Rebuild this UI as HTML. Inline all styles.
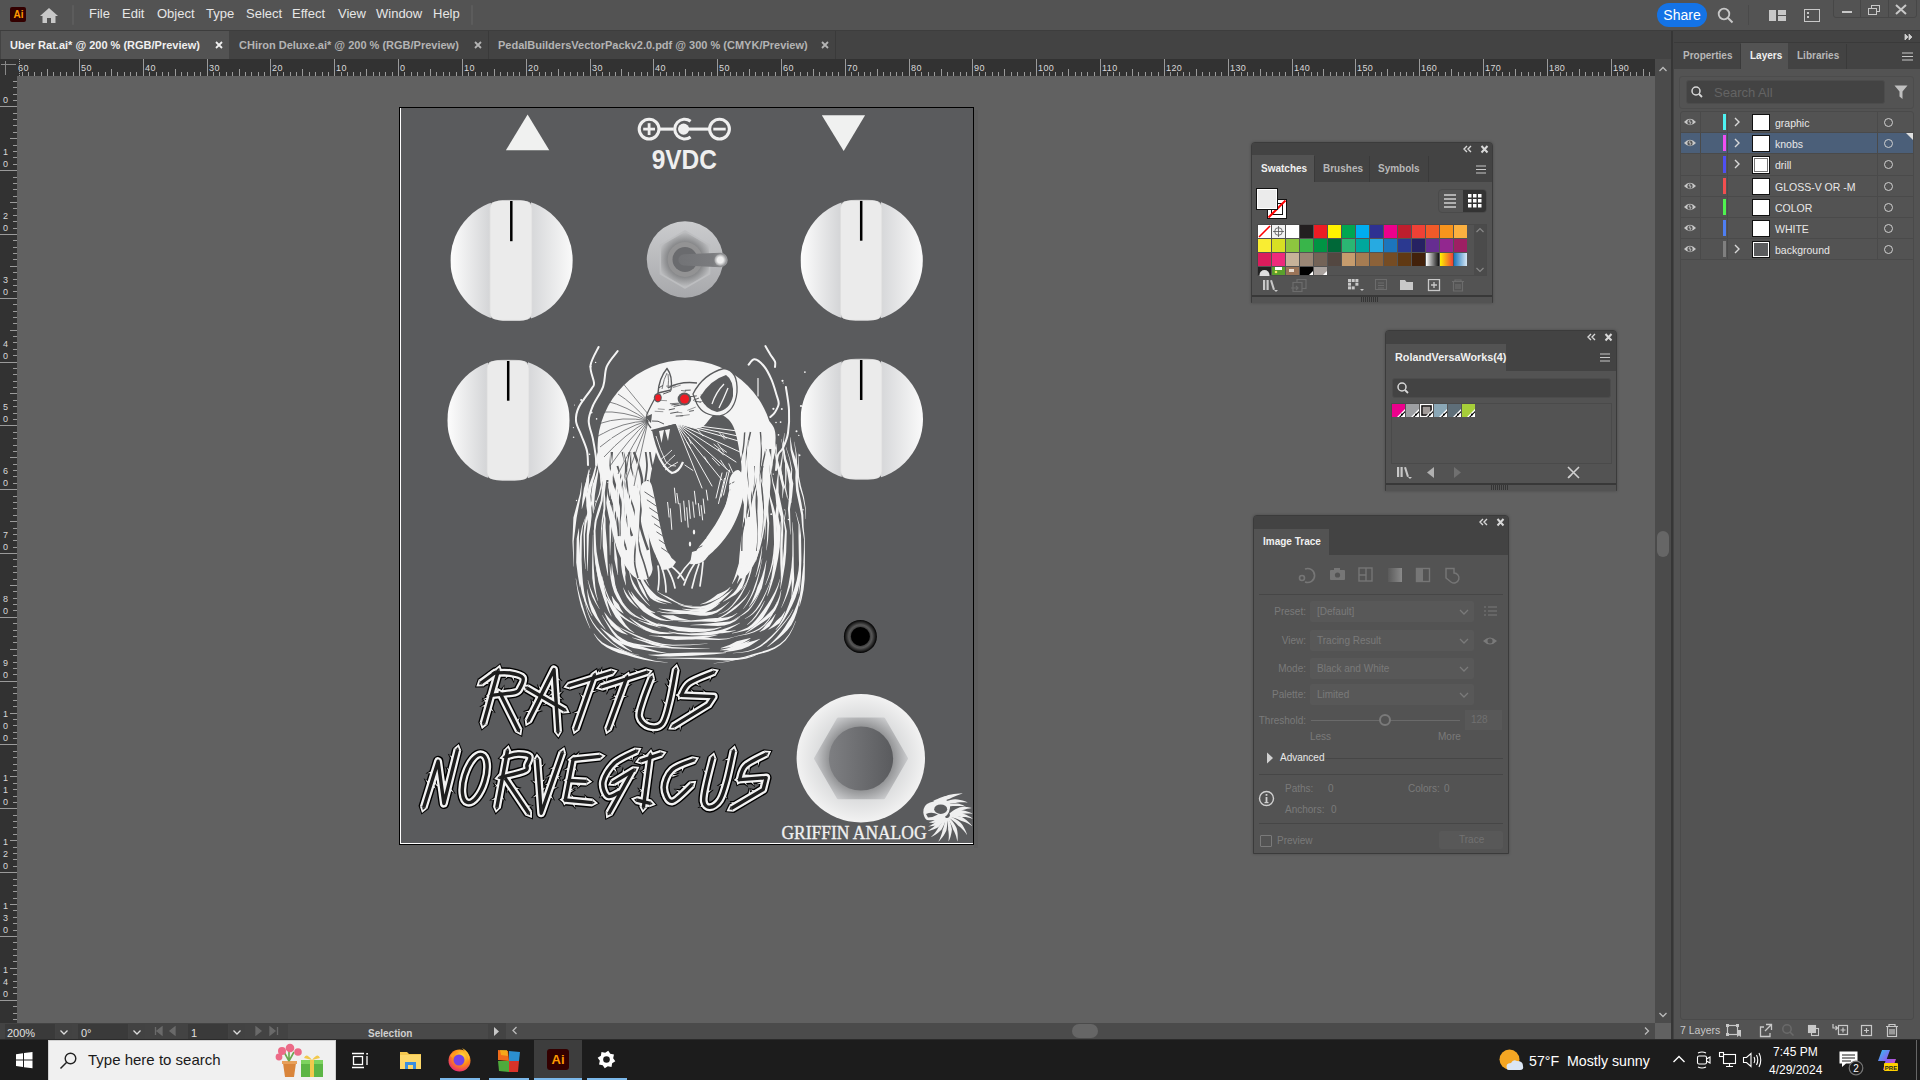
<!DOCTYPE html><html><head><meta charset="utf-8"><style>
*{margin:0;padding:0;box-sizing:border-box}
html,body{width:1920px;height:1080px;overflow:hidden;background:#616161;font-family:"Liberation Sans",sans-serif}
.a{position:absolute}
#menubar{left:0;top:0;width:1920px;height:31px;background:#535353;border-bottom:1px solid #3d3d3d}
.menu{top:6px;font-size:13px;color:#e6e6e6}
#tabbar{left:0;top:31px;width:1671px;height:28px;background:#434343}
.tab{top:0;height:28px;font-size:11px;font-weight:bold;color:#b4b4b4;line-height:28px;white-space:nowrap}
#ruler{left:0;top:59px;width:1655px;height:17px;background:#323232}
#vruler{left:0;top:59px;width:17px;height:964px;background:#323232}
.rl{font-size:10px;color:#c8c8c8;font-family:"Liberation Sans",sans-serif}
#canvas{left:17px;top:76px;width:1638px;height:947px;background:#616161}
#vscroll{left:1655px;top:59px;width:16px;height:964px;background:#4b4b4b}
#hscroll{left:506px;top:1023px;width:1149px;height:16px;background:#4b4b4b}
#status{left:0;top:1023px;width:506px;height:16px;background:#434343}
#rpanel{left:1674px;top:31px;width:246px;height:1008px;background:#535353}
#taskbar{left:0;top:1040px;width:1920px;height:40px;background:#1c1c1c}
</style></head><body>
<div id="menubar" class="a"></div>
<div class="a" style="left:10px;top:7px;width:16px;height:15px;background:#330000;border-radius:2px"></div>
<div class="a" style="left:11px;top:7px;width:15px;height:15px;font-size:10px;font-weight:bold;color:#ff9a00;line-height:15px;text-align:center">Ai</div>
<svg class="a" style="left:39px;top:7px" width="20" height="17" viewBox="0 0 20 17"><path d="M10 1 L19 9 L16.5 9 L16.5 16 L12 16 L12 11 L8 11 L8 16 L3.5 16 L3.5 9 L1 9 Z" fill="#c8c8c8"/></svg>
<div class="a" style="left:72px;top:5px;width:2px;height:20px;background:#5c5c5c;border-radius:1px"></div>
<div class="a menu" style="left:89px">File</div>
<div class="a menu" style="left:122px">Edit</div>
<div class="a menu" style="left:157px">Object</div>
<div class="a menu" style="left:206px">Type</div>
<div class="a menu" style="left:246px">Select</div>
<div class="a menu" style="left:292px">Effect</div>
<div class="a menu" style="left:338px">View</div>
<div class="a menu" style="left:376px">Window</div>
<div class="a menu" style="left:433px">Help</div>
<div class="a" style="left:471px;top:5px;width:2px;height:20px;background:#5c5c5c;border-radius:1px"></div>
<div class="a" style="left:1657px;top:3px;width:50px;height:24px;background:#1473e6;border-radius:12px;color:#fff;font-size:14px;line-height:24px;text-align:center">Share</div>
<svg class="a" style="left:1717px;top:7px" width="18" height="17" viewBox="0 0 18 17"><circle cx="7" cy="7" r="5.3" stroke="#c8c8c8" stroke-width="1.8" fill="none"/><line x1="11" y1="11" x2="15.5" y2="15.5" stroke="#c8c8c8" stroke-width="2"/></svg>
<div class="a" style="left:1748px;top:5px;width:1px;height:20px;background:#4a4a4a"></div>
<div class="a" style="left:1769px;top:10px;width:7px;height:11px;background:#c8c8c8"></div><div class="a" style="left:1778px;top:10px;width:8px;height:5px;background:#c8c8c8"></div><div class="a" style="left:1778px;top:16px;width:8px;height:5px;background:#c8c8c8"></div>
<div class="a" style="left:1804px;top:9px;width:16px;height:13px;border:1.5px solid #c8c8c8"></div><div class="a" style="left:1807px;top:12px;width:2px;height:6px;border-left:2px dotted #c8c8c8"></div>
<div class="a" style="left:1833px;top:-2px;width:84px;height:20px;border:1px solid #474747;border-radius:3px"></div>
<div class="a" style="left:1860px;top:0px;width:1px;height:18px;background:#474747"></div><div class="a" style="left:1888px;top:0px;width:1px;height:18px;background:#474747"></div>
<div class="a" style="left:1842px;top:11px;width:10px;height:2px;background:#c8c8c8"></div>
<div class="a" style="left:1871px;top:5px;width:9px;height:7px;border:1.5px solid #c8c8c8"></div><div class="a" style="left:1868px;top:8px;width:9px;height:7px;border:1.5px solid #c8c8c8;background:#535353"></div>
<svg class="a" style="left:1895px;top:4px" width="12" height="11"><path d="M1 1 L11 10 M11 1 L1 10" stroke="#c8c8c8" stroke-width="2"/></svg>
<div id="tabbar" class="a"></div>
<div class="a" style="left:1px;top:31px;width:228px;height:28px;background:#535353"></div>
<div class="a tab" style="left:10px;top:31px;color:#f0f0f0">Uber Rat.ai* @ 200 % (RGB/Preview)</div>
<svg class="a" style="left:215px;top:41px" width="8" height="8"><path d="M1 1 L7 7 M7 1 L1 7" stroke="#f0f0f0" stroke-width="1.8"/></svg>
<div class="a tab" style="left:239px;top:31px">CHiron Deluxe.ai* @ 200 % (RGB/Preview)</div>
<svg class="a" style="left:474px;top:41px" width="8" height="8"><path d="M1 1 L7 7 M7 1 L1 7" stroke="#b4b4b4" stroke-width="1.8"/></svg>
<div class="a" style="left:488px;top:31px;width:1px;height:28px;background:#3a3a3a"></div>
<div class="a tab" style="left:498px;top:31px">PedalBuildersVectorPackv2.0.pdf @ 300 % (CMYK/Preview)</div>
<svg class="a" style="left:821px;top:41px" width="8" height="8"><path d="M1 1 L7 7 M7 1 L1 7" stroke="#b4b4b4" stroke-width="1.8"/></svg>
<div class="a" style="left:835px;top:31px;width:1px;height:28px;background:#3a3a3a"></div>
<div id="ruler" class="a"></div>
<div id="vruler" class="a"></div>
<div id="canvas" class="a"></div>
<svg class="a" style="left:0;top:59px" width="1655" height="17"><text x="18" y="12" fill="#d8d8d8" font-size="9" letter-spacing="0.4" font-family="Liberation Sans">60</text><line x1="19.5" y1="0" x2="19.5" y2="17" stroke="#9a9a9a" stroke-dasharray="1 1"/><line x1="22.5" y1="13" x2="22.5" y2="17" stroke="#9a9a9a" stroke-width="1"/><line x1="28.5" y1="13" x2="28.5" y2="17" stroke="#9a9a9a" stroke-width="1"/><line x1="34.5" y1="13" x2="34.5" y2="17" stroke="#9a9a9a" stroke-width="1"/><line x1="41.5" y1="13" x2="41.5" y2="17" stroke="#9a9a9a" stroke-width="1"/><line x1="47.5" y1="10" x2="47.5" y2="17" stroke="#9a9a9a" stroke-width="1"/><line x1="53.5" y1="13" x2="53.5" y2="17" stroke="#9a9a9a" stroke-width="1"/><line x1="60.5" y1="13" x2="60.5" y2="17" stroke="#9a9a9a" stroke-width="1"/><line x1="66.5" y1="13" x2="66.5" y2="17" stroke="#9a9a9a" stroke-width="1"/><line x1="73.5" y1="13" x2="73.5" y2="17" stroke="#9a9a9a" stroke-width="1"/><line x1="79.5" y1="0" x2="79.5" y2="17" stroke="#9a9a9a" stroke-width="1"/><text x="81" y="12" fill="#d8d8d8" font-size="9" letter-spacing="0.4" font-family="Liberation Sans">50</text><line x1="85.5" y1="13" x2="85.5" y2="17" stroke="#9a9a9a" stroke-width="1"/><line x1="92.5" y1="13" x2="92.5" y2="17" stroke="#9a9a9a" stroke-width="1"/><line x1="98.5" y1="13" x2="98.5" y2="17" stroke="#9a9a9a" stroke-width="1"/><line x1="105.5" y1="13" x2="105.5" y2="17" stroke="#9a9a9a" stroke-width="1"/><line x1="111.5" y1="10" x2="111.5" y2="17" stroke="#9a9a9a" stroke-width="1"/><line x1="117.5" y1="13" x2="117.5" y2="17" stroke="#9a9a9a" stroke-width="1"/><line x1="124.5" y1="13" x2="124.5" y2="17" stroke="#9a9a9a" stroke-width="1"/><line x1="130.5" y1="13" x2="130.5" y2="17" stroke="#9a9a9a" stroke-width="1"/><line x1="136.5" y1="13" x2="136.5" y2="17" stroke="#9a9a9a" stroke-width="1"/><line x1="143.5" y1="0" x2="143.5" y2="17" stroke="#9a9a9a" stroke-width="1"/><text x="145" y="12" fill="#d8d8d8" font-size="9" letter-spacing="0.4" font-family="Liberation Sans">40</text><line x1="149.5" y1="13" x2="149.5" y2="17" stroke="#9a9a9a" stroke-width="1"/><line x1="156.5" y1="13" x2="156.5" y2="17" stroke="#9a9a9a" stroke-width="1"/><line x1="162.5" y1="13" x2="162.5" y2="17" stroke="#9a9a9a" stroke-width="1"/><line x1="168.5" y1="13" x2="168.5" y2="17" stroke="#9a9a9a" stroke-width="1"/><line x1="175.5" y1="10" x2="175.5" y2="17" stroke="#9a9a9a" stroke-width="1"/><line x1="181.5" y1="13" x2="181.5" y2="17" stroke="#9a9a9a" stroke-width="1"/><line x1="187.5" y1="13" x2="187.5" y2="17" stroke="#9a9a9a" stroke-width="1"/><line x1="194.5" y1="13" x2="194.5" y2="17" stroke="#9a9a9a" stroke-width="1"/><line x1="200.5" y1="13" x2="200.5" y2="17" stroke="#9a9a9a" stroke-width="1"/><line x1="207.5" y1="0" x2="207.5" y2="17" stroke="#9a9a9a" stroke-width="1"/><text x="209" y="12" fill="#d8d8d8" font-size="9" letter-spacing="0.4" font-family="Liberation Sans">30</text><line x1="213.5" y1="13" x2="213.5" y2="17" stroke="#9a9a9a" stroke-width="1"/><line x1="219.5" y1="13" x2="219.5" y2="17" stroke="#9a9a9a" stroke-width="1"/><line x1="226.5" y1="13" x2="226.5" y2="17" stroke="#9a9a9a" stroke-width="1"/><line x1="232.5" y1="13" x2="232.5" y2="17" stroke="#9a9a9a" stroke-width="1"/><line x1="239.5" y1="10" x2="239.5" y2="17" stroke="#9a9a9a" stroke-width="1"/><line x1="245.5" y1="13" x2="245.5" y2="17" stroke="#9a9a9a" stroke-width="1"/><line x1="251.5" y1="13" x2="251.5" y2="17" stroke="#9a9a9a" stroke-width="1"/><line x1="258.5" y1="13" x2="258.5" y2="17" stroke="#9a9a9a" stroke-width="1"/><line x1="264.5" y1="13" x2="264.5" y2="17" stroke="#9a9a9a" stroke-width="1"/><line x1="270.5" y1="0" x2="270.5" y2="17" stroke="#9a9a9a" stroke-width="1"/><text x="272" y="12" fill="#d8d8d8" font-size="9" letter-spacing="0.4" font-family="Liberation Sans">20</text><line x1="277.5" y1="13" x2="277.5" y2="17" stroke="#9a9a9a" stroke-width="1"/><line x1="283.5" y1="13" x2="283.5" y2="17" stroke="#9a9a9a" stroke-width="1"/><line x1="290.5" y1="13" x2="290.5" y2="17" stroke="#9a9a9a" stroke-width="1"/><line x1="296.5" y1="13" x2="296.5" y2="17" stroke="#9a9a9a" stroke-width="1"/><line x1="302.5" y1="10" x2="302.5" y2="17" stroke="#9a9a9a" stroke-width="1"/><line x1="309.5" y1="13" x2="309.5" y2="17" stroke="#9a9a9a" stroke-width="1"/><line x1="315.5" y1="13" x2="315.5" y2="17" stroke="#9a9a9a" stroke-width="1"/><line x1="322.5" y1="13" x2="322.5" y2="17" stroke="#9a9a9a" stroke-width="1"/><line x1="328.5" y1="13" x2="328.5" y2="17" stroke="#9a9a9a" stroke-width="1"/><line x1="334.5" y1="0" x2="334.5" y2="17" stroke="#9a9a9a" stroke-width="1"/><text x="336" y="12" fill="#d8d8d8" font-size="9" letter-spacing="0.4" font-family="Liberation Sans">10</text><line x1="341.5" y1="13" x2="341.5" y2="17" stroke="#9a9a9a" stroke-width="1"/><line x1="347.5" y1="13" x2="347.5" y2="17" stroke="#9a9a9a" stroke-width="1"/><line x1="353.5" y1="13" x2="353.5" y2="17" stroke="#9a9a9a" stroke-width="1"/><line x1="360.5" y1="13" x2="360.5" y2="17" stroke="#9a9a9a" stroke-width="1"/><line x1="366.5" y1="10" x2="366.5" y2="17" stroke="#9a9a9a" stroke-width="1"/><line x1="373.5" y1="13" x2="373.5" y2="17" stroke="#9a9a9a" stroke-width="1"/><line x1="379.5" y1="13" x2="379.5" y2="17" stroke="#9a9a9a" stroke-width="1"/><line x1="385.5" y1="13" x2="385.5" y2="17" stroke="#9a9a9a" stroke-width="1"/><line x1="392.5" y1="13" x2="392.5" y2="17" stroke="#9a9a9a" stroke-width="1"/><line x1="398.5" y1="0" x2="398.5" y2="17" stroke="#9a9a9a" stroke-width="1"/><text x="400" y="12" fill="#d8d8d8" font-size="9" letter-spacing="0.4" font-family="Liberation Sans">0</text><line x1="404.5" y1="13" x2="404.5" y2="17" stroke="#9a9a9a" stroke-width="1"/><line x1="411.5" y1="13" x2="411.5" y2="17" stroke="#9a9a9a" stroke-width="1"/><line x1="417.5" y1="13" x2="417.5" y2="17" stroke="#9a9a9a" stroke-width="1"/><line x1="424.5" y1="13" x2="424.5" y2="17" stroke="#9a9a9a" stroke-width="1"/><line x1="430.5" y1="10" x2="430.5" y2="17" stroke="#9a9a9a" stroke-width="1"/><line x1="436.5" y1="13" x2="436.5" y2="17" stroke="#9a9a9a" stroke-width="1"/><line x1="443.5" y1="13" x2="443.5" y2="17" stroke="#9a9a9a" stroke-width="1"/><line x1="449.5" y1="13" x2="449.5" y2="17" stroke="#9a9a9a" stroke-width="1"/><line x1="456.5" y1="13" x2="456.5" y2="17" stroke="#9a9a9a" stroke-width="1"/><line x1="462.5" y1="0" x2="462.5" y2="17" stroke="#9a9a9a" stroke-width="1"/><text x="464" y="12" fill="#d8d8d8" font-size="9" letter-spacing="0.4" font-family="Liberation Sans">10</text><line x1="468.5" y1="13" x2="468.5" y2="17" stroke="#9a9a9a" stroke-width="1"/><line x1="475.5" y1="13" x2="475.5" y2="17" stroke="#9a9a9a" stroke-width="1"/><line x1="481.5" y1="13" x2="481.5" y2="17" stroke="#9a9a9a" stroke-width="1"/><line x1="487.5" y1="13" x2="487.5" y2="17" stroke="#9a9a9a" stroke-width="1"/><line x1="494.5" y1="10" x2="494.5" y2="17" stroke="#9a9a9a" stroke-width="1"/><line x1="500.5" y1="13" x2="500.5" y2="17" stroke="#9a9a9a" stroke-width="1"/><line x1="507.5" y1="13" x2="507.5" y2="17" stroke="#9a9a9a" stroke-width="1"/><line x1="513.5" y1="13" x2="513.5" y2="17" stroke="#9a9a9a" stroke-width="1"/><line x1="519.5" y1="13" x2="519.5" y2="17" stroke="#9a9a9a" stroke-width="1"/><line x1="526.5" y1="0" x2="526.5" y2="17" stroke="#9a9a9a" stroke-width="1"/><text x="528" y="12" fill="#d8d8d8" font-size="9" letter-spacing="0.4" font-family="Liberation Sans">20</text><line x1="532.5" y1="13" x2="532.5" y2="17" stroke="#9a9a9a" stroke-width="1"/><line x1="539.5" y1="13" x2="539.5" y2="17" stroke="#9a9a9a" stroke-width="1"/><line x1="545.5" y1="13" x2="545.5" y2="17" stroke="#9a9a9a" stroke-width="1"/><line x1="551.5" y1="13" x2="551.5" y2="17" stroke="#9a9a9a" stroke-width="1"/><line x1="558.5" y1="10" x2="558.5" y2="17" stroke="#9a9a9a" stroke-width="1"/><line x1="564.5" y1="13" x2="564.5" y2="17" stroke="#9a9a9a" stroke-width="1"/><line x1="570.5" y1="13" x2="570.5" y2="17" stroke="#9a9a9a" stroke-width="1"/><line x1="577.5" y1="13" x2="577.5" y2="17" stroke="#9a9a9a" stroke-width="1"/><line x1="583.5" y1="13" x2="583.5" y2="17" stroke="#9a9a9a" stroke-width="1"/><line x1="590.5" y1="0" x2="590.5" y2="17" stroke="#9a9a9a" stroke-width="1"/><text x="592" y="12" fill="#d8d8d8" font-size="9" letter-spacing="0.4" font-family="Liberation Sans">30</text><line x1="596.5" y1="13" x2="596.5" y2="17" stroke="#9a9a9a" stroke-width="1"/><line x1="602.5" y1="13" x2="602.5" y2="17" stroke="#9a9a9a" stroke-width="1"/><line x1="609.5" y1="13" x2="609.5" y2="17" stroke="#9a9a9a" stroke-width="1"/><line x1="615.5" y1="13" x2="615.5" y2="17" stroke="#9a9a9a" stroke-width="1"/><line x1="621.5" y1="10" x2="621.5" y2="17" stroke="#9a9a9a" stroke-width="1"/><line x1="628.5" y1="13" x2="628.5" y2="17" stroke="#9a9a9a" stroke-width="1"/><line x1="634.5" y1="13" x2="634.5" y2="17" stroke="#9a9a9a" stroke-width="1"/><line x1="641.5" y1="13" x2="641.5" y2="17" stroke="#9a9a9a" stroke-width="1"/><line x1="647.5" y1="13" x2="647.5" y2="17" stroke="#9a9a9a" stroke-width="1"/><line x1="653.5" y1="0" x2="653.5" y2="17" stroke="#9a9a9a" stroke-width="1"/><text x="655" y="12" fill="#d8d8d8" font-size="9" letter-spacing="0.4" font-family="Liberation Sans">40</text><line x1="660.5" y1="13" x2="660.5" y2="17" stroke="#9a9a9a" stroke-width="1"/><line x1="666.5" y1="13" x2="666.5" y2="17" stroke="#9a9a9a" stroke-width="1"/><line x1="673.5" y1="13" x2="673.5" y2="17" stroke="#9a9a9a" stroke-width="1"/><line x1="679.5" y1="13" x2="679.5" y2="17" stroke="#9a9a9a" stroke-width="1"/><line x1="685.5" y1="10" x2="685.5" y2="17" stroke="#9a9a9a" stroke-width="1"/><line x1="692.5" y1="13" x2="692.5" y2="17" stroke="#9a9a9a" stroke-width="1"/><line x1="698.5" y1="13" x2="698.5" y2="17" stroke="#9a9a9a" stroke-width="1"/><line x1="704.5" y1="13" x2="704.5" y2="17" stroke="#9a9a9a" stroke-width="1"/><line x1="711.5" y1="13" x2="711.5" y2="17" stroke="#9a9a9a" stroke-width="1"/><line x1="717.5" y1="0" x2="717.5" y2="17" stroke="#9a9a9a" stroke-width="1"/><text x="719" y="12" fill="#d8d8d8" font-size="9" letter-spacing="0.4" font-family="Liberation Sans">50</text><line x1="724.5" y1="13" x2="724.5" y2="17" stroke="#9a9a9a" stroke-width="1"/><line x1="730.5" y1="13" x2="730.5" y2="17" stroke="#9a9a9a" stroke-width="1"/><line x1="736.5" y1="13" x2="736.5" y2="17" stroke="#9a9a9a" stroke-width="1"/><line x1="743.5" y1="13" x2="743.5" y2="17" stroke="#9a9a9a" stroke-width="1"/><line x1="749.5" y1="10" x2="749.5" y2="17" stroke="#9a9a9a" stroke-width="1"/><line x1="755.5" y1="13" x2="755.5" y2="17" stroke="#9a9a9a" stroke-width="1"/><line x1="762.5" y1="13" x2="762.5" y2="17" stroke="#9a9a9a" stroke-width="1"/><line x1="768.5" y1="13" x2="768.5" y2="17" stroke="#9a9a9a" stroke-width="1"/><line x1="775.5" y1="13" x2="775.5" y2="17" stroke="#9a9a9a" stroke-width="1"/><line x1="781.5" y1="0" x2="781.5" y2="17" stroke="#9a9a9a" stroke-width="1"/><text x="783" y="12" fill="#d8d8d8" font-size="9" letter-spacing="0.4" font-family="Liberation Sans">60</text><line x1="787.5" y1="13" x2="787.5" y2="17" stroke="#9a9a9a" stroke-width="1"/><line x1="794.5" y1="13" x2="794.5" y2="17" stroke="#9a9a9a" stroke-width="1"/><line x1="800.5" y1="13" x2="800.5" y2="17" stroke="#9a9a9a" stroke-width="1"/><line x1="807.5" y1="13" x2="807.5" y2="17" stroke="#9a9a9a" stroke-width="1"/><line x1="813.5" y1="10" x2="813.5" y2="17" stroke="#9a9a9a" stroke-width="1"/><line x1="819.5" y1="13" x2="819.5" y2="17" stroke="#9a9a9a" stroke-width="1"/><line x1="826.5" y1="13" x2="826.5" y2="17" stroke="#9a9a9a" stroke-width="1"/><line x1="832.5" y1="13" x2="832.5" y2="17" stroke="#9a9a9a" stroke-width="1"/><line x1="838.5" y1="13" x2="838.5" y2="17" stroke="#9a9a9a" stroke-width="1"/><line x1="845.5" y1="0" x2="845.5" y2="17" stroke="#9a9a9a" stroke-width="1"/><text x="847" y="12" fill="#d8d8d8" font-size="9" letter-spacing="0.4" font-family="Liberation Sans">70</text><line x1="851.5" y1="13" x2="851.5" y2="17" stroke="#9a9a9a" stroke-width="1"/><line x1="858.5" y1="13" x2="858.5" y2="17" stroke="#9a9a9a" stroke-width="1"/><line x1="864.5" y1="13" x2="864.5" y2="17" stroke="#9a9a9a" stroke-width="1"/><line x1="870.5" y1="13" x2="870.5" y2="17" stroke="#9a9a9a" stroke-width="1"/><line x1="877.5" y1="10" x2="877.5" y2="17" stroke="#9a9a9a" stroke-width="1"/><line x1="883.5" y1="13" x2="883.5" y2="17" stroke="#9a9a9a" stroke-width="1"/><line x1="890.5" y1="13" x2="890.5" y2="17" stroke="#9a9a9a" stroke-width="1"/><line x1="896.5" y1="13" x2="896.5" y2="17" stroke="#9a9a9a" stroke-width="1"/><line x1="902.5" y1="13" x2="902.5" y2="17" stroke="#9a9a9a" stroke-width="1"/><line x1="909.5" y1="0" x2="909.5" y2="17" stroke="#9a9a9a" stroke-width="1"/><text x="911" y="12" fill="#d8d8d8" font-size="9" letter-spacing="0.4" font-family="Liberation Sans">80</text><line x1="915.5" y1="13" x2="915.5" y2="17" stroke="#9a9a9a" stroke-width="1"/><line x1="921.5" y1="13" x2="921.5" y2="17" stroke="#9a9a9a" stroke-width="1"/><line x1="928.5" y1="13" x2="928.5" y2="17" stroke="#9a9a9a" stroke-width="1"/><line x1="934.5" y1="13" x2="934.5" y2="17" stroke="#9a9a9a" stroke-width="1"/><line x1="941.5" y1="10" x2="941.5" y2="17" stroke="#9a9a9a" stroke-width="1"/><line x1="947.5" y1="13" x2="947.5" y2="17" stroke="#9a9a9a" stroke-width="1"/><line x1="953.5" y1="13" x2="953.5" y2="17" stroke="#9a9a9a" stroke-width="1"/><line x1="960.5" y1="13" x2="960.5" y2="17" stroke="#9a9a9a" stroke-width="1"/><line x1="966.5" y1="13" x2="966.5" y2="17" stroke="#9a9a9a" stroke-width="1"/><line x1="972.5" y1="0" x2="972.5" y2="17" stroke="#9a9a9a" stroke-width="1"/><text x="974" y="12" fill="#d8d8d8" font-size="9" letter-spacing="0.4" font-family="Liberation Sans">90</text><line x1="979.5" y1="13" x2="979.5" y2="17" stroke="#9a9a9a" stroke-width="1"/><line x1="985.5" y1="13" x2="985.5" y2="17" stroke="#9a9a9a" stroke-width="1"/><line x1="992.5" y1="13" x2="992.5" y2="17" stroke="#9a9a9a" stroke-width="1"/><line x1="998.5" y1="13" x2="998.5" y2="17" stroke="#9a9a9a" stroke-width="1"/><line x1="1004.5" y1="10" x2="1004.5" y2="17" stroke="#9a9a9a" stroke-width="1"/><line x1="1011.5" y1="13" x2="1011.5" y2="17" stroke="#9a9a9a" stroke-width="1"/><line x1="1017.5" y1="13" x2="1017.5" y2="17" stroke="#9a9a9a" stroke-width="1"/><line x1="1024.5" y1="13" x2="1024.5" y2="17" stroke="#9a9a9a" stroke-width="1"/><line x1="1030.5" y1="13" x2="1030.5" y2="17" stroke="#9a9a9a" stroke-width="1"/><line x1="1036.5" y1="0" x2="1036.5" y2="17" stroke="#9a9a9a" stroke-width="1"/><text x="1038" y="12" fill="#d8d8d8" font-size="9" letter-spacing="0.4" font-family="Liberation Sans">100</text><line x1="1043.5" y1="13" x2="1043.5" y2="17" stroke="#9a9a9a" stroke-width="1"/><line x1="1049.5" y1="13" x2="1049.5" y2="17" stroke="#9a9a9a" stroke-width="1"/><line x1="1055.5" y1="13" x2="1055.5" y2="17" stroke="#9a9a9a" stroke-width="1"/><line x1="1062.5" y1="13" x2="1062.5" y2="17" stroke="#9a9a9a" stroke-width="1"/><line x1="1068.5" y1="10" x2="1068.5" y2="17" stroke="#9a9a9a" stroke-width="1"/><line x1="1075.5" y1="13" x2="1075.5" y2="17" stroke="#9a9a9a" stroke-width="1"/><line x1="1081.5" y1="13" x2="1081.5" y2="17" stroke="#9a9a9a" stroke-width="1"/><line x1="1087.5" y1="13" x2="1087.5" y2="17" stroke="#9a9a9a" stroke-width="1"/><line x1="1094.5" y1="13" x2="1094.5" y2="17" stroke="#9a9a9a" stroke-width="1"/><line x1="1100.5" y1="0" x2="1100.5" y2="17" stroke="#9a9a9a" stroke-width="1"/><text x="1102" y="12" fill="#d8d8d8" font-size="9" letter-spacing="0.4" font-family="Liberation Sans">110</text><line x1="1107.5" y1="13" x2="1107.5" y2="17" stroke="#9a9a9a" stroke-width="1"/><line x1="1113.5" y1="13" x2="1113.5" y2="17" stroke="#9a9a9a" stroke-width="1"/><line x1="1119.5" y1="13" x2="1119.5" y2="17" stroke="#9a9a9a" stroke-width="1"/><line x1="1126.5" y1="13" x2="1126.5" y2="17" stroke="#9a9a9a" stroke-width="1"/><line x1="1132.5" y1="10" x2="1132.5" y2="17" stroke="#9a9a9a" stroke-width="1"/><line x1="1138.5" y1="13" x2="1138.5" y2="17" stroke="#9a9a9a" stroke-width="1"/><line x1="1145.5" y1="13" x2="1145.5" y2="17" stroke="#9a9a9a" stroke-width="1"/><line x1="1151.5" y1="13" x2="1151.5" y2="17" stroke="#9a9a9a" stroke-width="1"/><line x1="1158.5" y1="13" x2="1158.5" y2="17" stroke="#9a9a9a" stroke-width="1"/><line x1="1164.5" y1="0" x2="1164.5" y2="17" stroke="#9a9a9a" stroke-width="1"/><text x="1166" y="12" fill="#d8d8d8" font-size="9" letter-spacing="0.4" font-family="Liberation Sans">120</text><line x1="1170.5" y1="13" x2="1170.5" y2="17" stroke="#9a9a9a" stroke-width="1"/><line x1="1177.5" y1="13" x2="1177.5" y2="17" stroke="#9a9a9a" stroke-width="1"/><line x1="1183.5" y1="13" x2="1183.5" y2="17" stroke="#9a9a9a" stroke-width="1"/><line x1="1189.5" y1="13" x2="1189.5" y2="17" stroke="#9a9a9a" stroke-width="1"/><line x1="1196.5" y1="10" x2="1196.5" y2="17" stroke="#9a9a9a" stroke-width="1"/><line x1="1202.5" y1="13" x2="1202.5" y2="17" stroke="#9a9a9a" stroke-width="1"/><line x1="1209.5" y1="13" x2="1209.5" y2="17" stroke="#9a9a9a" stroke-width="1"/><line x1="1215.5" y1="13" x2="1215.5" y2="17" stroke="#9a9a9a" stroke-width="1"/><line x1="1221.5" y1="13" x2="1221.5" y2="17" stroke="#9a9a9a" stroke-width="1"/><line x1="1228.5" y1="0" x2="1228.5" y2="17" stroke="#9a9a9a" stroke-width="1"/><text x="1230" y="12" fill="#d8d8d8" font-size="9" letter-spacing="0.4" font-family="Liberation Sans">130</text><line x1="1234.5" y1="13" x2="1234.5" y2="17" stroke="#9a9a9a" stroke-width="1"/><line x1="1241.5" y1="13" x2="1241.5" y2="17" stroke="#9a9a9a" stroke-width="1"/><line x1="1247.5" y1="13" x2="1247.5" y2="17" stroke="#9a9a9a" stroke-width="1"/><line x1="1253.5" y1="13" x2="1253.5" y2="17" stroke="#9a9a9a" stroke-width="1"/><line x1="1260.5" y1="10" x2="1260.5" y2="17" stroke="#9a9a9a" stroke-width="1"/><line x1="1266.5" y1="13" x2="1266.5" y2="17" stroke="#9a9a9a" stroke-width="1"/><line x1="1272.5" y1="13" x2="1272.5" y2="17" stroke="#9a9a9a" stroke-width="1"/><line x1="1279.5" y1="13" x2="1279.5" y2="17" stroke="#9a9a9a" stroke-width="1"/><line x1="1285.5" y1="13" x2="1285.5" y2="17" stroke="#9a9a9a" stroke-width="1"/><line x1="1292.5" y1="0" x2="1292.5" y2="17" stroke="#9a9a9a" stroke-width="1"/><text x="1294" y="12" fill="#d8d8d8" font-size="9" letter-spacing="0.4" font-family="Liberation Sans">140</text><line x1="1298.5" y1="13" x2="1298.5" y2="17" stroke="#9a9a9a" stroke-width="1"/><line x1="1304.5" y1="13" x2="1304.5" y2="17" stroke="#9a9a9a" stroke-width="1"/><line x1="1311.5" y1="13" x2="1311.5" y2="17" stroke="#9a9a9a" stroke-width="1"/><line x1="1317.5" y1="13" x2="1317.5" y2="17" stroke="#9a9a9a" stroke-width="1"/><line x1="1323.5" y1="10" x2="1323.5" y2="17" stroke="#9a9a9a" stroke-width="1"/><line x1="1330.5" y1="13" x2="1330.5" y2="17" stroke="#9a9a9a" stroke-width="1"/><line x1="1336.5" y1="13" x2="1336.5" y2="17" stroke="#9a9a9a" stroke-width="1"/><line x1="1343.5" y1="13" x2="1343.5" y2="17" stroke="#9a9a9a" stroke-width="1"/><line x1="1349.5" y1="13" x2="1349.5" y2="17" stroke="#9a9a9a" stroke-width="1"/><line x1="1355.5" y1="0" x2="1355.5" y2="17" stroke="#9a9a9a" stroke-width="1"/><text x="1357" y="12" fill="#d8d8d8" font-size="9" letter-spacing="0.4" font-family="Liberation Sans">150</text><line x1="1362.5" y1="13" x2="1362.5" y2="17" stroke="#9a9a9a" stroke-width="1"/><line x1="1368.5" y1="13" x2="1368.5" y2="17" stroke="#9a9a9a" stroke-width="1"/><line x1="1375.5" y1="13" x2="1375.5" y2="17" stroke="#9a9a9a" stroke-width="1"/><line x1="1381.5" y1="13" x2="1381.5" y2="17" stroke="#9a9a9a" stroke-width="1"/><line x1="1387.5" y1="10" x2="1387.5" y2="17" stroke="#9a9a9a" stroke-width="1"/><line x1="1394.5" y1="13" x2="1394.5" y2="17" stroke="#9a9a9a" stroke-width="1"/><line x1="1400.5" y1="13" x2="1400.5" y2="17" stroke="#9a9a9a" stroke-width="1"/><line x1="1406.5" y1="13" x2="1406.5" y2="17" stroke="#9a9a9a" stroke-width="1"/><line x1="1413.5" y1="13" x2="1413.5" y2="17" stroke="#9a9a9a" stroke-width="1"/><line x1="1419.5" y1="0" x2="1419.5" y2="17" stroke="#9a9a9a" stroke-width="1"/><text x="1421" y="12" fill="#d8d8d8" font-size="9" letter-spacing="0.4" font-family="Liberation Sans">160</text><line x1="1426.5" y1="13" x2="1426.5" y2="17" stroke="#9a9a9a" stroke-width="1"/><line x1="1432.5" y1="13" x2="1432.5" y2="17" stroke="#9a9a9a" stroke-width="1"/><line x1="1438.5" y1="13" x2="1438.5" y2="17" stroke="#9a9a9a" stroke-width="1"/><line x1="1445.5" y1="13" x2="1445.5" y2="17" stroke="#9a9a9a" stroke-width="1"/><line x1="1451.5" y1="10" x2="1451.5" y2="17" stroke="#9a9a9a" stroke-width="1"/><line x1="1458.5" y1="13" x2="1458.5" y2="17" stroke="#9a9a9a" stroke-width="1"/><line x1="1464.5" y1="13" x2="1464.5" y2="17" stroke="#9a9a9a" stroke-width="1"/><line x1="1470.5" y1="13" x2="1470.5" y2="17" stroke="#9a9a9a" stroke-width="1"/><line x1="1477.5" y1="13" x2="1477.5" y2="17" stroke="#9a9a9a" stroke-width="1"/><line x1="1483.5" y1="0" x2="1483.5" y2="17" stroke="#9a9a9a" stroke-width="1"/><text x="1485" y="12" fill="#d8d8d8" font-size="9" letter-spacing="0.4" font-family="Liberation Sans">170</text><line x1="1489.5" y1="13" x2="1489.5" y2="17" stroke="#9a9a9a" stroke-width="1"/><line x1="1496.5" y1="13" x2="1496.5" y2="17" stroke="#9a9a9a" stroke-width="1"/><line x1="1502.5" y1="13" x2="1502.5" y2="17" stroke="#9a9a9a" stroke-width="1"/><line x1="1509.5" y1="13" x2="1509.5" y2="17" stroke="#9a9a9a" stroke-width="1"/><line x1="1515.5" y1="10" x2="1515.5" y2="17" stroke="#9a9a9a" stroke-width="1"/><line x1="1521.5" y1="13" x2="1521.5" y2="17" stroke="#9a9a9a" stroke-width="1"/><line x1="1528.5" y1="13" x2="1528.5" y2="17" stroke="#9a9a9a" stroke-width="1"/><line x1="1534.5" y1="13" x2="1534.5" y2="17" stroke="#9a9a9a" stroke-width="1"/><line x1="1540.5" y1="13" x2="1540.5" y2="17" stroke="#9a9a9a" stroke-width="1"/><line x1="1547.5" y1="0" x2="1547.5" y2="17" stroke="#9a9a9a" stroke-width="1"/><text x="1549" y="12" fill="#d8d8d8" font-size="9" letter-spacing="0.4" font-family="Liberation Sans">180</text><line x1="1553.5" y1="13" x2="1553.5" y2="17" stroke="#9a9a9a" stroke-width="1"/><line x1="1560.5" y1="13" x2="1560.5" y2="17" stroke="#9a9a9a" stroke-width="1"/><line x1="1566.5" y1="13" x2="1566.5" y2="17" stroke="#9a9a9a" stroke-width="1"/><line x1="1572.5" y1="13" x2="1572.5" y2="17" stroke="#9a9a9a" stroke-width="1"/><line x1="1579.5" y1="10" x2="1579.5" y2="17" stroke="#9a9a9a" stroke-width="1"/><line x1="1585.5" y1="13" x2="1585.5" y2="17" stroke="#9a9a9a" stroke-width="1"/><line x1="1592.5" y1="13" x2="1592.5" y2="17" stroke="#9a9a9a" stroke-width="1"/><line x1="1598.5" y1="13" x2="1598.5" y2="17" stroke="#9a9a9a" stroke-width="1"/><line x1="1604.5" y1="13" x2="1604.5" y2="17" stroke="#9a9a9a" stroke-width="1"/><line x1="1611.5" y1="0" x2="1611.5" y2="17" stroke="#9a9a9a" stroke-width="1"/><text x="1613" y="12" fill="#d8d8d8" font-size="9" letter-spacing="0.4" font-family="Liberation Sans">190</text><line x1="1617.5" y1="13" x2="1617.5" y2="17" stroke="#9a9a9a" stroke-width="1"/><line x1="1623.5" y1="13" x2="1623.5" y2="17" stroke="#9a9a9a" stroke-width="1"/><line x1="1630.5" y1="13" x2="1630.5" y2="17" stroke="#9a9a9a" stroke-width="1"/><line x1="1636.5" y1="13" x2="1636.5" y2="17" stroke="#9a9a9a" stroke-width="1"/><line x1="1643.5" y1="10" x2="1643.5" y2="17" stroke="#9a9a9a" stroke-width="1"/><line x1="1649.5" y1="13" x2="1649.5" y2="17" stroke="#9a9a9a" stroke-width="1"/></svg>
<svg class="a" style="left:0;top:76px" width="17" height="947"><line x1="13" y1="5.5" x2="17" y2="5.5" stroke="#9a9a9a" stroke-width="1"/><line x1="13" y1="11.5" x2="17" y2="11.5" stroke="#9a9a9a" stroke-width="1"/><line x1="13" y1="18.5" x2="17" y2="18.5" stroke="#9a9a9a" stroke-width="1"/><line x1="13" y1="24.5" x2="17" y2="24.5" stroke="#9a9a9a" stroke-width="1"/><line x1="0" y1="30.5" x2="17" y2="30.5" stroke="#9a9a9a" stroke-width="1"/><text x="3" y="27" fill="#d8d8d8" font-size="9" font-family="Liberation Sans">0</text><line x1="13" y1="37.5" x2="17" y2="37.5" stroke="#9a9a9a" stroke-width="1"/><line x1="13" y1="43.5" x2="17" y2="43.5" stroke="#9a9a9a" stroke-width="1"/><line x1="13" y1="49.5" x2="17" y2="49.5" stroke="#9a9a9a" stroke-width="1"/><line x1="13" y1="56.5" x2="17" y2="56.5" stroke="#9a9a9a" stroke-width="1"/><line x1="10" y1="62.5" x2="17" y2="62.5" stroke="#9a9a9a" stroke-width="1"/><line x1="13" y1="69.5" x2="17" y2="69.5" stroke="#9a9a9a" stroke-width="1"/><line x1="13" y1="75.5" x2="17" y2="75.5" stroke="#9a9a9a" stroke-width="1"/><line x1="13" y1="81.5" x2="17" y2="81.5" stroke="#9a9a9a" stroke-width="1"/><line x1="13" y1="88.5" x2="17" y2="88.5" stroke="#9a9a9a" stroke-width="1"/><line x1="0" y1="94.5" x2="17" y2="94.5" stroke="#9a9a9a" stroke-width="1"/><text x="3" y="79" fill="#d8d8d8" font-size="9" font-family="Liberation Sans">1</text><text x="3" y="91" fill="#d8d8d8" font-size="9" font-family="Liberation Sans">0</text><line x1="13" y1="101.5" x2="17" y2="101.5" stroke="#9a9a9a" stroke-width="1"/><line x1="13" y1="107.5" x2="17" y2="107.5" stroke="#9a9a9a" stroke-width="1"/><line x1="13" y1="113.5" x2="17" y2="113.5" stroke="#9a9a9a" stroke-width="1"/><line x1="13" y1="120.5" x2="17" y2="120.5" stroke="#9a9a9a" stroke-width="1"/><line x1="10" y1="126.5" x2="17" y2="126.5" stroke="#9a9a9a" stroke-width="1"/><line x1="13" y1="132.5" x2="17" y2="132.5" stroke="#9a9a9a" stroke-width="1"/><line x1="13" y1="139.5" x2="17" y2="139.5" stroke="#9a9a9a" stroke-width="1"/><line x1="13" y1="145.5" x2="17" y2="145.5" stroke="#9a9a9a" stroke-width="1"/><line x1="13" y1="152.5" x2="17" y2="152.5" stroke="#9a9a9a" stroke-width="1"/><line x1="0" y1="158.5" x2="17" y2="158.5" stroke="#9a9a9a" stroke-width="1"/><text x="3" y="143" fill="#d8d8d8" font-size="9" font-family="Liberation Sans">2</text><text x="3" y="155" fill="#d8d8d8" font-size="9" font-family="Liberation Sans">0</text><line x1="13" y1="164.5" x2="17" y2="164.5" stroke="#9a9a9a" stroke-width="1"/><line x1="13" y1="171.5" x2="17" y2="171.5" stroke="#9a9a9a" stroke-width="1"/><line x1="13" y1="177.5" x2="17" y2="177.5" stroke="#9a9a9a" stroke-width="1"/><line x1="13" y1="183.5" x2="17" y2="183.5" stroke="#9a9a9a" stroke-width="1"/><line x1="10" y1="190.5" x2="17" y2="190.5" stroke="#9a9a9a" stroke-width="1"/><line x1="13" y1="196.5" x2="17" y2="196.5" stroke="#9a9a9a" stroke-width="1"/><line x1="13" y1="203.5" x2="17" y2="203.5" stroke="#9a9a9a" stroke-width="1"/><line x1="13" y1="209.5" x2="17" y2="209.5" stroke="#9a9a9a" stroke-width="1"/><line x1="13" y1="215.5" x2="17" y2="215.5" stroke="#9a9a9a" stroke-width="1"/><line x1="0" y1="222.5" x2="17" y2="222.5" stroke="#9a9a9a" stroke-width="1"/><text x="3" y="207" fill="#d8d8d8" font-size="9" font-family="Liberation Sans">3</text><text x="3" y="219" fill="#d8d8d8" font-size="9" font-family="Liberation Sans">0</text><line x1="13" y1="228.5" x2="17" y2="228.5" stroke="#9a9a9a" stroke-width="1"/><line x1="13" y1="235.5" x2="17" y2="235.5" stroke="#9a9a9a" stroke-width="1"/><line x1="13" y1="241.5" x2="17" y2="241.5" stroke="#9a9a9a" stroke-width="1"/><line x1="13" y1="247.5" x2="17" y2="247.5" stroke="#9a9a9a" stroke-width="1"/><line x1="10" y1="254.5" x2="17" y2="254.5" stroke="#9a9a9a" stroke-width="1"/><line x1="13" y1="260.5" x2="17" y2="260.5" stroke="#9a9a9a" stroke-width="1"/><line x1="13" y1="266.5" x2="17" y2="266.5" stroke="#9a9a9a" stroke-width="1"/><line x1="13" y1="273.5" x2="17" y2="273.5" stroke="#9a9a9a" stroke-width="1"/><line x1="13" y1="279.5" x2="17" y2="279.5" stroke="#9a9a9a" stroke-width="1"/><line x1="0" y1="286.5" x2="17" y2="286.5" stroke="#9a9a9a" stroke-width="1"/><text x="3" y="271" fill="#d8d8d8" font-size="9" font-family="Liberation Sans">4</text><text x="3" y="283" fill="#d8d8d8" font-size="9" font-family="Liberation Sans">0</text><line x1="13" y1="292.5" x2="17" y2="292.5" stroke="#9a9a9a" stroke-width="1"/><line x1="13" y1="298.5" x2="17" y2="298.5" stroke="#9a9a9a" stroke-width="1"/><line x1="13" y1="305.5" x2="17" y2="305.5" stroke="#9a9a9a" stroke-width="1"/><line x1="13" y1="311.5" x2="17" y2="311.5" stroke="#9a9a9a" stroke-width="1"/><line x1="10" y1="317.5" x2="17" y2="317.5" stroke="#9a9a9a" stroke-width="1"/><line x1="13" y1="324.5" x2="17" y2="324.5" stroke="#9a9a9a" stroke-width="1"/><line x1="13" y1="330.5" x2="17" y2="330.5" stroke="#9a9a9a" stroke-width="1"/><line x1="13" y1="337.5" x2="17" y2="337.5" stroke="#9a9a9a" stroke-width="1"/><line x1="13" y1="343.5" x2="17" y2="343.5" stroke="#9a9a9a" stroke-width="1"/><line x1="0" y1="349.5" x2="17" y2="349.5" stroke="#9a9a9a" stroke-width="1"/><text x="3" y="334" fill="#d8d8d8" font-size="9" font-family="Liberation Sans">5</text><text x="3" y="346" fill="#d8d8d8" font-size="9" font-family="Liberation Sans">0</text><line x1="13" y1="356.5" x2="17" y2="356.5" stroke="#9a9a9a" stroke-width="1"/><line x1="13" y1="362.5" x2="17" y2="362.5" stroke="#9a9a9a" stroke-width="1"/><line x1="13" y1="369.5" x2="17" y2="369.5" stroke="#9a9a9a" stroke-width="1"/><line x1="13" y1="375.5" x2="17" y2="375.5" stroke="#9a9a9a" stroke-width="1"/><line x1="10" y1="381.5" x2="17" y2="381.5" stroke="#9a9a9a" stroke-width="1"/><line x1="13" y1="388.5" x2="17" y2="388.5" stroke="#9a9a9a" stroke-width="1"/><line x1="13" y1="394.5" x2="17" y2="394.5" stroke="#9a9a9a" stroke-width="1"/><line x1="13" y1="400.5" x2="17" y2="400.5" stroke="#9a9a9a" stroke-width="1"/><line x1="13" y1="407.5" x2="17" y2="407.5" stroke="#9a9a9a" stroke-width="1"/><line x1="0" y1="413.5" x2="17" y2="413.5" stroke="#9a9a9a" stroke-width="1"/><text x="3" y="398" fill="#d8d8d8" font-size="9" font-family="Liberation Sans">6</text><text x="3" y="410" fill="#d8d8d8" font-size="9" font-family="Liberation Sans">0</text><line x1="13" y1="420.5" x2="17" y2="420.5" stroke="#9a9a9a" stroke-width="1"/><line x1="13" y1="426.5" x2="17" y2="426.5" stroke="#9a9a9a" stroke-width="1"/><line x1="13" y1="432.5" x2="17" y2="432.5" stroke="#9a9a9a" stroke-width="1"/><line x1="13" y1="439.5" x2="17" y2="439.5" stroke="#9a9a9a" stroke-width="1"/><line x1="10" y1="445.5" x2="17" y2="445.5" stroke="#9a9a9a" stroke-width="1"/><line x1="13" y1="452.5" x2="17" y2="452.5" stroke="#9a9a9a" stroke-width="1"/><line x1="13" y1="458.5" x2="17" y2="458.5" stroke="#9a9a9a" stroke-width="1"/><line x1="13" y1="464.5" x2="17" y2="464.5" stroke="#9a9a9a" stroke-width="1"/><line x1="13" y1="471.5" x2="17" y2="471.5" stroke="#9a9a9a" stroke-width="1"/><line x1="0" y1="477.5" x2="17" y2="477.5" stroke="#9a9a9a" stroke-width="1"/><text x="3" y="462" fill="#d8d8d8" font-size="9" font-family="Liberation Sans">7</text><text x="3" y="474" fill="#d8d8d8" font-size="9" font-family="Liberation Sans">0</text><line x1="13" y1="483.5" x2="17" y2="483.5" stroke="#9a9a9a" stroke-width="1"/><line x1="13" y1="490.5" x2="17" y2="490.5" stroke="#9a9a9a" stroke-width="1"/><line x1="13" y1="496.5" x2="17" y2="496.5" stroke="#9a9a9a" stroke-width="1"/><line x1="13" y1="503.5" x2="17" y2="503.5" stroke="#9a9a9a" stroke-width="1"/><line x1="10" y1="509.5" x2="17" y2="509.5" stroke="#9a9a9a" stroke-width="1"/><line x1="13" y1="515.5" x2="17" y2="515.5" stroke="#9a9a9a" stroke-width="1"/><line x1="13" y1="522.5" x2="17" y2="522.5" stroke="#9a9a9a" stroke-width="1"/><line x1="13" y1="528.5" x2="17" y2="528.5" stroke="#9a9a9a" stroke-width="1"/><line x1="13" y1="534.5" x2="17" y2="534.5" stroke="#9a9a9a" stroke-width="1"/><line x1="0" y1="541.5" x2="17" y2="541.5" stroke="#9a9a9a" stroke-width="1"/><text x="3" y="526" fill="#d8d8d8" font-size="9" font-family="Liberation Sans">8</text><text x="3" y="538" fill="#d8d8d8" font-size="9" font-family="Liberation Sans">0</text><line x1="13" y1="547.5" x2="17" y2="547.5" stroke="#9a9a9a" stroke-width="1"/><line x1="13" y1="554.5" x2="17" y2="554.5" stroke="#9a9a9a" stroke-width="1"/><line x1="13" y1="560.5" x2="17" y2="560.5" stroke="#9a9a9a" stroke-width="1"/><line x1="13" y1="566.5" x2="17" y2="566.5" stroke="#9a9a9a" stroke-width="1"/><line x1="10" y1="573.5" x2="17" y2="573.5" stroke="#9a9a9a" stroke-width="1"/><line x1="13" y1="579.5" x2="17" y2="579.5" stroke="#9a9a9a" stroke-width="1"/><line x1="13" y1="586.5" x2="17" y2="586.5" stroke="#9a9a9a" stroke-width="1"/><line x1="13" y1="592.5" x2="17" y2="592.5" stroke="#9a9a9a" stroke-width="1"/><line x1="13" y1="598.5" x2="17" y2="598.5" stroke="#9a9a9a" stroke-width="1"/><line x1="0" y1="605.5" x2="17" y2="605.5" stroke="#9a9a9a" stroke-width="1"/><text x="3" y="590" fill="#d8d8d8" font-size="9" font-family="Liberation Sans">9</text><text x="3" y="602" fill="#d8d8d8" font-size="9" font-family="Liberation Sans">0</text><line x1="13" y1="611.5" x2="17" y2="611.5" stroke="#9a9a9a" stroke-width="1"/><line x1="13" y1="617.5" x2="17" y2="617.5" stroke="#9a9a9a" stroke-width="1"/><line x1="13" y1="624.5" x2="17" y2="624.5" stroke="#9a9a9a" stroke-width="1"/><line x1="13" y1="630.5" x2="17" y2="630.5" stroke="#9a9a9a" stroke-width="1"/><line x1="10" y1="637.5" x2="17" y2="637.5" stroke="#9a9a9a" stroke-width="1"/><line x1="13" y1="643.5" x2="17" y2="643.5" stroke="#9a9a9a" stroke-width="1"/><line x1="13" y1="649.5" x2="17" y2="649.5" stroke="#9a9a9a" stroke-width="1"/><line x1="13" y1="656.5" x2="17" y2="656.5" stroke="#9a9a9a" stroke-width="1"/><line x1="13" y1="662.5" x2="17" y2="662.5" stroke="#9a9a9a" stroke-width="1"/><line x1="0" y1="668.5" x2="17" y2="668.5" stroke="#9a9a9a" stroke-width="1"/><text x="3" y="641" fill="#d8d8d8" font-size="9" font-family="Liberation Sans">1</text><text x="3" y="653" fill="#d8d8d8" font-size="9" font-family="Liberation Sans">0</text><text x="3" y="665" fill="#d8d8d8" font-size="9" font-family="Liberation Sans">0</text><line x1="13" y1="675.5" x2="17" y2="675.5" stroke="#9a9a9a" stroke-width="1"/><line x1="13" y1="681.5" x2="17" y2="681.5" stroke="#9a9a9a" stroke-width="1"/><line x1="13" y1="688.5" x2="17" y2="688.5" stroke="#9a9a9a" stroke-width="1"/><line x1="13" y1="694.5" x2="17" y2="694.5" stroke="#9a9a9a" stroke-width="1"/><line x1="10" y1="700.5" x2="17" y2="700.5" stroke="#9a9a9a" stroke-width="1"/><line x1="13" y1="707.5" x2="17" y2="707.5" stroke="#9a9a9a" stroke-width="1"/><line x1="13" y1="713.5" x2="17" y2="713.5" stroke="#9a9a9a" stroke-width="1"/><line x1="13" y1="720.5" x2="17" y2="720.5" stroke="#9a9a9a" stroke-width="1"/><line x1="13" y1="726.5" x2="17" y2="726.5" stroke="#9a9a9a" stroke-width="1"/><line x1="0" y1="732.5" x2="17" y2="732.5" stroke="#9a9a9a" stroke-width="1"/><text x="3" y="705" fill="#d8d8d8" font-size="9" font-family="Liberation Sans">1</text><text x="3" y="717" fill="#d8d8d8" font-size="9" font-family="Liberation Sans">1</text><text x="3" y="729" fill="#d8d8d8" font-size="9" font-family="Liberation Sans">0</text><line x1="13" y1="739.5" x2="17" y2="739.5" stroke="#9a9a9a" stroke-width="1"/><line x1="13" y1="745.5" x2="17" y2="745.5" stroke="#9a9a9a" stroke-width="1"/><line x1="13" y1="751.5" x2="17" y2="751.5" stroke="#9a9a9a" stroke-width="1"/><line x1="13" y1="758.5" x2="17" y2="758.5" stroke="#9a9a9a" stroke-width="1"/><line x1="10" y1="764.5" x2="17" y2="764.5" stroke="#9a9a9a" stroke-width="1"/><line x1="13" y1="771.5" x2="17" y2="771.5" stroke="#9a9a9a" stroke-width="1"/><line x1="13" y1="777.5" x2="17" y2="777.5" stroke="#9a9a9a" stroke-width="1"/><line x1="13" y1="783.5" x2="17" y2="783.5" stroke="#9a9a9a" stroke-width="1"/><line x1="13" y1="790.5" x2="17" y2="790.5" stroke="#9a9a9a" stroke-width="1"/><line x1="0" y1="796.5" x2="17" y2="796.5" stroke="#9a9a9a" stroke-width="1"/><text x="3" y="769" fill="#d8d8d8" font-size="9" font-family="Liberation Sans">1</text><text x="3" y="781" fill="#d8d8d8" font-size="9" font-family="Liberation Sans">2</text><text x="3" y="793" fill="#d8d8d8" font-size="9" font-family="Liberation Sans">0</text><line x1="13" y1="803.5" x2="17" y2="803.5" stroke="#9a9a9a" stroke-width="1"/><line x1="13" y1="809.5" x2="17" y2="809.5" stroke="#9a9a9a" stroke-width="1"/><line x1="13" y1="815.5" x2="17" y2="815.5" stroke="#9a9a9a" stroke-width="1"/><line x1="13" y1="822.5" x2="17" y2="822.5" stroke="#9a9a9a" stroke-width="1"/><line x1="10" y1="828.5" x2="17" y2="828.5" stroke="#9a9a9a" stroke-width="1"/><line x1="13" y1="834.5" x2="17" y2="834.5" stroke="#9a9a9a" stroke-width="1"/><line x1="13" y1="841.5" x2="17" y2="841.5" stroke="#9a9a9a" stroke-width="1"/><line x1="13" y1="847.5" x2="17" y2="847.5" stroke="#9a9a9a" stroke-width="1"/><line x1="13" y1="854.5" x2="17" y2="854.5" stroke="#9a9a9a" stroke-width="1"/><line x1="0" y1="860.5" x2="17" y2="860.5" stroke="#9a9a9a" stroke-width="1"/><text x="3" y="833" fill="#d8d8d8" font-size="9" font-family="Liberation Sans">1</text><text x="3" y="845" fill="#d8d8d8" font-size="9" font-family="Liberation Sans">3</text><text x="3" y="857" fill="#d8d8d8" font-size="9" font-family="Liberation Sans">0</text><line x1="13" y1="866.5" x2="17" y2="866.5" stroke="#9a9a9a" stroke-width="1"/><line x1="13" y1="873.5" x2="17" y2="873.5" stroke="#9a9a9a" stroke-width="1"/><line x1="13" y1="879.5" x2="17" y2="879.5" stroke="#9a9a9a" stroke-width="1"/><line x1="13" y1="885.5" x2="17" y2="885.5" stroke="#9a9a9a" stroke-width="1"/><line x1="10" y1="892.5" x2="17" y2="892.5" stroke="#9a9a9a" stroke-width="1"/><line x1="13" y1="898.5" x2="17" y2="898.5" stroke="#9a9a9a" stroke-width="1"/><line x1="13" y1="905.5" x2="17" y2="905.5" stroke="#9a9a9a" stroke-width="1"/><line x1="13" y1="911.5" x2="17" y2="911.5" stroke="#9a9a9a" stroke-width="1"/><line x1="13" y1="917.5" x2="17" y2="917.5" stroke="#9a9a9a" stroke-width="1"/><line x1="0" y1="924.5" x2="17" y2="924.5" stroke="#9a9a9a" stroke-width="1"/><text x="3" y="897" fill="#d8d8d8" font-size="9" font-family="Liberation Sans">1</text><text x="3" y="909" fill="#d8d8d8" font-size="9" font-family="Liberation Sans">4</text><text x="3" y="921" fill="#d8d8d8" font-size="9" font-family="Liberation Sans">0</text><line x1="13" y1="930.5" x2="17" y2="930.5" stroke="#9a9a9a" stroke-width="1"/><line x1="13" y1="937.5" x2="17" y2="937.5" stroke="#9a9a9a" stroke-width="1"/><line x1="13" y1="943.5" x2="17" y2="943.5" stroke="#9a9a9a" stroke-width="1"/></svg>
<div class="a" style="left:0;top:59px;width:17px;height:17px;background:#323232"></div>
<svg class="a" style="left:0;top:59px" width="17" height="17"><line x1="5.5" y1="2" x2="5.5" y2="16" stroke="#888"/><line x1="1" y1="5.5" x2="16" y2="5.5" stroke="#888"/></svg>
<div id="vscroll" class="a"></div>
<svg class="a" style="left:1655px;top:62px" width="16" height="14"><path d="M4.5 9 L8 5.5 L11.5 9" stroke="#bbb" stroke-width="1.3" fill="none"/></svg>
<svg class="a" style="left:1655px;top:1008px" width="16" height="14"><path d="M4.5 5 L8 8.5 L11.5 5" stroke="#bbb" stroke-width="1.3" fill="none"/></svg>
<div class="a" style="left:1657px;top:531px;width:12px;height:26px;background:#666;border-radius:6px"></div>
<div id="hscroll" class="a"></div>
<div class="a" style="left:1072px;top:1024px;width:26px;height:14px;background:#666;border-radius:7px"></div>
<svg class="a" style="left:1640px;top:1023px" width="14" height="16"><path d="M5 4.5 L8.5 8 L5 11.5" stroke="#bbb" stroke-width="1.3" fill="none"/></svg>
<svg class="a" style="left:508px;top:1023px" width="14" height="16"><path d="M8.5 4 L5 7.5 L8.5 11" stroke="#bbb" stroke-width="1.3" fill="none"/></svg>
<div id="status" class="a"></div>
<div class="a" style="left:5px;top:1024px;width:50px;height:15px;background:#3a3a3a"></div>
<div class="a" style="left:7px;top:1025px;font-size:11px;color:#e0e0e0;line-height:16px">200%</div>
<div class="a" style="left:56px;top:1024px;width:16px;height:15px;background:#424242"></div>
<svg class="a" style="left:56px;top:1024px" width="16" height="15"><path d="M4.5 6.5 L8 10 L11.5 6.5" stroke="#ddd" stroke-width="1.3" fill="none"/></svg>
<div class="a" style="left:78px;top:1024px;width:50px;height:15px;background:#3a3a3a"></div>
<div class="a" style="left:81px;top:1025px;font-size:11px;color:#e0e0e0;line-height:16px">0°</div>
<div class="a" style="left:129px;top:1024px;width:16px;height:15px;background:#424242"></div>
<svg class="a" style="left:129px;top:1024px" width="16" height="15"><path d="M4.5 6.5 L8 10 L11.5 6.5" stroke="#ddd" stroke-width="1.3" fill="none"/></svg>
<svg class="a" style="left:146px;top:1024px" width="42" height="15"><path d="M9.5 3 V11 M16 3 L11 7 L16 11 Z M29 3 L24 7 L29 11 Z" stroke="#6a6a6a" fill="#6a6a6a" stroke-width="1.3"/></svg>
<div class="a" style="left:188px;top:1024px;width:40px;height:15px;background:#3a3a3a"></div>
<div class="a" style="left:191px;top:1025px;font-size:11px;color:#e0e0e0;line-height:16px">1</div>
<div class="a" style="left:229px;top:1024px;width:16px;height:15px;background:#424242"></div>
<svg class="a" style="left:229px;top:1024px" width="16" height="15"><path d="M4.5 6.5 L8 10 L11.5 6.5" stroke="#ddd" stroke-width="1.3" fill="none"/></svg>
<svg class="a" style="left:246px;top:1024px" width="42" height="15"><path d="M10 3 L15 7 L10 11 Z M24 3 L29 7 L24 11 Z M31.5 3 V11" stroke="#6a6a6a" fill="#6a6a6a" stroke-width="1.3"/></svg>
<div class="a" style="left:288px;top:1024px;width:200px;height:15px;background:#494949"></div>
<div class="a" style="left:368px;top:1026px;font-size:10px;color:#cfcfcf;line-height:16px;font-weight:bold">Selection</div>
<svg class="a" style="left:488px;top:1024px" width="18" height="15"><path d="M6 3 L11 7.5 L6 12 Z" fill="#c8c8c8"/></svg>
<svg class="a" style="left:390px;top:100px" width="600" height="760" viewBox="390 100 600 760"><defs>
<linearGradient id="kl" x1="0" y1="0" x2="1" y2="0"><stop offset="0" stop-color="#fdfdfd"/><stop offset="1" stop-color="#d3d4d6"/></linearGradient>
<linearGradient id="kr" x1="0" y1="0" x2="1" y2="0"><stop offset="0" stop-color="#d6d7d9"/><stop offset="1" stop-color="#fafafa"/></linearGradient>
<linearGradient id="tg" x1="0" y1="0" x2="0" y2="1"><stop offset="0" stop-color="#cbccce"/><stop offset="1" stop-color="#a7a8ab"/></linearGradient>
<radialGradient id="hexg" gradientUnits="userSpaceOnUse" cx="685" cy="259.5" r="29"><stop offset="0.6" stop-color="#87888a"/><stop offset="1" stop-color="#c6c7c9"/></radialGradient>
<linearGradient id="lev" x1="0" y1="0" x2="1" y2="0"><stop offset="0" stop-color="#727376"/><stop offset="0.7" stop-color="#7a7b7e"/><stop offset="1" stop-color="#9a9b9d"/></linearGradient>
<radialGradient id="ball" cx="0.5" cy="0.5" r="0.5"><stop offset="0.5" stop-color="#eeeeee"/><stop offset="1" stop-color="#9a9b9d"/></radialGradient>
<radialGradient id="jackg" cx="0.5" cy="0.5" r="0.5"><stop offset="0.55" stop-color="#3a3a3a"/><stop offset="0.7" stop-color="#575757"/><stop offset="1" stop-color="#000"/></radialGradient>
<radialGradient id="fsw" cx="0.5" cy="0.5" r="0.5"><stop offset="0.6" stop-color="#d9dadb"/><stop offset="1" stop-color="#f2f2f2"/></radialGradient>
<radialGradient id="fhex" gradientUnits="userSpaceOnUse" cx="861" cy="758.5" r="47"><stop offset="0.68" stop-color="#939496"/><stop offset="1" stop-color="#cccdcf"/></radialGradient>
<linearGradient id="fcir" x1="0" y1="0" x2="1" y2="0"><stop offset="0" stop-color="#7e7f82"/><stop offset="1" stop-color="#5a5b5e"/></linearGradient>
</defs><rect x="974" y="110" width="4" height="738" fill="#5d5d5d"/><rect x="399" y="107" width="575" height="738" fill="#000"/><rect x="400" y="108" width="573" height="736" fill="#fff"/><rect x="401" y="108" width="572" height="735" fill="#5a5b5d"/><path d="M527.6 114.6 L549.3 150.2 L505.9 150.2 Z" fill="#f0f1f0"/><path d="M821.8 115.2 L865.1 115.2 L843.7 151 Z" fill="#f0f1f0"/><g stroke="#efefef" fill="none" stroke-width="3.1"><circle cx="649.1" cy="129.1" r="9.9"/><circle cx="719.5" cy="129.1" r="9.9"/><path d="M690.6 121.2 A9.9 9.9 0 1 0 690.6 137"/><line x1="659" y1="129.1" x2="673.7" y2="129.1"/><line x1="688" y1="129.1" x2="709.6" y2="129.1"/><line x1="643.2" y1="129.1" x2="655" y2="129.1" stroke-width="2.8"/><line x1="649.1" y1="123.2" x2="649.1" y2="135" stroke-width="2.8"/><line x1="713.3" y1="129.1" x2="725.7" y2="129.1" stroke-width="2.8"/></g><circle cx="683.6" cy="129.1" r="5.6" fill="#efefef"/><text x="684.3" y="168.6" font-family="Liberation Sans" font-weight="bold" font-size="28.5" fill="#efefef" text-anchor="middle" transform="translate(684.3 0) scale(0.86 1) translate(-684.3 0)">9VDC</text><clipPath id="kc1"><circle cx="511.6" cy="260.4" r="61.2"/></clipPath><g clip-path="url(#kc1)"><rect x="450.40000000000003" y="199.2" width="40.49999999999994" height="122.4" fill="url(#kl)"/><rect x="531" y="199.2" width="41.80000000000007" height="122.4" fill="url(#kr)"/><rect x="489.9" y="200.39999999999998" width="42.10000000000002" height="120.0" rx="8" fill="#ebebeb" stroke="#dcdcdc" stroke-width="0.8"/></g><rect x="510.05" y="201" width="2.5" height="40.19999999999999" fill="#000"/><clipPath id="kc2"><circle cx="861.7" cy="260.3" r="61.2"/></clipPath><g clip-path="url(#kc2)"><rect x="800.5" y="199.10000000000002" width="40.89999999999998" height="122.4" fill="url(#kl)"/><rect x="880.9" y="199.10000000000002" width="42.000000000000114" height="122.4" fill="url(#kr)"/><rect x="840.4" y="200.3" width="41.5" height="120.0" rx="8" fill="#ebebeb" stroke="#dcdcdc" stroke-width="0.8"/></g><rect x="859.95" y="200.9" width="2.5" height="39.79999999999998" fill="#000"/><clipPath id="kc3"><circle cx="508.5" cy="420.3" r="61.2"/></clipPath><g clip-path="url(#kc3)"><rect x="447.3" y="359.1" width="40.69999999999999" height="122.4" fill="url(#kl)"/><rect x="528" y="359.1" width="41.700000000000045" height="122.4" fill="url(#kr)"/><rect x="487" y="360.3" width="42" height="120.0" rx="8" fill="#ebebeb" stroke="#dcdcdc" stroke-width="0.8"/></g><rect x="506.95" y="361" width="2.5" height="39.69999999999999" fill="#000"/><clipPath id="kc4"><circle cx="861.8" cy="419.2" r="61.2"/></clipPath><g clip-path="url(#kc4)"><rect x="800.5999999999999" y="358.0" width="41.100000000000136" height="122.4" fill="url(#kl)"/><rect x="881" y="358.0" width="42.0" height="122.4" fill="url(#kr)"/><rect x="840.7" y="359.2" width="41.299999999999955" height="120.0" rx="8" fill="#ebebeb" stroke="#dcdcdc" stroke-width="0.8"/></g><rect x="859.95" y="360" width="2.5" height="40" fill="#000"/><circle cx="685" cy="259.5" r="38.2" fill="url(#tg)"/><polygon points="685.00,231.00 709.68,245.25 709.68,273.75 685.00,288.00 660.32,273.75 660.32,245.25" fill="url(#hexg)" stroke="#bdbec0" stroke-width="1.5" stroke-linejoin="round"/><circle cx="685" cy="259.5" r="17.4" fill="#939394"/><circle cx="685" cy="259.5" r="12.5" fill="#6a6b6e"/><path d="M684 254.3 L720.5 252.8 A7.2 7.2 0 0 1 720.5 267.2 L684 265.5 A5.6 5.6 0 0 1 684 254.3 Z" fill="url(#lev)"/><circle cx="720.3" cy="260" r="6" fill="url(#ball)"/><circle cx="860.4" cy="636.4" r="16.5" fill="url(#jackg)"/><circle cx="860.4" cy="636.4" r="9.5" fill="#000"/><circle cx="860.8" cy="758.2" r="64.2" fill="url(#fsw)"/><polygon points="906.50,758.40 883.75,797.80 838.25,797.80 815.50,758.40 838.25,719.00 883.75,719.00" fill="url(#fhex)" stroke="url(#fhex)" stroke-width="3" stroke-linejoin="round"/><circle cx="861" cy="758.5" r="32.1" fill="url(#fcir)"/><text x="781.5" y="838.5" font-family="Liberation Serif" font-size="19" fill="#f0f0f0" stroke="#f0f0f0" stroke-width="0.35" textLength="145" lengthAdjust="spacingAndGlyphs">GRIFFIN ANALOG</text><g id="griffin"><path d="M923.3 812.4 Q923 805 930 802.5 Q937 799.5 946 800 Q951 802 950 808 Q949 816 941 819 Q933 821 927 820 Q924 818 923.3 812.4 Z" fill="#efefef"/><path d="M938.9 803.6 L940.9 802.4 L943.0 801.4 L945.2 800.4 L947.4 799.5 L949.8 798.7 L952.1 797.5 L954.5 796.4 L957.0 795.4 L959.7 794.4 L962.4 793.4 L962.4 793.2 L959.5 793.4 L956.6 793.7 L953.8 794.0 L951.1 794.4 L948.4 795.0 L946.0 795.9 L943.6 797.0 L941.4 798.1 L939.2 799.2 L937.1 800.4Z" fill="#efefef"/><path d="M944.6 805.5 L946.8 804.6 L948.9 803.9 L951.1 803.4 L953.3 803.1 L955.5 802.9 L957.7 802.5 L960.0 802.2 L962.4 802.2 L964.8 802.3 L967.4 802.5 L967.4 802.3 L965.0 801.3 L962.6 800.6 L960.2 800.0 L957.7 799.6 L955.2 799.3 L952.8 799.6 L950.4 800.1 L948.0 800.7 L945.6 801.6 L943.4 802.5Z" fill="#efefef"/><path d="M934.6 803.2 L936.6 802.2 L938.6 801.4 L940.6 800.6 L942.6 799.9 L944.7 799.2 L946.7 798.4 L948.7 797.6 L950.8 796.9 L952.9 796.2 L955.0 795.6 L955.0 795.4 L952.7 795.4 L950.5 795.6 L948.3 795.8 L946.1 796.1 L943.8 796.5 L941.7 797.2 L939.6 798.0 L937.5 798.9 L935.5 799.8 L933.4 800.8Z" fill="#efefef"/><path d="M946.3 807.2 L948.6 806.7 L950.8 806.3 L952.9 806.1 L955.0 806.0 L956.9 806.1 L958.8 806.0 L960.7 806.1 L962.5 806.3 L964.2 806.6 L965.9 807.1 L966.1 806.9 L964.5 805.9 L962.8 805.1 L961.0 804.4 L959.1 803.8 L957.1 803.4 L954.9 803.4 L952.7 803.6 L950.5 803.8 L948.1 804.3 L945.7 804.8Z" fill="#efefef"/><ellipse cx="940.7" cy="809.2" rx="6.5" ry="4.8" fill="#5a5b5d"/><path d="M926 814 Q932 811.5 938 814.5 Q934 817 928 817.5 Z" fill="#5a5b5d"/><path d="M950.4 814.9 L952.5 813.8 L954.5 812.8 L956.6 812.0 L958.7 811.4 L960.9 810.9 L962.9 810.1 L965.0 809.4 L967.2 808.8 L969.5 808.4 L971.9 808.1 L971.9 807.9 L969.5 807.4 L967.1 807.1 L964.7 807.0 L962.2 807.1 L959.8 807.3 L957.6 808.2 L955.4 809.3 L953.3 810.5 L951.3 811.9 L949.4 813.4Z" fill="#efefef"/><path d="M950.3 815.7 L952.6 815.0 L954.7 814.6 L956.9 814.2 L959.1 814.1 L961.2 814.1 L963.3 813.7 L965.5 813.5 L967.7 813.4 L970.0 813.5 L972.4 813.7 L972.4 813.5 L970.2 812.5 L968.0 811.7 L965.7 811.1 L963.4 810.6 L961.0 810.3 L958.6 810.7 L956.3 811.3 L954.1 812.0 L951.8 812.9 L949.7 814.0Z" fill="#efefef"/><path d="M950.1 816.3 L952.5 816.1 L954.7 816.1 L956.9 816.2 L959.1 816.5 L961.2 816.9 L963.4 816.9 L965.6 817.1 L967.8 817.5 L970.1 818.0 L972.3 818.7 L972.5 818.5 L970.5 817.1 L968.4 815.9 L966.2 814.8 L964.0 813.9 L961.7 813.1 L959.3 813.1 L956.9 813.2 L954.5 813.5 L952.2 813.9 L949.8 814.5Z" fill="#efefef"/><path d="M949.7 817.1 L952.1 817.5 L954.5 818.1 L956.7 818.8 L958.9 819.7 L960.9 820.7 L963.2 821.4 L965.4 822.3 L967.5 823.3 L969.7 824.5 L971.8 825.9 L972.0 825.7 L970.3 823.7 L968.5 821.9 L966.6 820.2 L964.6 818.7 L962.4 817.3 L960.0 816.5 L957.5 816.0 L955.0 815.6 L952.4 815.3 L949.8 815.3Z" fill="#efefef"/><path d="M948.7 817.9 L951.0 819.3 L953.0 820.7 L954.9 822.2 L956.7 823.9 L958.3 825.7 L960.1 827.1 L961.9 828.8 L963.6 830.6 L965.3 832.6 L966.8 834.8 L967.0 834.6 L966.1 832.1 L965.1 829.7 L963.9 827.4 L962.5 825.1 L960.9 823.0 L958.9 821.3 L956.7 819.8 L954.4 818.5 L952.0 817.3 L949.5 816.3Z" fill="#efefef"/><path d="M947.4 818.4 L948.9 820.5 L950.2 822.7 L951.4 824.9 L952.3 827.1 L953.1 829.4 L954.2 831.6 L955.2 833.8 L956.1 836.2 L956.7 838.7 L957.3 841.3 L957.5 841.3 L957.7 838.6 L957.7 835.9 L957.6 833.3 L957.2 830.6 L956.6 828.0 L955.4 825.7 L954.0 823.4 L952.4 821.2 L950.7 819.2 L948.8 817.2Z" fill="#efefef"/><path d="M946.3 818.3 L947.0 820.6 L947.6 822.9 L947.9 825.2 L948.1 827.4 L948.1 829.6 L948.5 831.8 L948.7 834.1 L948.8 836.4 L948.7 838.8 L948.5 841.3 L948.7 841.3 L949.7 839.0 L950.5 836.7 L951.1 834.3 L951.6 831.9 L951.9 829.4 L951.4 827.0 L950.8 824.6 L950.1 822.2 L949.1 819.9 L948.0 817.7Z" fill="#efefef"/><path d="M945.2 817.9 L945.0 820.4 L944.6 822.9 L944.1 825.2 L943.5 827.5 L942.6 829.7 L942.2 832.0 L941.5 834.3 L940.7 836.6 L939.7 838.9 L938.5 841.2 L938.7 841.4 L940.5 839.5 L942.2 837.5 L943.7 835.4 L945.1 833.1 L946.3 830.8 L946.8 828.3 L947.1 825.7 L947.2 823.1 L947.2 820.5 L947.0 817.9Z" fill="#efefef"/><path d="M944.4 817.2 L943.5 819.5 L942.4 821.6 L941.2 823.6 L939.9 825.5 L938.5 827.3 L937.4 829.3 L936.1 831.3 L934.6 833.2 L933.0 835.0 L931.2 836.8 L931.4 837.0 L933.6 835.8 L935.8 834.4 L937.8 832.9 L939.8 831.3 L941.6 829.5 L942.8 827.3 L943.9 825.0 L944.8 822.7 L945.5 820.2 L946.1 817.7Z" fill="#efefef"/><path d="M943.9 816.4 L942.6 818.2 L941.1 819.9 L939.6 821.3 L938.0 822.7 L936.4 823.9 L935.0 825.4 L933.4 826.9 L931.7 828.2 L929.9 829.5 L927.9 830.7 L928.1 830.9 L930.3 830.4 L932.5 829.7 L934.7 828.9 L936.8 827.9 L938.8 826.8 L940.4 825.1 L941.8 823.3 L943.2 821.5 L944.4 819.5 L945.5 817.4Z" fill="#efefef"/><path d="M943.8 816.0 L942.4 817.3 L940.9 818.5 L939.5 819.5 L938.0 820.4 L936.4 821.2 L935.1 822.4 L933.6 823.5 L932.0 824.5 L930.4 825.4 L928.6 826.2 L928.6 826.4 L930.6 826.3 L932.6 826.1 L934.6 825.7 L936.5 825.2 L938.4 824.5 L939.9 823.2 L941.4 821.8 L942.7 820.4 L944.0 818.8 L945.1 817.2Z" fill="#efefef"/><path d="M943.6 815.5 L942.2 816.4 L940.8 817.2 L939.4 817.9 L938.0 818.4 L936.5 818.9 L935.2 819.7 L933.8 820.5 L932.3 821.2 L930.8 821.8 L929.1 822.3 L929.1 822.5 L930.9 822.8 L932.6 822.9 L934.4 822.8 L936.2 822.7 L938.0 822.4 L939.5 821.5 L940.9 820.5 L942.3 819.3 L943.6 818.1 L944.8 816.8Z" fill="#efefef"/></g><g id="rat"><circle cx="685.5" cy="448" r="88" fill="#f4f4f4"/><path d="M598.0 452.0 C593.5 460.8 601.0 473.3 603.0 485.0 C605.0 496.7 607.2 510.2 610.0 522.0 C612.8 533.8 615.7 546.7 620.0 556.0 C624.3 565.3 630.7 575.3 636.0 578.0 C641.3 580.7 649.0 581.7 652.0 572.0 C655.0 562.3 654.0 535.3 654.0 520.0 C654.0 504.7 651.3 492.3 652.0 480.0 C652.7 467.7 661.7 454.0 658.0 446.0 C654.3 438.0 640.0 431.0 630.0 432.0 C620.0 433.0 602.5 443.2 598.0 452.0Z" fill="#f4f4f4"/><path d="M774.0 428.0 C778.0 437.7 773.3 454.7 772.0 470.0 C770.7 485.3 768.7 505.0 766.0 520.0 C763.3 535.0 760.3 550.3 756.0 560.0 C751.7 569.7 743.7 581.3 740.0 578.0 C736.3 574.7 734.0 556.3 734.0 540.0 C734.0 523.7 739.3 496.7 740.0 480.0 C740.7 463.3 736.7 451.3 738.0 440.0 C739.3 428.7 742.0 414.0 748.0 412.0 C754.0 410.0 770.0 418.3 774.0 428.0Z" fill="#f4f4f4"/><path d="M607.6 480.0 C607.4 482.3 606.4 489.3 605.9 494.0 C605.5 498.7 604.6 503.3 604.8 508.0 C605.0 512.7 605.8 517.3 607.0 522.0 C608.1 526.7 610.3 531.3 611.6 536.0 C613.0 540.7 614.6 545.3 615.2 550.0 C615.8 554.7 615.3 561.7 615.3 564.0" stroke="#5a5b5d" stroke-width="2.5" fill="none"/><path d="M608.5 480.0 C608.6 482.3 608.3 489.3 609.0 494.0 C609.8 498.7 611.5 503.3 612.9 508.0 C614.3 512.7 616.4 517.3 617.4 522.0 C618.5 526.7 618.9 533.7 619.2 536.0" stroke="#5a5b5d" stroke-width="2.6" fill="none"/><path d="M611.7 452.0 C611.6 454.3 610.6 461.3 610.8 466.0 C611.1 470.7 612.1 475.3 613.3 480.0 C614.5 484.7 616.7 489.3 618.0 494.0 C619.4 498.7 620.8 503.3 621.3 508.0 C621.9 512.7 621.5 517.3 621.2 522.0 C620.8 526.7 619.5 533.7 619.2 536.0" stroke="#5a5b5d" stroke-width="2.7" fill="none"/><path d="M617.4 466.0 C618.1 468.3 620.8 475.3 621.7 480.0 C622.7 484.7 623.2 489.3 623.2 494.0 C623.1 498.7 622.1 503.3 621.6 508.0 C621.1 512.7 620.2 517.3 620.3 522.0 C620.4 526.7 621.1 531.3 622.2 536.0 C623.3 540.7 626.0 547.7 626.8 550.0" stroke="#5a5b5d" stroke-width="1.9" fill="none"/><path d="M622.8 452.0 C623.3 454.3 625.4 461.3 625.8 466.0 C626.2 470.7 625.7 475.3 625.3 480.0 C624.9 484.7 623.7 489.3 623.4 494.0 C623.1 498.7 623.0 503.3 623.7 508.0 C624.3 512.7 626.0 517.3 627.4 522.0 C628.7 526.7 631.2 533.7 632.0 536.0" stroke="#5a5b5d" stroke-width="2.4" fill="none"/><path d="M629.4 452.0 C629.1 454.3 628.1 461.3 627.7 466.0 C627.2 470.7 626.4 475.3 626.6 480.0 C626.7 484.7 627.6 489.3 628.8 494.0 C629.9 498.7 632.1 503.3 633.5 508.0 C634.8 512.7 636.4 517.3 637.0 522.0 C637.6 526.7 637.4 531.3 637.0 536.0 C636.7 540.7 635.5 545.3 635.1 550.0 C634.7 554.7 634.3 559.3 634.8 564.0 C635.3 568.7 637.5 575.7 638.0 578.0" stroke="#5a5b5d" stroke-width="1.6" fill="none"/><path d="M630.4 452.0 C630.5 454.3 630.2 461.3 630.9 466.0 C631.7 470.7 633.5 475.3 634.9 480.0 C636.3 484.7 638.3 489.3 639.4 494.0 C640.4 498.7 641.0 503.3 641.1 508.0 C641.1 512.7 640.1 517.3 639.6 522.0 C639.1 526.7 638.1 531.3 638.2 536.0 C638.2 540.7 638.8 545.3 639.8 550.0 C640.8 554.7 642.9 559.3 644.3 564.0 C645.7 568.7 647.6 575.7 648.2 578.0" stroke="#5a5b5d" stroke-width="1.6" fill="none"/><path d="M634.0 452.0 C634.8 454.3 637.4 461.3 638.7 466.0 C640.1 470.7 641.5 475.3 642.0 480.0 C642.5 484.7 642.1 489.3 641.8 494.0 C641.4 498.7 640.1 503.3 639.8 508.0 C639.5 512.7 639.2 517.3 639.8 522.0 C640.4 526.7 641.9 531.3 643.3 536.0 C644.7 540.7 647.2 547.7 648.0 550.0" stroke="#5a5b5d" stroke-width="2.5" fill="none"/><path d="M645.7 452.0 C645.9 454.3 647.1 461.3 647.0 466.0 C647.0 470.7 645.9 475.3 645.4 480.0 C644.9 484.7 644.0 489.3 644.1 494.0 C644.3 498.7 645.0 503.3 646.1 508.0 C647.2 512.7 649.3 517.3 650.7 522.0 C652.1 526.7 653.8 531.3 654.4 536.0 C655.1 540.7 654.7 547.7 654.8 550.0" stroke="#5a5b5d" stroke-width="1.8" fill="none"/><path d="M647.6 480.0 C648.2 482.3 649.9 489.3 651.3 494.0 C652.7 498.7 654.8 503.3 655.9 508.0 C657.0 512.7 657.8 517.3 657.9 522.0 C658.0 526.7 657.1 531.3 656.6 536.0 C656.1 540.7 655.3 547.7 655.0 550.0" stroke="#5a5b5d" stroke-width="1.7" fill="none"/><path d="M649.9 452.0 C650.2 454.3 651.0 461.3 652.2 466.0 C653.3 470.7 655.5 475.3 656.8 480.0 C658.2 484.7 659.7 489.3 660.3 494.0 C660.9 498.7 660.6 503.3 660.3 508.0 C660.0 512.7 658.7 517.3 658.4 522.0 C658.0 526.7 657.6 531.3 658.1 536.0 C658.6 540.7 660.1 545.3 661.4 550.0 C662.7 554.7 664.9 559.3 666.1 564.0 C667.3 568.7 668.2 575.7 668.7 578.0" stroke="#5a5b5d" stroke-width="1.8" fill="none"/><path d="M744.7 432.0 C744.5 434.8 744.2 443.3 743.2 449.0 C742.3 454.7 740.5 460.3 739.1 466.0 C737.6 471.7 735.7 477.3 734.5 483.0 C733.3 488.7 732.5 494.3 732.2 500.0 C731.8 505.7 732.3 511.3 732.6 517.0 C732.9 522.7 733.7 531.2 733.9 534.0" stroke="#5a5b5d" stroke-width="1.4" fill="none"/><path d="M740.2 466.0 C740.0 468.8 738.9 477.3 738.8 483.0 C738.7 488.7 739.5 494.3 739.8 500.0 C740.1 505.7 740.6 514.2 740.8 517.0" stroke="#5a5b5d" stroke-width="1.8" fill="none"/><path d="M750.5 432.0 C749.9 434.8 747.7 443.3 747.0 449.0 C746.4 454.7 746.4 460.3 746.5 466.0 C746.6 471.7 747.5 477.3 747.8 483.0 C748.1 488.7 748.6 494.3 748.2 500.0 C747.9 505.7 746.9 511.3 745.8 517.0 C744.6 522.7 742.6 528.3 741.2 534.0 C739.7 539.7 737.7 548.2 737.1 551.0" stroke="#5a5b5d" stroke-width="1.5" fill="none"/><path d="M754.2 466.0 C754.1 468.8 754.4 477.3 753.8 483.0 C753.2 488.7 751.9 494.3 750.5 500.0 C749.2 505.7 747.1 511.3 745.7 517.0 C744.4 522.7 743.0 528.3 742.3 534.0 C741.7 539.7 741.9 548.2 741.8 551.0" stroke="#5a5b5d" stroke-width="1.3" fill="none"/><path d="M760.4 432.0 C760.6 434.8 761.5 443.3 761.5 449.0 C761.5 454.7 761.1 460.3 760.3 466.0 C759.4 471.7 757.7 477.3 756.3 483.0 C754.8 488.7 752.8 494.3 751.6 500.0 C750.4 505.7 749.4 514.2 749.0 517.0" stroke="#5a5b5d" stroke-width="1.4" fill="none"/><path d="M762.5 466.0 C761.8 468.8 759.3 477.3 758.3 483.0 C757.3 488.7 756.7 494.3 756.6 500.0 C756.4 505.7 757.1 511.3 757.5 517.0 C757.8 522.7 758.6 528.3 758.6 534.0 C758.5 539.7 757.5 548.2 757.3 551.0" stroke="#5a5b5d" stroke-width="2.2" fill="none"/><path d="M766.1 449.0 C765.5 451.8 763.1 460.3 762.4 466.0 C761.7 471.7 761.5 477.3 761.6 483.0 C761.7 488.7 762.6 494.3 762.9 500.0 C763.2 505.7 763.7 511.3 763.5 517.0 C763.2 522.7 762.4 528.3 761.3 534.0 C760.1 539.7 757.5 548.2 756.7 551.0" stroke="#5a5b5d" stroke-width="1.5" fill="none"/><path d="M770.3 449.0 C770.3 451.8 770.1 460.3 770.3 466.0 C770.6 471.7 771.5 477.3 771.7 483.0 C771.9 488.7 772.1 494.3 771.6 500.0 C771.0 505.7 769.0 514.2 768.5 517.0" stroke="#5a5b5d" stroke-width="2.0" fill="none"/><path d="M660.0 432.0 C663.3 427.3 669.3 424.7 676.0 424.0 C682.7 423.3 693.3 429.7 700.0 428.0 C706.7 426.3 710.7 414.7 716.0 414.0 C721.3 413.3 728.0 417.2 732.0 424.0 C736.0 430.8 738.0 442.3 740.0 455.0 C742.0 467.7 744.0 484.2 744.0 500.0 C744.0 515.8 741.7 535.0 740.0 550.0 C738.3 565.0 738.7 581.0 734.0 590.0 C729.3 599.0 719.7 601.3 712.0 604.0 C704.3 606.7 696.0 607.0 688.0 606.0 C680.0 605.0 670.0 604.8 664.0 598.0 C658.0 591.2 654.7 578.8 652.0 565.0 C649.3 551.2 648.3 529.2 648.0 515.0 C647.7 500.8 648.7 490.5 650.0 480.0 C651.3 469.5 654.3 460.0 656.0 452.0 C657.7 444.0 656.7 436.7 660.0 432.0Z" fill="#5a5b5d"/><path d="M638.3 474.0 L637.3 482.4 L637.7 490.9 L638.1 499.3 L637.2 507.6 L636.6 516.1 L636.6 528.9 L636.8 537.7 L637.2 545.1 L638.0 551.7 L638.3 551.7 L638.2 545.1 L638.4 537.7 L638.9 529.0 L639.5 516.2 L640.1 507.8 L640.4 499.3 L639.3 490.8 L638.2 482.4 L638.6 474.0Z" fill="#f4f4f4"/><path d="M640.0 564.1 L641.5 570.2 L643.4 576.1 L646.2 581.5 L649.3 586.1 L649.5 585.9 L647.0 581.1 L644.7 575.6 L642.3 569.9 L640.3 564.0Z" fill="#f4f4f4"/><path d="M656.9 591.5 L660.1 593.8 L663.4 595.7 L666.8 597.7 L670.4 600.0 L674.5 602.1 L679.2 604.2 L684.5 605.6 L692.3 606.1 L692.3 605.8 L684.6 605.0 L679.5 603.3 L675.1 601.0 L671.2 598.6 L667.4 596.6 L663.8 594.9 L660.4 593.2 L657.1 591.2Z" fill="#f4f4f4"/><path d="M700.3 604.4 L706.0 603.4 L711.1 601.7 L715.6 599.7 L719.6 597.8 L722.8 595.4 L725.6 593.0 L728.2 590.4 L730.4 587.3 L730.2 587.1 L727.3 589.5 L724.3 591.2 L721.1 592.7 L717.5 594.2 L714.0 596.9 L710.0 599.7 L705.6 602.2 L700.3 604.2Z" fill="#f4f4f4"/><path d="M732.2 584.1 L735.0 579.8 L737.8 574.6 L740.5 568.8 L742.6 562.8 L744.1 556.5 L745.2 550.1 L746.0 543.4 L745.7 543.3 L744.0 549.8 L741.9 555.9 L739.6 561.8 L737.5 567.7 L735.7 573.7 L733.8 579.2 L731.9 584.0Z" fill="#f4f4f4"/><path d="M745.5 535.6 L746.1 526.9 L746.3 514.1 L746.4 505.1 L744.9 496.1 L743.4 487.3 L743.0 478.7 L743.7 469.9 L743.7 460.9 L741.8 452.0 L739.5 443.2 L739.2 443.2 L740.9 452.2 L742.1 461.0 L741.5 469.7 L740.2 478.6 L740.0 487.7 L742.1 496.7 L744.2 505.4 L744.8 514.1 L745.2 526.9 L745.2 535.6Z" fill="#f4f4f4"/><path d="M640.3 448.8 L638.6 458.4 L635.9 468.0 L634.1 477.9 L634.1 487.8 L634.9 497.4 L634.9 506.9 L634.7 516.6 L634.9 530.0 L635.2 539.2 L635.7 547.0 L636.4 553.8 L636.7 553.8 L636.8 547.0 L637.2 539.2 L637.8 530.1 L638.4 516.7 L639.4 507.1 L639.4 497.2 L637.8 487.5 L636.9 478.0 L637.8 468.4 L639.7 458.6 L640.6 448.9Z" fill="#f4f4f4"/><path d="M636.3 565.1 L637.6 570.8 L639.4 576.6 L641.6 582.4 L644.3 587.8 L647.4 592.7 L651.1 596.5 L655.2 598.9 L659.2 600.4 L663.2 601.4 L667.3 602.4 L671.7 603.6 L671.8 603.3 L667.7 601.3 L663.8 599.6 L660.3 597.9 L657.0 595.9 L653.9 593.2 L650.7 590.0 L647.3 585.9 L644.0 581.1 L641.1 575.8 L638.6 570.4 L636.6 565.0Z" fill="#f4f4f4"/><path d="M678.2 604.5 L683.7 606.6 L692.0 608.2 L700.6 608.9 L706.8 608.4 L712.4 606.9 L717.2 604.2 L721.2 601.0 L724.7 597.8 L727.7 595.0 L730.3 592.2 L732.6 589.3 L732.4 589.1 L729.6 591.5 L726.5 593.6 L723.1 595.9 L719.3 598.4 L715.2 600.8 L710.8 603.2 L706.1 605.3 L700.5 606.4 L692.2 606.4 L683.9 605.6 L678.3 604.2Z" fill="#f4f4f4"/><path d="M737.1 583.8 L740.0 579.1 L742.9 573.6 L745.1 567.3 L746.5 560.5 L747.7 553.6 L747.4 553.5 L745.0 560.1 L742.3 566.4 L740.1 572.6 L738.5 578.5 L736.9 583.7Z" fill="#f4f4f4"/><path d="M751.0 528.8 L751.4 515.6 L751.4 505.1 L750.2 494.5 L748.2 484.0 L747.0 473.9 L747.7 463.6 L748.2 453.0 L746.7 442.6 L746.4 442.6 L747.1 453.0 L745.7 463.4 L744.2 473.9 L744.6 484.6 L747.4 495.0 L749.4 505.3 L750.3 515.6 L750.7 528.8Z" fill="#f4f4f4"/><path d="M632.3 465.0 L632.9 473.8 L632.9 482.5 L631.4 491.1 L629.1 499.9 L627.6 508.7 L627.1 517.6 L627.8 531.6 L628.9 541.1 L630.3 549.1 L632.1 556.0 L634.0 562.1 L634.3 562.1 L632.9 555.9 L631.6 548.9 L630.6 540.9 L630.0 531.5 L629.9 517.6 L630.4 509.0 L631.3 500.3 L633.1 491.5 L634.2 482.6 L633.7 473.7 L632.6 465.0Z" fill="#f4f4f4"/><path d="M639.7 572.4 L641.3 578.1 L643.1 583.8 L645.1 589.2 L647.4 594.1 L650.3 598.0 L653.9 600.6 L657.8 602.2 L662.0 603.3 L666.6 604.2 L666.7 603.9 L662.3 602.4 L658.4 600.8 L655.2 598.7 L652.4 596.0 L649.8 592.5 L647.1 588.2 L644.6 583.2 L642.2 577.8 L639.9 572.3Z" fill="#f4f4f4"/><path d="M682.1 609.0 L691.0 610.9 L699.9 612.0 L706.2 612.0 L711.5 609.6 L716.0 606.4 L720.1 603.0 L719.9 602.7 L715.2 605.1 L710.3 606.9 L705.4 607.9 L699.9 609.1 L691.2 609.3 L682.1 608.7Z" fill="#f4f4f4"/><path d="M723.2 601.8 L727.4 599.4 L731.4 597.1 L735.3 594.7 L738.9 591.6 L742.2 587.6 L744.3 582.3 L745.9 576.3 L747.0 569.8 L747.7 563.0 L748.1 556.1 L747.8 556.0 L746.7 562.9 L745.2 569.4 L743.4 575.6 L741.2 581.1 L738.6 585.5 L736.3 589.4 L733.6 592.7 L730.4 595.6 L726.8 598.5 L723.0 601.6Z" fill="#f4f4f4"/><path d="M750.8 529.9 L751.1 516.2 L750.6 504.8 L751.0 493.4 L752.1 481.9 L751.7 470.4 L749.7 458.9 L747.7 447.5 L747.3 436.1 L747.0 436.1 L747.1 447.6 L748.9 459.1 L750.6 470.5 L750.7 481.9 L749.9 493.3 L749.8 504.8 L750.6 516.2 L750.5 529.9Z" fill="#f4f4f4"/><path d="M631.1 450.3 L628.6 458.9 L627.3 467.8 L627.4 476.7 L628.5 485.3 L628.4 494.0 L626.9 502.8 L627.2 502.9 L629.7 494.2 L630.9 485.3 L630.8 476.4 L629.7 467.8 L629.9 459.1 L631.4 450.3Z" fill="#f4f4f4"/><path d="M626.0 518.2 L625.7 532.5 L626.0 542.4 L627.1 550.9 L629.0 558.3 L631.2 564.7 L631.5 564.6 L630.1 558.1 L629.0 550.6 L627.9 542.2 L626.9 532.5 L626.3 518.2Z" fill="#f4f4f4"/><path d="M635.8 576.5 L637.5 581.7 L639.4 587.0 L641.9 592.1 L645.1 596.8 L648.6 600.9 L648.9 600.7 L646.5 596.0 L644.3 590.8 L641.8 585.8 L638.9 581.1 L636.0 576.4Z" fill="#f4f4f4"/><path d="M658.7 608.8 L663.2 610.0 L668.3 610.9 L674.0 611.9 L680.6 613.1 L690.3 614.5 L700.0 615.7 L706.5 615.7 L712.1 614.6 L717.1 612.4 L721.6 609.3 L725.7 605.6 L729.6 601.8 L729.4 601.5 L725.1 604.9 L720.7 608.0 L716.2 610.4 L711.5 611.8 L706.4 612.2 L700.3 611.6 L690.7 611.0 L680.9 610.3 L674.3 609.7 L668.5 609.3 L663.3 609.0 L658.7 608.5Z" fill="#f4f4f4"/><path d="M740.9 590.4 L744.1 586.8 L747.0 582.6 L749.3 577.4 L751.2 571.4 L752.5 564.5 L753.2 557.2 L753.5 549.5 L753.6 541.2 L753.6 531.9 L753.3 531.9 L753.0 541.2 L752.6 549.4 L752.0 557.1 L751.0 564.3 L749.7 571.0 L748.2 577.0 L746.2 582.2 L743.6 586.5 L740.7 590.2Z" fill="#f4f4f4"/><path d="M752.2 497.2 L753.8 485.7 L755.0 474.1 L753.6 462.5 L750.7 451.1 L748.9 439.7 L748.6 439.8 L748.8 451.4 L750.1 463.0 L751.5 474.3 L751.9 485.6 L751.9 497.2Z" fill="#f4f4f4"/><path d="M627.9 469.7 L625.3 479.7 L623.7 489.9 L623.8 500.1 L624.8 510.1 L624.5 520.2 L625.2 534.9 L626.0 544.8 L626.3 544.7 L626.0 534.8 L625.8 520.2 L626.6 510.1 L625.6 500.0 L625.0 489.9 L626.1 479.9 L628.2 469.8Z" fill="#f4f4f4"/><path d="M628.7 568.0 L629.6 574.2 L630.7 579.6 L632.4 584.4 L634.6 589.0 L637.7 593.3 L641.3 597.6 L645.3 601.9 L649.7 605.9 L649.9 605.7 L645.9 601.3 L642.4 596.7 L639.3 592.2 L636.7 587.8 L634.1 583.6 L632.0 579.2 L630.4 574.0 L629.0 567.9Z" fill="#f4f4f4"/><path d="M657.1 611.2 L662.1 612.8 L667.4 613.6 L673.2 613.8 L679.8 613.9 L689.9 613.8 L700.2 613.9 L707.2 614.1 L713.3 613.8 L713.3 613.5 L707.2 613.3 L700.2 612.8 L689.9 612.2 L679.8 611.9 L673.1 612.3 L667.4 612.5 L662.2 612.1 L657.2 610.9Z" fill="#f4f4f4"/><path d="M718.4 614.6 L723.6 612.8 L728.2 610.0 L732.4 606.3 L736.1 602.1 L739.4 597.9 L742.0 593.7 L744.2 589.6 L746.2 585.4 L748.1 580.6 L749.8 575.1 L749.5 575.0 L747.6 580.4 L745.5 585.0 L743.3 589.1 L740.9 593.1 L738.1 597.1 L735.1 601.3 L731.7 605.5 L727.8 609.3 L723.3 612.3 L718.3 614.3Z" fill="#f4f4f4"/><path d="M755.8 562.0 L758.0 554.1 L759.9 545.5 L761.6 535.6 L762.8 520.9 L761.1 510.7 L760.7 500.6 L758.2 490.4 L755.3 480.4 L755.0 480.5 L756.8 490.7 L758.0 500.8 L757.3 510.9 L757.8 521.0 L757.8 535.4 L757.3 545.1 L756.5 553.9 L755.5 562.0Z" fill="#f4f4f4"/><path d="M626.2 471.7 L624.0 480.0 L622.2 488.4 L621.6 496.9 L621.8 505.3 L621.5 513.5 L620.5 521.9 L620.8 537.6 L621.3 547.9 L622.0 556.5 L622.9 564.0 L624.2 570.5 L626.0 576.3 L626.2 576.2 L625.1 570.3 L624.5 563.8 L624.1 556.4 L624.1 547.8 L624.2 537.5 L624.5 522.0 L624.9 513.6 L624.6 505.2 L623.7 496.8 L623.7 488.6 L624.9 480.2 L626.5 471.8Z" fill="#f4f4f4"/><path d="M631.0 591.8 L633.6 597.6 L636.7 603.1 L640.3 607.9 L645.2 610.7 L650.2 612.2 L655.1 612.9 L655.2 612.6 L650.8 610.5 L646.9 607.8 L643.5 604.3 L639.2 601.0 L635.1 596.6 L631.2 591.6Z" fill="#f4f4f4"/><path d="M661.3 615.6 L666.4 617.7 L672.2 620.2 L679.5 620.5 L690.8 620.7 L690.8 620.4 L679.9 617.9 L673.2 615.3 L666.9 615.2 L661.3 615.3Z" fill="#f4f4f4"/><path d="M709.5 620.9 L715.9 619.7 L721.7 617.5 L726.9 614.6 L731.5 611.4 L735.7 608.4 L739.2 605.2 L742.4 602.1 L745.3 598.7 L747.9 594.7 L750.3 589.9 L750.1 589.7 L747.4 594.4 L744.5 598.1 L741.4 601.1 L738.1 603.9 L734.4 606.7 L730.5 610.1 L726.1 613.4 L721.2 616.6 L715.7 619.1 L709.5 620.6Z" fill="#f4f4f4"/><path d="M755.7 576.9 L758.1 570.0 L760.3 562.7 L761.5 554.8 L762.3 546.4 L762.0 546.4 L760.6 554.7 L758.8 562.3 L757.2 569.7 L755.4 576.8Z" fill="#f4f4f4"/><path d="M763.0 538.1 L763.7 522.7 L763.4 513.1 L762.6 503.4 L761.0 493.7 L759.8 484.4 L759.6 474.9 L759.7 465.3 L758.5 455.7 L756.1 446.1 L755.8 446.2 L757.4 455.8 L757.7 465.3 L756.8 474.8 L756.1 484.6 L757.3 494.3 L759.8 503.8 L761.4 513.3 L762.5 522.8 L762.7 538.1Z" fill="#f4f4f4"/><path d="M621.8 440.3 L622.8 450.9 L623.9 461.3 L622.8 471.7 L619.7 482.1 L617.1 492.7 L617.1 503.4 L618.8 513.9 L618.7 524.3 L619.8 540.1 L620.1 540.1 L619.4 524.3 L620.1 513.8 L618.8 503.3 L619.2 493.0 L621.8 482.6 L624.5 472.0 L625.1 461.3 L623.5 450.8 L622.1 440.3Z" fill="#f4f4f4"/><path d="M620.7 547.7 L620.9 556.7 L621.1 565.0 L622.1 572.6 L623.8 579.4 L625.8 585.2 L626.1 585.2 L625.4 579.1 L625.1 572.2 L624.2 564.6 L622.6 556.5 L621.0 547.7Z" fill="#f4f4f4"/><path d="M627.7 590.1 L629.6 594.5 L632.1 598.7 L635.2 602.8 L639.0 607.0 L643.3 611.4 L648.6 615.0 L654.3 618.1 L660.3 620.2 L666.5 621.1 L673.0 621.0 L673.0 620.7 L666.6 620.0 L660.9 618.3 L655.7 615.6 L650.7 612.0 L646.2 607.9 L641.5 604.3 L637.3 600.8 L633.6 597.4 L630.6 593.9 L628.0 589.9Z" fill="#f4f4f4"/><path d="M678.2 622.0 L689.7 621.8 L701.3 621.6 L709.0 621.7 L715.7 621.9 L722.0 621.0 L727.8 619.4 L732.9 616.8 L737.4 613.3 L737.2 613.0 L732.4 615.8 L727.2 617.3 L721.6 617.9 L715.5 617.9 L708.9 618.6 L701.2 619.5 L689.6 620.6 L678.2 621.7Z" fill="#f4f4f4"/><path d="M743.3 608.9 L746.9 604.4 L749.9 599.5 L752.5 594.8 L754.6 590.0 L756.4 585.1 L757.9 579.7 L759.4 573.6 L760.8 566.5 L762.3 558.5 L762.0 558.4 L760.3 566.4 L758.5 573.4 L756.8 579.4 L755.0 584.6 L753.3 589.5 L751.4 594.3 L749.2 599.1 L746.4 604.0 L743.1 608.8Z" fill="#f4f4f4"/><path d="M764.9 539.4 L766.1 523.4 L764.8 512.1 L766.2 500.7 L764.5 489.3 L761.1 478.0 L759.0 466.7 L758.7 466.7 L760.4 478.1 L763.4 489.5 L764.7 500.7 L763.6 512.1 L765.4 523.4 L764.6 539.4Z" fill="#f4f4f4"/><path d="M620.6 449.7 L620.7 460.3 L619.5 470.8 L616.9 481.4 L615.0 492.1 L615.0 502.8 L616.1 513.4 L615.8 524.1 L616.1 524.1 L617.0 513.4 L616.6 502.8 L617.3 492.3 L619.2 481.8 L621.1 471.1 L621.7 460.3 L620.9 449.7Z" fill="#f4f4f4"/><path d="M614.1 539.4 L614.2 549.9 L614.4 559.2 L616.1 567.5 L617.8 575.1 L618.1 575.0 L617.6 567.3 L617.3 558.9 L615.8 549.8 L614.4 539.4Z" fill="#f4f4f4"/><path d="M623.0 587.6 L624.6 592.7 L626.8 597.3 L629.9 601.4 L633.8 605.0 L638.2 608.8 L638.4 608.6 L634.7 604.2 L631.5 600.1 L628.5 596.2 L625.7 592.2 L623.2 587.4Z" fill="#f4f4f4"/><path d="M640.6 615.6 L645.3 619.8 L650.4 623.6 L656.3 625.9 L662.7 626.6 L669.5 626.3 L669.5 626.0 L662.8 625.3 L657.0 623.7 L651.5 621.5 L646.0 618.8 L640.8 615.3Z" fill="#f4f4f4"/><path d="M690.4 625.3 L702.9 625.3 L710.9 625.7 L717.9 626.0 L724.3 625.6 L730.2 623.8 L735.4 621.0 L739.9 617.2 L739.7 616.9 L734.7 619.8 L729.5 621.4 L723.9 622.1 L717.7 622.5 L710.9 623.2 L702.8 624.0 L690.4 625.0Z" fill="#f4f4f4"/><path d="M749.3 606.8 L752.9 602.3 L756.1 597.7 L758.9 593.2 L761.6 588.4 L763.0 582.7 L764.3 576.3 L765.5 568.9 L766.5 560.6 L766.2 560.5 L764.2 568.7 L762.1 575.7 L759.8 581.7 L757.5 586.8 L755.9 591.8 L754.0 596.6 L751.8 601.6 L749.0 606.6Z" fill="#f4f4f4"/><path d="M766.6 550.3 L768.1 539.6 L769.2 523.0 L768.3 511.5 L768.4 500.1 L766.6 488.6 L763.7 477.2 L763.5 477.3 L765.5 488.8 L766.4 500.2 L765.6 511.6 L767.3 523.0 L767.0 539.5 L766.3 550.2Z" fill="#f4f4f4"/><path d="M762.9 455.0 L765.5 443.5 L762.7 432.0 L762.4 432.1 L761.4 443.5 L762.6 454.9Z" fill="#f4f4f4"/><path d="M613.6 472.3 L611.5 482.7 L611.9 493.2 L613.2 503.6 L613.4 513.9 L612.7 524.3 L612.7 541.9 L613.0 541.9 L613.7 524.4 L614.9 514.0 L615.4 503.5 L613.5 493.0 L612.4 482.7 L613.9 472.3Z" fill="#f4f4f4"/><path d="M611.7 563.6 L611.5 571.3 L611.8 578.3 L613.9 584.6 L616.6 590.7 L616.9 590.6 L615.2 584.2 L614.3 577.8 L612.9 571.2 L612.0 563.6Z" fill="#f4f4f4"/><path d="M622.3 602.5 L626.1 608.1 L630.4 612.9 L635.0 616.7 L639.9 619.1 L645.0 620.8 L650.2 622.2 L650.3 621.9 L645.2 620.2 L640.4 618.1 L635.8 615.4 L631.1 612.0 L626.7 607.6 L622.5 602.3Z" fill="#f4f4f4"/><path d="M657.4 623.5 L663.1 625.9 L669.7 628.5 L677.9 631.0 L691.5 632.2 L705.4 631.7 L714.2 630.0 L721.4 627.4 L721.4 627.1 L713.9 628.5 L705.3 628.8 L691.7 627.9 L678.5 626.8 L670.4 625.7 L663.6 624.4 L657.5 623.2Z" fill="#f4f4f4"/><path d="M731.8 621.3 L736.7 618.6 L741.0 616.1 L744.8 613.7 L748.4 610.9 L751.5 607.2 L754.5 602.7 L757.5 597.2 L760.4 590.9 L760.1 590.7 L757.0 596.9 L753.9 602.3 L750.7 606.6 L747.5 610.0 L744.2 612.8 L740.6 615.4 L736.4 618.1 L731.6 621.0Z" fill="#f4f4f4"/><path d="M765.6 584.9 L768.6 577.8 L771.2 570.5 L773.4 562.7 L774.7 553.9 L775.2 543.3 L774.9 526.0 L774.1 515.4 L773.8 515.5 L774.2 526.0 L774.1 543.3 L773.2 553.7 L771.9 562.4 L770.1 570.2 L767.9 577.6 L765.3 584.8Z" fill="#f4f4f4"/><path d="M765.9 492.6 L765.3 482.1 L767.3 471.7 L768.5 461.0 L766.2 450.4 L762.3 440.0 L762.1 440.1 L765.2 450.7 L766.6 461.1 L765.5 471.5 L764.3 482.1 L765.6 492.6Z" fill="#f4f4f4"/><path d="M615.2 454.8 L612.3 465.0 L608.7 475.2 L608.2 486.0 L609.7 496.5 L610.0 496.4 L610.5 486.1 L612.8 476.0 L614.5 465.4 L615.5 454.8Z" fill="#f4f4f4"/><path d="M611.9 505.1 L610.9 515.5 L609.4 525.9 L609.6 544.1 L609.9 555.2 L610.2 555.2 L610.7 544.1 L611.5 526.0 L612.0 515.6 L612.2 505.1Z" fill="#f4f4f4"/><path d="M609.6 563.8 L609.9 571.6 L610.7 578.7 L612.1 585.5 L614.2 592.2 L617.2 598.6 L621.1 604.5 L625.4 609.7 L630.0 614.0 L634.8 617.1 L635.0 616.8 L630.7 613.2 L626.7 608.6 L623.2 603.2 L620.1 597.1 L617.2 590.9 L614.5 584.7 L612.5 578.3 L610.9 571.5 L609.9 563.8Z" fill="#f4f4f4"/><path d="M638.5 620.4 L643.4 622.6 L648.6 624.7 L654.4 626.2 L660.7 628.0 L660.8 627.7 L654.7 625.3 L649.1 623.1 L643.8 621.7 L638.6 620.1Z" fill="#f4f4f4"/><path d="M668.6 631.7 L677.2 633.9 L691.5 635.2 L706.2 635.5 L715.4 634.6 L723.0 632.1 L729.5 629.0 L735.1 626.0 L740.1 623.1 L739.9 622.8 L734.7 625.0 L728.8 627.3 L722.2 629.6 L714.7 631.3 L706.0 632.9 L691.6 633.4 L677.3 632.8 L668.7 631.4Z" fill="#f4f4f4"/><path d="M745.0 619.0 L749.1 616.7 L753.0 613.9 L756.6 610.2 L760.1 605.5 L763.1 599.7 L766.1 593.3 L768.8 586.4 L771.3 579.2 L771.0 579.1 L768.3 586.2 L765.3 592.9 L762.2 599.2 L758.9 604.8 L755.7 609.5 L752.4 613.3 L748.8 616.2 L744.8 618.8Z" fill="#f4f4f4"/><path d="M773.7 564.6 L775.3 555.7 L776.3 544.9 L776.8 526.8 L776.1 516.3 L773.4 506.1 L770.2 496.0 L769.0 485.8 L768.7 485.8 L769.0 496.2 L771.2 506.6 L773.0 516.8 L773.6 526.9 L774.1 544.9 L774.1 555.6 L773.4 564.5Z" fill="#f4f4f4"/><path d="M770.5 475.0 L772.4 464.7 L770.5 454.2 L766.2 444.3 L765.9 444.3 L767.3 454.9 L769.1 464.9 L770.2 475.0Z" fill="#f4f4f4"/><path d="M610.1 450.0 L610.5 459.7 L611.0 469.4 L610.6 478.9 L608.2 488.7 L608.5 488.8 L611.8 479.2 L613.2 469.4 L611.7 459.6 L610.4 450.0Z" fill="#f4f4f4"/><path d="M603.4 508.8 L603.9 518.5 L602.6 528.2 L602.8 546.5 L604.4 557.7 L606.1 567.2 L607.9 575.9 L608.2 575.8 L607.8 567.0 L607.4 557.4 L607.1 546.3 L605.6 528.1 L605.5 518.4 L603.7 508.8Z" fill="#f4f4f4"/><path d="M611.7 596.0 L612.8 601.8 L614.6 607.0 L618.8 610.5 L623.5 613.6 L623.7 613.4 L620.7 608.8 L618.5 604.3 L615.1 600.6 L612.0 595.9Z" fill="#f4f4f4"/><path d="M629.5 617.8 L634.3 622.2 L639.6 626.6 L645.6 630.5 L652.3 633.1 L659.6 634.0 L667.4 633.9 L676.3 633.0 L676.3 632.7 L667.3 632.6 L659.8 631.8 L653.2 630.0 L647.0 627.6 L640.9 624.7 L635.1 621.2 L629.7 617.5Z" fill="#f4f4f4"/><path d="M690.3 633.7 L705.2 633.5 L714.4 633.5 L722.3 633.2 L729.5 632.2 L735.9 630.6 L735.9 630.3 L729.3 631.0 L722.2 631.0 L714.3 631.3 L705.1 632.2 L690.3 633.4Z" fill="#f4f4f4"/><path d="M747.4 624.9 L752.2 620.9 L756.5 616.2 L759.9 611.1 L762.6 606.0 L764.8 600.9 L764.6 600.7 L761.9 605.6 L758.9 610.5 L755.5 615.5 L751.7 620.3 L747.2 624.6Z" fill="#f4f4f4"/><path d="M767.4 595.9 L769.7 590.4 L771.9 584.1 L774.1 576.7 L776.1 568.2 L778.1 558.4 L779.8 546.8 L780.4 528.1 L778.4 516.8 L779.0 505.6 L777.1 494.2 L773.5 483.0 L771.2 471.8 L770.9 471.8 L772.5 483.2 L775.3 494.5 L776.4 505.6 L775.1 516.9 L776.4 528.2 L775.0 546.4 L774.1 557.9 L772.9 567.6 L771.6 576.2 L770.2 583.6 L768.7 590.1 L767.1 595.8Z" fill="#f4f4f4"/><path d="M773.4 459.2 L776.1 447.9 L773.8 436.6 L773.5 436.7 L772.9 447.9 L773.1 459.2Z" fill="#f4f4f4"/><path d="M605.6 466.2 L603.1 476.9 L602.7 487.7 L603.4 498.4 L603.5 508.9 L601.8 519.6 L600.9 530.4 L600.6 549.6 L600.9 549.6 L601.7 530.4 L603.2 519.8 L605.4 509.1 L605.3 498.3 L604.0 487.6 L603.9 477.0 L605.9 466.3Z" fill="#f4f4f4"/><path d="M601.9 576.4 L603.4 584.3 L605.6 591.8 L608.3 599.0 L611.6 605.4 L615.4 611.0 L619.7 615.4 L624.2 618.8 L628.9 621.7 L633.8 624.3 L638.9 627.1 L644.4 630.0 L644.6 629.7 L639.2 626.5 L634.3 623.5 L629.6 620.5 L625.2 617.5 L621.0 613.9 L617.0 609.7 L613.1 604.5 L609.5 598.4 L606.5 591.5 L604.0 584.1 L602.2 576.3Z" fill="#f4f4f4"/><path d="M658.2 636.1 L665.9 638.6 L675.5 640.0 L691.8 639.5 L708.2 637.5 L717.8 635.1 L717.7 634.8 L708.0 635.8 L691.7 636.4 L675.5 636.8 L666.1 636.9 L658.2 635.8Z" fill="#f4f4f4"/><path d="M732.2 633.4 L738.2 632.3 L743.7 631.1 L748.8 629.4 L753.7 626.6 L758.3 622.8 L762.8 617.9 L766.5 612.0 L770.0 605.8 L773.2 599.4 L776.0 593.0 L778.4 586.3 L780.1 579.2 L779.9 579.1 L777.5 586.0 L774.6 592.3 L771.2 598.3 L767.5 604.3 L763.5 610.0 L759.4 615.4 L755.7 620.3 L751.9 624.3 L747.8 627.4 L743.2 629.6 L738.0 631.4 L732.1 633.1Z" fill="#f4f4f4"/><path d="M783.0 547.6 L783.2 528.0 L783.6 516.0 L781.1 504.0 L778.6 492.6 L778.5 480.9 L778.9 469.1 L778.6 469.1 L776.9 480.8 L775.7 492.8 L776.9 504.9 L780.6 516.5 L781.6 528.1 L782.7 547.6Z" fill="#f4f4f4"/><path d="M605.1 450.7 L601.7 460.6 L600.0 470.7 L600.6 480.7 L601.7 490.6 L600.7 500.4 L597.6 510.2 L594.8 520.4 L593.8 530.5 L594.1 550.4 L595.1 562.5 L596.8 572.6 L599.0 581.3 L599.3 581.2 L597.4 572.5 L596.0 562.4 L595.4 550.4 L595.5 530.6 L596.7 520.8 L599.9 510.9 L602.7 500.8 L603.3 490.6 L602.0 480.6 L601.0 470.7 L602.3 460.8 L605.4 450.8Z" fill="#f4f4f4"/><path d="M604.3 594.3 L607.0 600.3 L609.7 605.9 L612.6 611.4 L615.6 617.0 L619.7 622.0 L624.1 626.6 L629.0 630.3 L634.2 632.9 L634.4 632.7 L629.8 629.2 L625.9 624.9 L622.5 619.9 L619.4 614.5 L615.6 609.5 L611.8 604.6 L608.2 599.6 L604.6 594.1Z" fill="#f4f4f4"/><path d="M649.1 635.7 L656.5 636.5 L665.0 637.2 L675.2 638.1 L692.3 639.3 L709.2 639.8 L718.9 640.0 L726.9 639.2 L733.8 637.3 L733.7 637.0 L726.8 638.4 L718.9 638.7 L709.3 638.0 L692.5 637.0 L675.3 636.3 L665.1 635.9 L656.5 635.7 L649.1 635.4Z" fill="#f4f4f4"/><path d="M745.3 633.6 L751.2 630.0 L756.8 626.3 L762.2 622.8 L767.3 619.3 L771.7 615.2 L775.3 610.2 L778.1 604.3 L780.2 597.6 L781.4 590.0 L781.1 590.0 L779.1 597.3 L776.4 603.6 L773.1 608.7 L769.3 612.8 L765.1 616.7 L760.6 620.7 L755.7 624.8 L750.5 629.1 L745.1 633.3Z" fill="#f4f4f4"/><path d="M781.1 582.2 L782.2 573.2 L782.9 563.3 L782.7 551.8 L781.9 532.2 L780.8 521.3 L780.5 521.4 L780.5 532.2 L780.2 551.8 L780.3 563.3 L780.8 573.2 L780.8 582.1Z" fill="#f4f4f4"/><path d="M782.5 498.3 L784.0 487.4 L782.8 476.2 L779.2 465.3 L776.7 454.8 L777.0 444.0 L776.7 443.9 L775.1 454.9 L776.4 466.0 L779.9 476.9 L782.4 487.4 L782.2 498.3Z" fill="#f4f4f4"/><path d="M598.7 466.1 L600.0 475.5 L600.7 484.8 L598.8 494.0 L595.4 503.4 L593.0 512.8 L593.3 512.9 L596.1 503.6 L600.0 494.3 L601.9 484.8 L600.8 475.4 L599.0 466.1Z" fill="#f4f4f4"/><path d="M594.9 521.9 L593.8 531.3 L594.5 552.0 L595.7 563.8 L597.1 573.5 L598.5 582.1 L600.9 590.0 L603.3 597.5 L605.7 604.6 L608.3 611.0 L611.3 616.4 L611.5 616.3 L609.4 610.6 L607.7 604.0 L606.1 596.8 L604.6 589.1 L603.2 581.1 L600.8 572.7 L598.6 563.3 L596.6 551.8 L595.0 531.3 L595.2 521.9Z" fill="#f4f4f4"/><path d="M616.4 625.4 L620.6 628.5 L625.7 631.4 L631.5 634.3 L638.0 637.4 L645.2 640.6 L653.3 643.2 L662.3 644.9 L672.7 645.7 L690.2 645.2 L707.5 643.8 L707.5 643.5 L690.2 644.6 L672.8 644.7 L662.5 643.7 L653.7 641.6 L645.9 638.8 L638.6 636.0 L632.0 633.2 L626.1 630.6 L620.9 628.0 L616.5 625.2Z" fill="#f4f4f4"/><path d="M733.8 637.0 L741.1 635.6 L747.8 634.2 L754.1 632.3 L759.8 629.5 L764.8 625.6 L768.9 620.6 L772.3 614.8 L774.9 608.6 L776.9 602.2 L776.6 602.1 L774.4 608.4 L771.6 614.5 L768.1 620.0 L764.0 624.8 L759.1 628.5 L753.7 631.3 L747.6 633.4 L740.9 635.1 L733.8 636.8Z" fill="#f4f4f4"/><path d="M780.4 589.2 L782.0 582.0 L783.5 573.8 L785.1 564.1 L786.2 551.9 L786.8 530.9 L784.6 520.4 L786.1 510.0 L785.8 509.9 L783.6 520.4 L785.0 530.9 L783.6 551.7 L782.5 563.8 L781.7 573.6 L780.9 581.8 L780.1 589.2Z" fill="#f4f4f4"/><path d="M788.5 500.1 L786.0 489.5 L782.6 478.9 L781.4 468.7 L782.6 458.3 L783.4 447.7 L783.1 447.7 L781.6 458.1 L779.6 468.7 L780.8 479.4 L785.0 489.8 L788.2 500.2Z" fill="#f4f4f4"/><path d="M598.6 466.1 L595.8 475.4 L592.6 484.7 L591.2 494.4 L592.0 504.0 L593.1 513.5 L593.4 513.4 L594.1 504.0 L594.9 494.7 L596.3 485.4 L597.8 475.8 L598.9 466.2Z" fill="#f4f4f4"/><path d="M592.9 534.7 L592.3 556.3 L592.1 568.5 L592.3 578.3 L593.6 586.7 L595.5 594.2 L597.9 601.1 L598.2 601.1 L596.4 593.9 L595.3 586.4 L594.6 578.1 L593.8 568.4 L593.3 556.3 L593.2 534.7Z" fill="#f4f4f4"/><path d="M604.2 612.5 L607.2 619.2 L611.0 625.4 L615.9 630.1 L621.7 632.9 L627.6 634.7 L627.7 634.4 L622.7 631.1 L618.4 627.0 L613.9 622.8 L609.0 618.0 L604.4 612.3Z" fill="#f4f4f4"/><path d="M632.1 637.7 L638.2 639.9 L644.9 642.3 L652.4 644.9 L661.1 647.1 L671.9 648.5 L690.7 649.1 L709.6 648.5 L709.6 648.2 L690.7 648.1 L672.0 646.9 L661.6 644.8 L653.0 642.7 L645.4 640.8 L638.5 639.0 L632.2 637.5Z" fill="#f4f4f4"/><path d="M720.8 648.4 L730.1 647.2 L738.3 645.6 L744.8 641.9 L750.5 638.4 L750.4 638.1 L743.9 639.6 L736.7 641.2 L729.4 644.9 L720.8 648.1Z" fill="#f4f4f4"/><path d="M759.7 632.1 L764.7 629.7 L769.6 626.2 L772.9 620.5 L775.8 614.1 L775.5 613.9 L771.2 619.4 L766.8 623.7 L763.4 628.1 L759.5 631.8Z" fill="#f4f4f4"/><path d="M781.5 607.8 L784.8 600.8 L787.8 593.4 L790.4 585.7 L792.4 577.2 L793.4 567.4 L793.7 555.3 L793.4 533.8 L792.3 522.2 L792.0 522.2 L792.5 533.9 L792.3 555.3 L791.4 567.2 L789.9 576.8 L788.4 585.2 L786.5 593.0 L784.0 600.5 L781.2 607.7Z" fill="#f4f4f4"/><path d="M786.6 497.2 L786.0 485.6 L786.6 474.0 L786.4 462.3 L784.3 450.6 L781.5 439.0 L781.2 439.1 L783.4 450.8 L785.0 462.4 L785.2 473.9 L785.1 485.6 L786.3 497.2Z" fill="#f4f4f4"/><path d="M592.2 479.3 L593.1 490.3 L591.4 501.1 L587.6 512.0 L584.4 523.1 L583.5 534.3 L584.1 556.4 L585.5 569.2 L585.8 569.1 L585.0 556.4 L585.0 534.3 L586.5 523.5 L589.6 512.6 L592.9 501.5 L594.0 490.3 L592.5 479.3Z" fill="#f4f4f4"/><path d="M587.7 580.0 L589.8 589.0 L592.3 596.8 L595.7 603.3 L599.3 609.1 L599.6 609.0 L596.6 602.9 L593.8 596.1 L590.7 588.7 L588.0 579.9Z" fill="#f4f4f4"/><path d="M601.9 615.0 L605.1 620.8 L608.4 626.6 L612.0 632.2 L616.0 637.3 L620.8 641.5 L626.5 644.3 L633.0 645.8 L640.3 646.6 L648.6 647.0 L658.1 647.6 L669.6 648.3 L669.6 648.0 L658.2 646.7 L648.7 645.6 L640.5 644.6 L633.5 643.3 L627.6 641.4 L622.5 638.8 L617.8 635.4 L613.6 630.9 L609.6 625.8 L605.9 620.4 L602.2 614.9Z" fill="#f4f4f4"/><path d="M720.0 650.2 L728.9 650.3 L737.1 649.2 L743.9 645.2 L750.1 640.7 L749.9 640.5 L742.9 643.1 L735.7 645.1 L728.5 648.0 L720.0 649.9Z" fill="#f4f4f4"/><path d="M768.5 629.7 L774.2 626.7 L779.5 623.2 L782.9 617.5 L785.3 611.2 L785.1 611.0 L781.2 616.4 L776.7 620.5 L772.9 625.1 L768.3 629.5Z" fill="#f4f4f4"/><path d="M791.7 597.4 L793.2 588.9 L794.3 579.6 L793.8 569.4 L793.2 557.2 L792.9 557.2 L792.3 569.4 L791.6 579.5 L791.8 588.7 L791.4 597.3Z" fill="#f4f4f4"/><path d="M790.7 534.5 L790.4 521.8 L790.0 509.2 L792.1 496.6 L793.3 483.6 L790.2 470.7 L785.8 458.1 L783.7 445.7 L784.6 433.0 L784.3 433.0 L782.5 445.7 L783.7 458.6 L787.2 471.4 L789.3 483.9 L789.1 496.3 L787.9 509.1 L789.2 521.9 L790.4 534.5Z" fill="#f4f4f4"/><path d="M595.8 456.2 L595.4 466.0 L592.6 475.6 L588.9 485.4 L586.4 495.5 L586.3 505.7 L587.7 515.4 L587.5 525.1 L586.7 535.1 L586.9 558.2 L587.3 570.9 L587.6 570.9 L588.1 558.2 L588.9 535.2 L590.6 525.4 L591.7 515.4 L591.2 505.4 L590.4 495.8 L591.8 486.2 L594.7 476.2 L596.6 466.1 L596.1 456.2Z" fill="#f4f4f4"/><path d="M587.0 589.3 L587.8 597.0 L589.3 604.3 L591.6 611.5 L595.6 618.0 L600.2 624.1 L605.3 629.5 L605.6 629.3 L601.3 623.3 L597.7 616.7 L594.8 610.0 L591.6 603.5 L589.1 596.7 L587.3 589.3Z" fill="#f4f4f4"/><path d="M609.5 636.0 L614.9 640.2 L620.6 643.4 L626.8 645.8 L633.3 648.0 L640.6 649.3 L648.6 650.8 L657.8 652.5 L669.2 653.8 L669.3 653.5 L658.0 651.3 L649.1 648.8 L641.3 646.4 L634.3 644.2 L627.7 642.9 L621.4 641.4 L615.5 639.1 L609.7 635.8Z" fill="#f4f4f4"/><path d="M723.1 652.3 L733.1 651.1 L741.7 649.2 L749.1 646.3 L755.0 642.6 L760.2 639.1 L760.1 638.8 L754.1 640.7 L747.5 642.6 L740.4 645.5 L732.5 649.1 L723.1 652.0Z" fill="#f4f4f4"/><path d="M775.9 630.0 L780.1 625.4 L784.2 619.7 L788.1 613.1 L791.9 605.8 L795.4 598.1 L798.1 589.8 L799.9 580.8 L801.0 570.6 L801.4 558.1 L801.0 535.3 L799.7 524.1 L799.4 524.1 L800.0 535.3 L799.6 558.0 L798.5 570.4 L796.7 580.2 L794.3 588.7 L791.6 596.7 L788.9 604.5 L785.9 611.9 L782.7 618.8 L779.3 624.8 L775.6 629.8Z" fill="#f4f4f4"/><path d="M791.5 503.1 L790.5 492.0 L791.7 480.9 L792.2 469.6 L789.9 458.5 L786.2 447.3 L785.9 447.4 L789.3 458.6 L791.2 469.7 L790.6 480.8 L789.8 492.0 L791.2 503.1Z" fill="#f4f4f4"/><path d="M590.4 467.7 L586.6 477.7 L584.9 487.9 L586.3 498.1 L587.5 508.2 L587.8 508.2 L587.5 498.0 L587.0 488.0 L587.8 478.0 L590.7 467.8Z" fill="#f4f4f4"/><path d="M585.7 516.4 L582.0 526.5 L580.1 536.6 L579.2 559.7 L579.0 572.6 L579.9 583.4 L581.9 593.1 L584.7 601.8 L588.2 609.6 L592.1 616.2 L592.4 616.1 L589.1 609.2 L586.3 601.3 L584.3 592.6 L583.0 583.0 L582.1 572.4 L581.6 559.8 L581.8 536.7 L582.9 526.7 L586.0 516.5Z" fill="#f4f4f4"/><path d="M600.5 627.9 L604.7 632.6 L609.0 637.0 L613.6 641.5 L619.2 645.2 L625.3 648.8 L631.9 651.9 L632.1 651.6 L626.1 647.5 L620.8 643.1 L616.0 638.5 L610.7 635.0 L605.7 631.4 L600.7 627.7Z" fill="#f4f4f4"/><path d="M648.4 655.0 L658.1 656.2 L670.3 656.5 L692.3 655.7 L714.2 654.2 L726.1 652.9 L726.1 652.6 L714.2 652.4 L692.2 652.5 L670.2 653.3 L658.1 654.4 L648.4 654.7Z" fill="#f4f4f4"/><path d="M732.9 653.2 L740.9 652.8 L748.1 651.8 L754.6 649.8 L760.8 646.7 L766.6 642.6 L772.0 637.6 L777.0 632.1 L781.8 626.6 L786.2 621.1 L790.1 615.5 L793.3 609.4 L793.0 609.2 L789.6 615.1 L785.5 620.6 L780.9 625.9 L776.0 631.2 L770.8 636.4 L765.4 641.3 L760.0 645.5 L754.2 648.8 L747.9 650.9 L740.9 652.2 L732.8 652.9Z" fill="#f4f4f4"/><path d="M798.9 593.8 L800.3 584.5 L801.0 573.5 L801.1 560.2 L800.1 536.9 L799.4 524.3 L795.8 511.7 L795.5 511.8 L798.5 524.4 L798.5 536.9 L798.9 560.3 L799.4 573.5 L799.3 584.4 L798.6 593.8Z" fill="#f4f4f4"/><path d="M797.9 487.5 L798.8 474.8 L796.8 461.9 L792.4 449.6 L790.3 437.2 L790.0 437.3 L790.5 450.0 L793.4 462.8 L796.9 475.0 L797.6 487.5Z" fill="#f4f4f4"/><path d="M588.4 469.5 L586.8 479.2 L583.9 488.6 L582.4 498.7 L581.7 508.8 L582.0 508.8 L584.8 499.2 L588.3 489.6 L589.2 479.5 L588.7 469.5Z" fill="#f4f4f4"/><path d="M578.8 528.6 L576.7 538.4 L576.2 562.4 L577.9 575.8 L579.8 586.8 L580.1 586.8 L580.1 575.6 L580.4 562.3 L579.0 538.4 L579.1 528.6Z" fill="#f4f4f4"/><path d="M583.7 595.7 L585.2 604.1 L587.1 611.3 L589.5 617.6 L592.4 623.1 L596.0 628.2 L600.3 633.2 L605.3 638.2 L610.9 643.0 L617.1 647.5 L623.8 651.2 L631.2 653.8 L639.1 655.3 L639.1 655.0 L631.3 653.3 L624.1 650.6 L617.5 646.8 L611.5 642.3 L606.0 637.3 L601.2 632.3 L596.9 627.5 L593.2 622.5 L590.2 617.2 L587.7 611.2 L585.6 604.0 L584.0 595.6Z" fill="#f4f4f4"/><path d="M656.9 658.3 L669.1 658.6 L691.4 659.1 L714.0 659.8 L726.4 660.4 L736.8 660.0 L745.8 658.7 L753.7 656.3 L760.8 652.8 L760.6 652.6 L753.5 655.5 L745.5 657.3 L736.7 658.0 L726.5 657.9 L714.0 657.8 L691.5 657.7 L669.1 657.8 L656.9 658.0Z" fill="#f4f4f4"/><path d="M767.4 646.9 L773.3 642.7 L778.6 638.4 L783.3 634.2 L787.5 629.9 L791.4 625.1 L794.3 619.3 L796.8 612.6 L798.9 604.8 L800.8 595.9 L802.4 586.0 L802.1 586.0 L799.7 595.7 L797.0 604.2 L794.0 611.5 L790.9 617.6 L787.5 622.7 L784.6 627.5 L781.1 632.2 L777.1 637.0 L772.5 641.8 L767.2 646.7Z" fill="#f4f4f4"/><path d="M804.0 562.9 L804.8 539.1 L803.6 526.9 L803.3 514.7 L801.3 502.4 L798.8 490.3 L797.3 478.3 L797.2 466.1 L796.6 453.9 L794.4 441.8 L794.1 441.8 L795.7 454.0 L795.7 466.2 L795.3 478.4 L796.1 490.7 L798.7 502.9 L801.2 514.9 L802.1 527.1 L804.0 539.2 L803.7 562.9Z" fill="#f4f4f4"/><path d="M581.7 482.5 L579.9 494.1 L576.6 505.7 L573.4 517.5 L572.9 529.4 L572.4 541.2 L573.7 566.4 L574.0 566.4 L573.7 541.2 L575.2 529.6 L576.6 518.0 L578.8 506.3 L581.2 494.4 L582.0 482.5Z" fill="#f4f4f4"/><path d="M575.7 578.6 L577.2 589.1 L579.0 598.1 L581.1 606.4 L583.8 614.1 L586.8 621.5 L590.0 628.4 L590.3 628.3 L587.5 621.2 L585.1 613.7 L582.8 605.9 L580.3 597.8 L578.0 588.9 L576.0 578.5Z" fill="#f4f4f4"/><path d="M593.7 633.7 L597.3 639.2 L601.5 643.7 L606.5 647.3 L612.2 650.2 L618.7 652.9 L626.3 655.0 L634.6 657.4 L644.0 659.7 L654.7 661.6 L667.7 662.8 L667.7 662.5 L654.9 660.7 L644.4 658.1 L635.3 655.2 L627.1 652.3 L619.9 649.6 L613.3 647.6 L607.5 645.3 L602.5 642.5 L598.0 638.6 L594.0 633.6Z" fill="#f4f4f4"/><path d="M713.6 663.5 L726.2 662.0 L736.5 659.8 L745.6 657.6 L753.8 655.5 L761.4 653.6 L768.5 651.5 L774.8 648.8 L780.5 645.1 L785.5 640.4 L789.7 634.7 L793.1 628.2 L795.9 621.2 L795.6 621.1 L792.6 628.0 L789.0 634.3 L784.6 639.7 L779.7 644.0 L774.1 647.3 L767.8 649.7 L761.0 651.9 L753.5 654.1 L745.3 656.5 L736.3 659.0 L726.1 661.4 L713.6 663.2Z" fill="#f4f4f4"/><path d="M799.6 606.4 L801.8 598.5 L803.6 589.6 L804.7 579.0 L804.9 565.6 L804.9 540.4 L804.6 540.4 L803.3 565.6 L801.8 578.8 L800.7 589.3 L800.2 598.2 L799.3 606.3Z" fill="#f4f4f4"/><path d="M805.3 518.9 L805.7 508.0 L803.9 497.0 L800.9 486.0 L798.8 475.3 L798.8 464.4 L799.0 453.6 L798.7 453.5 L798.1 464.4 L797.7 475.4 L799.5 486.4 L802.8 497.2 L805.0 508.0 L805.0 518.9Z" fill="#f4f4f4"/><line x1="648" y1="414" x2="612" y2="370" stroke="#5a5b5d" stroke-width="0.7" stroke-linecap="round"/><path d="M648 421 Q633.0 403.5 618 394" stroke="#5a5b5d" stroke-width="0.75" fill="none"/><path d="M648 421 Q627.0 406.0 606 401" stroke="#5a5b5d" stroke-width="0.75" fill="none"/><path d="M648 421 Q624.0 410.5 600 412" stroke="#5a5b5d" stroke-width="0.75" fill="none"/><path d="M648 421 Q623.0 415.5 598 424" stroke="#5a5b5d" stroke-width="0.75" fill="none"/><path d="M648 421 Q623.0 421.5 598 436" stroke="#5a5b5d" stroke-width="0.75" fill="none"/><path d="M648 421 Q624.0 427.0 600 447" stroke="#5a5b5d" stroke-width="0.75" fill="none"/><path d="M648 421 Q626.0 433.0 604 457" stroke="#5a5b5d" stroke-width="0.75" fill="none"/><path d="M648 421 Q629.0 438.5 610 466" stroke="#5a5b5d" stroke-width="0.75" fill="none"/><path d="M648 421 Q633.0 443.5 618 474" stroke="#5a5b5d" stroke-width="0.75" fill="none"/><path d="M648 421 Q637.0 447.5 626 480" stroke="#5a5b5d" stroke-width="0.75" fill="none"/><path d="M648 421 Q641.0 451.5 634 486" stroke="#5a5b5d" stroke-width="0.75" fill="none"/><path d="M658 393 Q659 378 667 368.5 Q673 376 671 390 Z" fill="#f4f4f4" stroke="#5a5b5d" stroke-width="1.4"/><path d="M662 389 Q664 378 667 373 M668 388 Q669 380 668 374" stroke="#5a5b5d" stroke-width="0.8" fill="none"/><path d="M693 394 Q703 374 724 368.5 Q738 370 737 392 Q735 412 720 416 Q703 416 697 404 Z" fill="#f4f4f4" stroke="#5a5b5d" stroke-width="1.3"/><path d="M700 397 Q710 380 726 375 Q734 380 733 396 Q730 410 717 412 Q706 410 700 397 Z" fill="#5a5b5d"/><path d="M712 404 Q716 392 724 384 M719 408 Q724 398 728 388" stroke="#f4f4f4" stroke-width="1.3" fill="none"/><path d="M668 388 Q680 381 697 383" stroke="#5a5b5d" stroke-width="1.4" fill="none"/><path d="M658 393 Q651 405 647 414 Q645 421 651 428" stroke="#5a5b5d" stroke-width="1.3" fill="none"/><line x1="658.2" y1="408.9" x2="664.3" y2="409.4" stroke="#5a5b5d" stroke-width="0.6" stroke-linecap="round"/><line x1="658.3" y1="388.2" x2="662.5" y2="385.6" stroke="#5a5b5d" stroke-width="1.0" stroke-linecap="round"/><line x1="699.8" y1="402.2" x2="704.3" y2="400.9" stroke="#5a5b5d" stroke-width="0.6" stroke-linecap="round"/><line x1="676.1" y1="416.1" x2="682.8" y2="415.7" stroke="#5a5b5d" stroke-width="1.0" stroke-linecap="round"/><line x1="680.6" y1="415.9" x2="689.3" y2="414.7" stroke="#5a5b5d" stroke-width="0.6" stroke-linecap="round"/><line x1="663.5" y1="393.9" x2="670.6" y2="391.3" stroke="#5a5b5d" stroke-width="1.0" stroke-linecap="round"/><line x1="704.4" y1="403.4" x2="710.5" y2="401.5" stroke="#5a5b5d" stroke-width="1.0" stroke-linecap="round"/><line x1="677.7" y1="412.3" x2="681.9" y2="412.8" stroke="#5a5b5d" stroke-width="0.6" stroke-linecap="round"/><line x1="674.1" y1="406.3" x2="682.7" y2="404.6" stroke="#5a5b5d" stroke-width="1.0" stroke-linecap="round"/><line x1="681.5" y1="390.5" x2="685.7" y2="391.2" stroke="#5a5b5d" stroke-width="0.8" stroke-linecap="round"/><line x1="670.3" y1="403.7" x2="678.3" y2="403.2" stroke="#5a5b5d" stroke-width="0.8" stroke-linecap="round"/><line x1="669.2" y1="409.8" x2="674.5" y2="408.7" stroke="#5a5b5d" stroke-width="1.0" stroke-linecap="round"/><line x1="685.2" y1="390.3" x2="690.3" y2="390.1" stroke="#5a5b5d" stroke-width="1.0" stroke-linecap="round"/><line x1="693.5" y1="400.2" x2="698.6" y2="398.2" stroke="#5a5b5d" stroke-width="1.0" stroke-linecap="round"/><line x1="659.5" y1="400.3" x2="666.6" y2="400.7" stroke="#5a5b5d" stroke-width="0.6" stroke-linecap="round"/><line x1="695.1" y1="401.4" x2="700.6" y2="402.0" stroke="#5a5b5d" stroke-width="1.0" stroke-linecap="round"/><line x1="672.8" y1="387.7" x2="680.4" y2="385.2" stroke="#5a5b5d" stroke-width="0.6" stroke-linecap="round"/><line x1="671.8" y1="404.9" x2="679.0" y2="403.9" stroke="#5a5b5d" stroke-width="1.0" stroke-linecap="round"/><line x1="701.0" y1="395.0" x2="706.6" y2="395.5" stroke="#5a5b5d" stroke-width="0.6" stroke-linecap="round"/><line x1="681.2" y1="395.4" x2="687.0" y2="395.5" stroke="#5a5b5d" stroke-width="0.8" stroke-linecap="round"/><line x1="687.8" y1="410.2" x2="695.4" y2="407.2" stroke="#5a5b5d" stroke-width="0.6" stroke-linecap="round"/><line x1="670.6" y1="413.3" x2="677.9" y2="412.0" stroke="#5a5b5d" stroke-width="1.0" stroke-linecap="round"/><line x1="688.8" y1="396.9" x2="696.4" y2="395.9" stroke="#5a5b5d" stroke-width="1.0" stroke-linecap="round"/><line x1="689.5" y1="411.3" x2="693.5" y2="410.6" stroke="#5a5b5d" stroke-width="1.0" stroke-linecap="round"/><line x1="655.1" y1="411.3" x2="662.9" y2="411.7" stroke="#5a5b5d" stroke-width="0.6" stroke-linecap="round"/><line x1="666.4" y1="386.1" x2="675.2" y2="386.0" stroke="#5a5b5d" stroke-width="0.6" stroke-linecap="round"/><ellipse cx="684.4" cy="399" rx="6.8" ry="6.4" fill="#5a5b5d"/><circle cx="684.6" cy="399" r="4.5" fill="#ee1c25"/><ellipse cx="657.8" cy="397.8" rx="4" ry="4.6" fill="#5a5b5d"/><ellipse cx="658" cy="397.8" rx="2.8" ry="3.4" fill="#ee1c25"/><path d="M645 417 L652 414 L651 423 Z" fill="#5a5b5d"/><path d="M652 421 Q658 420 664 424" stroke="#5a5b5d" stroke-width="1" fill="none"/><path d="M651 430 Q662 427 675 424 Q683 440 682 458 Q679 471 668 472 Q660 463 656 449 Q653 438 651 430 Z" fill="#5a5b5d"/><path d="M659 431 L661.5 443 L664 430 Z M665 430 L668 441 L670 429 Z" fill="#f4f4f4"/><path d="M663 467 Q669 460 675 455 M665 470 Q671 466 678 462 M660 460 Q666 456 672 450" stroke="#f4f4f4" stroke-width="0.9" fill="none"/><path d="M651 431 Q654 446 660 459 Q666 470 672 473 Q679 472 683 462" stroke="#f4f4f4" stroke-width="2.2" fill="none"/><path d="M656 436 Q660 450 666 462 Q671 467 676 466" stroke="#f4f4f4" stroke-width="0.9" fill="none"/><line x1="676" y1="423" x2="742" y2="442" stroke="#f4f4f4" stroke-width="1.0" stroke-linecap="round"/><line x1="676" y1="423" x2="740" y2="452" stroke="#f4f4f4" stroke-width="1.0" stroke-linecap="round"/><line x1="676" y1="423" x2="736" y2="462" stroke="#f4f4f4" stroke-width="1.0" stroke-linecap="round"/><line x1="676" y1="423" x2="730" y2="472" stroke="#f4f4f4" stroke-width="1.0" stroke-linecap="round"/><line x1="676" y1="423" x2="722" y2="480" stroke="#f4f4f4" stroke-width="1.0" stroke-linecap="round"/><line x1="676" y1="423" x2="712" y2="486" stroke="#f4f4f4" stroke-width="1.0" stroke-linecap="round"/><line x1="676" y1="423" x2="702" y2="488" stroke="#f4f4f4" stroke-width="1.0" stroke-linecap="round"/><line x1="676" y1="423" x2="745" y2="432" stroke="#f4f4f4" stroke-width="1.0" stroke-linecap="round"/><line x1="676" y1="423" x2="738" y2="436" stroke="#f4f4f4" stroke-width="1.0" stroke-linecap="round"/><line x1="728.8" y1="463.8" x2="733.0" y2="472.8" stroke="#f4f4f4" stroke-width="0.9" stroke-linecap="round"/><line x1="713.9" y1="444.2" x2="720.2" y2="449.5" stroke="#f4f4f4" stroke-width="0.9" stroke-linecap="round"/><line x1="696.6" y1="428.4" x2="702.9" y2="435.9" stroke="#f4f4f4" stroke-width="0.9" stroke-linecap="round"/><line x1="718.2" y1="449.2" x2="723.4" y2="455.0" stroke="#f4f4f4" stroke-width="0.9" stroke-linecap="round"/><line x1="717.8" y1="443.7" x2="723.8" y2="452.2" stroke="#f4f4f4" stroke-width="0.9" stroke-linecap="round"/><line x1="704.4" y1="456.8" x2="707.8" y2="462.4" stroke="#f4f4f4" stroke-width="0.9" stroke-linecap="round"/><line x1="722.7" y1="434.2" x2="726.0" y2="438.3" stroke="#f4f4f4" stroke-width="0.9" stroke-linecap="round"/><line x1="719.2" y1="432.5" x2="724.5" y2="439.1" stroke="#f4f4f4" stroke-width="0.9" stroke-linecap="round"/><line x1="720.9" y1="448.0" x2="726.5" y2="452.2" stroke="#f4f4f4" stroke-width="0.9" stroke-linecap="round"/><line x1="720.6" y1="460.2" x2="726.7" y2="469.2" stroke="#f4f4f4" stroke-width="0.9" stroke-linecap="round"/><line x1="712.2" y1="458.1" x2="719.5" y2="465.8" stroke="#f4f4f4" stroke-width="0.9" stroke-linecap="round"/><line x1="684.9" y1="465.1" x2="692.9" y2="470.4" stroke="#f4f4f4" stroke-width="0.9" stroke-linecap="round"/><line x1="687.0" y1="442.3" x2="690.5" y2="448.5" stroke="#f4f4f4" stroke-width="0.9" stroke-linecap="round"/><line x1="688.1" y1="437.2" x2="691.1" y2="443.8" stroke="#f4f4f4" stroke-width="0.9" stroke-linecap="round"/><path d="M641.0 486.0 C642.3 481.3 647.7 479.7 650.0 482.0 C652.3 484.3 653.3 492.8 655.0 500.0 C656.7 507.2 658.2 517.0 660.0 525.0 C661.8 533.0 664.0 542.2 666.0 548.0 C668.0 553.8 672.3 557.0 672.0 560.0 C671.7 563.0 666.7 566.7 664.0 566.0 C661.3 565.3 658.7 561.3 656.0 556.0 C653.3 550.7 650.3 541.7 648.0 534.0 C645.7 526.3 643.2 518.0 642.0 510.0 C640.8 502.0 639.7 490.7 641.0 486.0Z" fill="#f4f4f4"/><line x1="644.8" y1="492" x2="653.8" y2="498" stroke="#5a5b5d" stroke-width="0.9" stroke-linecap="round"/><line x1="647.2" y1="500" x2="656.2" y2="506" stroke="#5a5b5d" stroke-width="0.9" stroke-linecap="round"/><line x1="649.6" y1="508" x2="658.6" y2="514" stroke="#5a5b5d" stroke-width="0.9" stroke-linecap="round"/><line x1="652.0" y1="516" x2="661.0" y2="522" stroke="#5a5b5d" stroke-width="0.9" stroke-linecap="round"/><line x1="654.4" y1="524" x2="663.4" y2="530" stroke="#5a5b5d" stroke-width="0.9" stroke-linecap="round"/><line x1="656.8" y1="532" x2="665.8" y2="538" stroke="#5a5b5d" stroke-width="0.9" stroke-linecap="round"/><line x1="659.2" y1="540" x2="668.2" y2="546" stroke="#5a5b5d" stroke-width="0.9" stroke-linecap="round"/><line x1="661.6" y1="548" x2="670.6" y2="554" stroke="#5a5b5d" stroke-width="0.9" stroke-linecap="round"/><path d="M656 556 Q666 552 676 562 Q672 570 662 570 Z" fill="#f4f4f4"/><path d="M658 566 Q660 578 658 590 M662 568 Q666 580 666 592 M667 568 Q673 578 675 588 M671 566 Q679 572 684 580" stroke="#f4f4f4" stroke-width="1.7" stroke-linecap="round" fill="none"/><path d="M738.0 470.0 C740.3 470.3 743.3 474.7 744.0 480.0 C744.7 485.3 743.7 494.7 742.0 502.0 C740.3 509.3 737.3 517.3 734.0 524.0 C730.7 530.7 726.3 536.7 722.0 542.0 C717.7 547.3 711.7 553.0 708.0 556.0 C704.3 559.0 702.0 560.7 700.0 560.0 C698.0 559.3 695.0 555.7 696.0 552.0 C697.0 548.3 702.3 543.3 706.0 538.0 C709.7 532.7 714.3 526.7 718.0 520.0 C721.7 513.3 726.0 505.0 728.0 498.0 C730.0 491.0 728.3 482.7 730.0 478.0 C731.7 473.3 735.7 469.7 738.0 470.0Z" fill="#f4f4f4"/><line x1="734.0" y1="482" x2="724.0" y2="487" stroke="#5a5b5d" stroke-width="0.9" stroke-linecap="round"/><line x1="730.0" y1="490" x2="720.0" y2="495" stroke="#5a5b5d" stroke-width="0.9" stroke-linecap="round"/><line x1="726.0" y1="498" x2="716.0" y2="503" stroke="#5a5b5d" stroke-width="0.9" stroke-linecap="round"/><line x1="722.0" y1="506" x2="712.0" y2="511" stroke="#5a5b5d" stroke-width="0.9" stroke-linecap="round"/><line x1="718.0" y1="514" x2="708.0" y2="519" stroke="#5a5b5d" stroke-width="0.9" stroke-linecap="round"/><line x1="714.0" y1="522" x2="704.0" y2="527" stroke="#5a5b5d" stroke-width="0.9" stroke-linecap="round"/><line x1="710.0" y1="530" x2="700.0" y2="535" stroke="#5a5b5d" stroke-width="0.9" stroke-linecap="round"/><line x1="706.0" y1="538" x2="696.0" y2="543" stroke="#5a5b5d" stroke-width="0.9" stroke-linecap="round"/><line x1="702.0" y1="546" x2="692.0" y2="551" stroke="#5a5b5d" stroke-width="0.9" stroke-linecap="round"/><path d="M692 552 Q702 548 708 556 Q702 566 690 564 Z" fill="#f4f4f4"/><path d="M692 560 Q684 568 678 578 M695 563 Q688 573 684 585 M699 564 Q695 575 692 588 M703 562 Q702 574 700 586" stroke="#f4f4f4" stroke-width="1.7" stroke-linecap="round" fill="none"/><line x1="667.6" y1="502.4" x2="669.1" y2="517.1" stroke="#f4f4f4" stroke-width="1.0" stroke-linecap="round"/><line x1="670.3" y1="508.7" x2="671.8" y2="529.4" stroke="#f4f4f4" stroke-width="1.0" stroke-linecap="round"/><line x1="674.4" y1="488.1" x2="675.9" y2="502.9" stroke="#f4f4f4" stroke-width="1.0" stroke-linecap="round"/><line x1="676.9" y1="493.4" x2="678.4" y2="503.8" stroke="#f4f4f4" stroke-width="1.0" stroke-linecap="round"/><line x1="679.9" y1="503.5" x2="681.4" y2="521.8" stroke="#f4f4f4" stroke-width="1.0" stroke-linecap="round"/><line x1="683.7" y1="501.1" x2="685.2" y2="520.3" stroke="#f4f4f4" stroke-width="1.0" stroke-linecap="round"/><line x1="686.7" y1="507.7" x2="688.2" y2="527.2" stroke="#f4f4f4" stroke-width="1.0" stroke-linecap="round"/><line x1="688.8" y1="500.5" x2="690.3" y2="518.4" stroke="#f4f4f4" stroke-width="1.0" stroke-linecap="round"/><line x1="692.8" y1="502.0" x2="694.3" y2="517.3" stroke="#f4f4f4" stroke-width="1.0" stroke-linecap="round"/><line x1="694.4" y1="491.2" x2="695.9" y2="504.2" stroke="#f4f4f4" stroke-width="1.0" stroke-linecap="round"/><line x1="698.4" y1="503.5" x2="699.9" y2="515.8" stroke="#f4f4f4" stroke-width="1.0" stroke-linecap="round"/><line x1="701.1" y1="505.5" x2="702.6" y2="519.9" stroke="#f4f4f4" stroke-width="1.0" stroke-linecap="round"/><line x1="703.2" y1="499.0" x2="704.7" y2="513.3" stroke="#f4f4f4" stroke-width="1.0" stroke-linecap="round"/><line x1="706.3" y1="490.1" x2="707.8" y2="500.1" stroke="#f4f4f4" stroke-width="1.0" stroke-linecap="round"/><line x1="722.0" y1="473.0" x2="716.0" y2="498.0" stroke="#f4f4f4" stroke-width="1.0" stroke-linecap="round"/><line x1="724.5" y1="478.5" x2="718.5" y2="503.5" stroke="#f4f4f4" stroke-width="1.0" stroke-linecap="round"/><line x1="727.0" y1="472.1" x2="721.0" y2="497.1" stroke="#f4f4f4" stroke-width="1.0" stroke-linecap="round"/><line x1="729.5" y1="470.1" x2="723.5" y2="495.1" stroke="#f4f4f4" stroke-width="1.0" stroke-linecap="round"/><line x1="732.0" y1="481.0" x2="726.0" y2="506.0" stroke="#f4f4f4" stroke-width="1.0" stroke-linecap="round"/><line x1="734.5" y1="489.2" x2="728.5" y2="514.2" stroke="#f4f4f4" stroke-width="1.0" stroke-linecap="round"/><line x1="737.0" y1="486.7" x2="731.0" y2="511.7" stroke="#f4f4f4" stroke-width="1.0" stroke-linecap="round"/><line x1="739.5" y1="476.5" x2="733.5" y2="501.5" stroke="#f4f4f4" stroke-width="1.0" stroke-linecap="round"/><ellipse cx="690" cy="544" rx="1.2" ry="2.5" fill="#f4f4f4"/><ellipse cx="694" cy="532" rx="1.2" ry="2.5" fill="#f4f4f4"/><ellipse cx="640" cy="540" rx="1.2" ry="2.5" fill="#f4f4f4"/><ellipse cx="632" cy="566" rx="1.2" ry="2.5" fill="#f4f4f4"/><path d="M598.6 347.0 C597.2 350.1 591.3 359.5 590.5 365.5 C589.7 371.5 593.8 378.9 594.0 382.8 C594.2 386.7 594.1 384.6 591.6 388.6 C589.1 392.6 581.5 401.6 578.9 407.0 C576.3 412.4 575.6 416.3 576.0 421.0 C576.4 425.7 579.4 430.0 581.2 435.0 C583.0 440.0 585.9 446.0 587.0 451.0 C588.1 456.0 587.8 462.7 588.0 465.0" stroke="#f4f4f4" stroke-width="2.0" fill="none" stroke-linecap="round"/><path d="M617.7 351.0 C615.9 353.6 609.1 360.7 606.7 366.6 C604.3 372.5 605.5 379.7 603.2 386.3 C600.9 392.9 595.2 400.2 592.8 406.0 C590.4 411.8 588.7 415.6 588.7 421.0 C588.7 426.4 591.6 432.6 592.8 438.4 C594.0 444.2 595.1 451.3 595.7 455.7 C596.3 460.1 596.2 463.4 596.3 465.0" stroke="#f4f4f4" stroke-width="2.0" fill="none" stroke-linecap="round"/><path d="M765.4 346.0 C766.2 347.4 768.7 351.8 770.3 354.4 C771.9 357.0 774.2 359.6 775.0 361.7 C775.8 363.8 775.0 366.1 775.0 367.0" stroke="#f4f4f4" stroke-width="2.0" fill="none" stroke-linecap="round"/><path d="M748.6 364.7 C749.6 363.8 752.0 359.0 754.6 359.3 C757.2 359.6 761.4 363.1 764.2 366.5 C767.0 369.9 769.5 375.1 771.5 379.7 C773.5 384.3 775.1 390.2 776.3 394.2 C777.5 398.2 778.9 400.8 778.7 403.8 C778.5 406.8 776.4 410.0 775.0 412.2 C773.6 414.4 771.1 416.2 770.3 417.0" stroke="#f4f4f4" stroke-width="2.0" fill="none" stroke-linecap="round"/><path d="M785.9 387.0 C786.4 390.8 788.6 402.3 789.0 410.0 C789.4 417.7 789.0 426.7 788.0 433.0 C787.0 439.3 784.7 444.3 783.0 448.0 C781.3 451.7 779.2 451.3 778.0 455.0 C776.8 458.7 776.3 467.5 776.0 470.0" stroke="#f4f4f4" stroke-width="2.0" fill="none" stroke-linecap="round"/><line x1="758" y1="378.5" x2="758" y2="396" stroke="#f4f4f4" stroke-width="1.2" stroke-linecap="round"/><circle cx="591.5" cy="412.5" r="1.1" fill="#f4f4f4"/><circle cx="796.5" cy="431.2" r="1.0" fill="#f4f4f4"/><circle cx="801.0" cy="406.0" r="1.1" fill="#f4f4f4"/><circle cx="776.0" cy="422.5" r="0.8" fill="#f4f4f4"/><circle cx="581.2" cy="400.1" r="1.0" fill="#f4f4f4"/><circle cx="603.1" cy="432.3" r="0.5" fill="#f4f4f4"/><circle cx="773.3" cy="474.1" r="0.7" fill="#f4f4f4"/><circle cx="782.3" cy="480.8" r="0.5" fill="#f4f4f4"/><circle cx="609.1" cy="501.4" r="1.0" fill="#f4f4f4"/><circle cx="573.6" cy="437.2" r="0.8" fill="#f4f4f4"/><circle cx="780.6" cy="422.1" r="0.9" fill="#f4f4f4"/><circle cx="610.8" cy="437.8" r="1.0" fill="#f4f4f4"/><circle cx="595.6" cy="362.4" r="0.7" fill="#f4f4f4"/><circle cx="773.4" cy="408.8" r="1.1" fill="#f4f4f4"/><circle cx="611.5" cy="498.0" r="0.7" fill="#f4f4f4"/><circle cx="590.5" cy="366.7" r="1.0" fill="#f4f4f4"/><circle cx="771.2" cy="514.2" r="0.9" fill="#f4f4f4"/><circle cx="595.8" cy="501.2" r="0.7" fill="#f4f4f4"/><circle cx="798.8" cy="435.4" r="0.7" fill="#f4f4f4"/><circle cx="605.8" cy="446.9" r="0.8" fill="#f4f4f4"/><circle cx="596.6" cy="418.9" r="0.8" fill="#f4f4f4"/><circle cx="574.5" cy="404.9" r="0.5" fill="#f4f4f4"/><circle cx="784.7" cy="509.8" r="0.6" fill="#f4f4f4"/><circle cx="589.8" cy="474.8" r="0.5" fill="#f4f4f4"/><circle cx="595.6" cy="469.0" r="0.5" fill="#f4f4f4"/><circle cx="583.8" cy="399.7" r="0.8" fill="#f4f4f4"/><circle cx="573.4" cy="427.6" r="0.6" fill="#f4f4f4"/><circle cx="788.5" cy="519.5" r="0.8" fill="#f4f4f4"/><circle cx="799.5" cy="455.3" r="1.0" fill="#f4f4f4"/><circle cx="586.6" cy="519.4" r="1.0" fill="#f4f4f4"/><circle cx="576.5" cy="500.5" r="0.7" fill="#f4f4f4"/><circle cx="803.0" cy="509.8" r="0.7" fill="#f4f4f4"/><circle cx="804.9" cy="372.1" r="0.9" fill="#f4f4f4"/><circle cx="782.5" cy="380.8" r="1.1" fill="#f4f4f4"/><circle cx="609.3" cy="418.3" r="0.7" fill="#f4f4f4"/><circle cx="589.5" cy="454.3" r="0.8" fill="#f4f4f4"/><circle cx="783.2" cy="383.0" r="0.6" fill="#f4f4f4"/><circle cx="778.5" cy="434.9" r="0.8" fill="#f4f4f4"/><circle cx="608.0" cy="482.4" r="0.7" fill="#f4f4f4"/><circle cx="781.8" cy="409.1" r="1.0" fill="#f4f4f4"/></g><g id="title" fill="none" stroke-linecap="butt" stroke-linejoin="round"><g stroke="#000" stroke-width="10.8"><path d="M498.4 670.2 L483.5 723.6"/><path d="M494.0 673.0 C496.7 673.0 505.2 672.2 510.0 673.0 C514.8 673.8 521.1 675.1 522.8 677.6 C524.5 680.1 521.4 685.5 520.0 688.0 C518.6 690.5 519.4 691.3 514.7 692.5 C510.0 693.7 495.5 694.8 491.7 695.2"/><path d="M500.0 693.0 L518.7 730.4"/><path d="M481.0 683.0 L496.0 672.0"/><path d="M528.2 721.0 L554.0 669.5 L558.0 731.8"/><path d="M526.9 688.0 L564.8 710.0"/><path d="M568.8 685.7 L612.2 672.2"/><path d="M594.6 674.9 L575.6 729.0"/><path d="M601.3 687.0 L647.4 672.2"/><path d="M627.0 677.0 L608.0 729.0"/><path d="M651.4 677.6 C650.0 681.3 645.0 693.5 643.0 700.0 C641.0 706.5 638.3 712.5 639.3 716.9 C640.2 721.3 644.9 725.3 648.7 726.4 C652.5 727.5 658.8 728.0 662.3 723.6 C665.8 719.2 667.8 709.0 670.0 700.0 C672.2 691.0 674.8 674.6 675.8 669.5"/><path d="M713.7 672.2 C709.7 674.0 694.8 679.2 689.4 683.0 C684.0 686.8 682.6 693.2 681.2 695.2"/><path d="M681.2 695.2 L713.7 696.6 L708.3 704.7 L673.1 726.4"/><path d="M423.7 807.4 L438.1 761.2 L443.9 803.6 L457.4 749.6"/><ellipse cx="474.7" cy="778.5" rx="10.5" ry="25" transform="rotate(17 474.7 778.5)"/><path d="M507.5 750.6 L496.9 807.4"/><path d="M505.0 757.0 C507.2 756.5 513.9 754.1 518.0 754.0 C522.1 753.9 528.1 754.6 529.6 756.4 C531.1 758.2 527.8 762.6 527.0 765.0 C526.2 767.4 529.3 768.7 524.8 770.8 C520.3 772.9 504.0 776.5 499.8 777.6"/><path d="M505.0 778.0 L528.7 813.2"/><path d="M537.3 759.3 L541.2 813.2 L562.4 752.5"/><path d="M573.0 759.3 L600.0 756.4"/><path d="M573.0 760.0 L565.3 799.7"/><path d="M569.1 780.5 L586.5 781.4"/><path d="M565.3 800.0 L592.3 802.6"/><path d="M636.5 750.9 C632.9 752.9 620.3 757.7 614.7 762.8 C609.1 767.9 604.1 776.0 603.0 781.6 C601.9 787.2 605.0 794.7 607.8 796.4 C610.6 798.1 618.0 792.7 620.0 792.0"/><path d="M613.0 782.6 L634.5 769.7"/><path d="M632.0 772.0 L609.0 813.3"/><path d="M650.3 754.9 L643.4 807.3"/><path d="M640.4 760.8 L661.2 753.9"/><path d="M636.5 800.0 L650.3 803.4"/><path d="M693.9 759.8 C690.3 761.4 677.0 765.1 672.1 769.7 C667.2 774.3 664.2 782.2 664.2 787.5 C664.2 792.8 667.5 801.9 672.1 801.4 C676.7 800.9 688.6 787.4 691.9 784.6"/><path d="M712.7 757.8 C711.6 762.3 707.5 777.7 706.0 785.0 C704.5 792.3 703.2 797.7 703.8 801.4 C704.4 805.1 707.1 807.5 709.8 807.3 C712.5 807.1 717.1 804.5 720.0 800.0 C722.9 795.5 724.8 788.2 727.0 780.0 C729.2 771.8 732.4 755.8 733.5 750.9"/><path d="M766.2 753.9 C762.7 755.9 749.9 761.4 745.4 765.7 C740.9 770.0 740.5 777.3 739.5 779.6"/><path d="M739.5 779.6 L766.2 777.6 L763.2 789.5 L731.5 808.3"/></g><g fill="#000" stroke="none"><path d="M503.6 671.7 L493.2 668.7 L500.4 663.0Z"/><path d="M478.3 722.1 L488.7 725.1 L481.5 730.8Z"/><path d="M494.0 667.6 L494.0 678.4 L486.5 673.0Z"/><path d="M491.1 689.8 L492.3 700.6 L484.3 696.1Z"/><path d="M504.8 690.6 L495.2 695.4 L496.6 686.3Z"/><path d="M513.9 732.8 L523.5 728.0 L522.1 737.1Z"/><path d="M477.8 678.6 L484.2 687.4 L475.0 687.4Z"/><path d="M499.2 676.4 L492.8 667.6 L502.0 667.6Z"/><path d="M523.4 718.6 L533.0 723.4 L524.8 727.7Z"/><path d="M552.6 732.1 L563.4 731.5 L558.5 739.3Z"/><path d="M529.6 683.3 L524.2 692.7 L520.4 684.2Z"/><path d="M562.1 714.7 L567.5 705.3 L571.3 713.8Z"/><path d="M567.2 680.5 L570.4 690.9 L561.6 687.9Z"/><path d="M613.8 677.4 L610.6 667.0 L619.4 670.0Z"/><path d="M599.7 676.7 L589.5 673.1 L597.1 667.8Z"/><path d="M570.5 727.2 L580.7 730.8 L573.1 736.1Z"/><path d="M599.6 681.9 L603.0 692.1 L594.2 689.3Z"/><path d="M649.1 677.3 L645.7 667.1 L654.5 669.9Z"/><path d="M632.1 678.9 L621.9 675.1 L629.6 670.0Z"/><path d="M602.9 727.1 L613.1 730.9 L605.4 736.0Z"/><path d="M656.5 679.5 L646.3 675.7 L654.0 670.6Z"/><path d="M681.1 670.5 L670.5 668.5 L677.2 662.1Z"/><path d="M715.9 677.1 L711.5 667.3 L720.6 669.2Z"/><path d="M676.7 692.2 L685.7 698.2 L677.0 701.4Z"/><path d="M681.4 689.8 L681.0 700.6 L673.7 694.9Z"/><path d="M670.3 721.8 L675.9 731.0 L666.7 730.3Z"/><path d="M418.5 805.8 L428.9 809.0 L421.5 814.6Z"/><path d="M462.6 750.9 L452.2 748.3 L459.2 742.3Z"/><path d="M512.8 751.6 L502.2 749.6 L508.9 743.2Z"/><path d="M491.6 806.4 L502.2 808.4 L495.5 814.8Z"/><path d="M503.8 751.7 L506.2 762.3 L497.7 758.7Z"/><path d="M498.4 772.4 L501.2 782.8 L492.6 779.6Z"/><path d="M509.5 775.0 L500.5 781.0 L500.8 771.8Z"/><path d="M524.2 816.2 L533.2 810.2 L532.9 819.4Z"/><path d="M542.7 758.9 L531.9 759.7 L536.8 751.8Z"/><path d="M567.5 754.3 L557.3 750.7 L564.9 745.4Z"/><path d="M572.4 753.9 L573.6 764.7 L565.5 760.1Z"/><path d="M600.6 761.8 L599.4 751.0 L607.5 755.6Z"/><path d="M578.3 761.0 L567.7 759.0 L574.4 752.6Z"/><path d="M560.0 798.7 L570.6 800.7 L563.9 807.1Z"/><path d="M569.4 775.1 L568.8 785.9 L561.6 780.1Z"/><path d="M586.2 786.8 L586.8 776.0 L594.0 781.8Z"/><path d="M565.8 794.6 L564.8 805.4 L557.8 799.3Z"/><path d="M591.8 808.0 L592.8 797.2 L599.8 803.3Z"/><path d="M639.1 755.6 L633.9 746.2 L643.1 747.3Z"/><path d="M621.8 797.1 L618.2 786.9 L627.1 789.5Z"/><path d="M610.2 778.0 L615.8 787.2 L606.6 786.5Z"/><path d="M637.3 774.3 L631.7 765.1 L640.9 765.8Z"/><path d="M636.7 774.6 L627.3 769.4 L635.6 765.4Z"/><path d="M604.3 810.7 L613.7 815.9 L605.4 819.9Z"/><path d="M655.7 755.6 L644.9 754.2 L651.3 747.5Z"/><path d="M638.0 806.6 L648.8 808.0 L642.4 814.7Z"/><path d="M638.7 755.7 L642.1 765.9 L633.3 763.2Z"/><path d="M662.9 759.0 L659.5 748.8 L668.3 751.5Z"/><path d="M637.8 794.8 L635.2 805.2 L629.2 798.2Z"/><path d="M649.0 808.6 L651.6 798.2 L657.6 805.2Z"/><path d="M696.1 764.7 L691.7 754.9 L700.7 756.7Z"/><path d="M695.4 788.7 L688.4 780.5 L697.6 779.7Z"/><path d="M717.9 759.1 L707.5 756.5 L714.5 750.5Z"/><path d="M738.8 752.1 L728.2 749.7 L735.1 743.6Z"/><path d="M768.9 758.6 L763.5 749.2 L772.7 750.2Z"/><path d="M734.5 777.5 L744.5 781.7 L736.6 786.5Z"/><path d="M739.1 774.2 L739.9 785.0 L732.0 780.2Z"/><path d="M728.7 803.7 L734.3 812.9 L725.0 812.1Z"/></g><g fill="#000" stroke="none"><path d="M486.9 695.7 L485.8 699.6 L481.3 699.4Z"/><path d="M493.2 673.0 L492.2 676.9 L487.8 676.7Z"/><path d="M484.9 703.1 L483.8 707.0 L479.2 706.7Z"/><path d="M484.8 703.5 L485.8 699.6 L481.7 697.4Z"/><path d="M492.5 707.1 L491.4 711.0 L495.7 713.2Z"/><path d="M486.3 697.9 L485.2 701.7 L481.1 701.6Z"/><path d="M509.6 677.2 L505.6 677.2 L504.6 680.5Z"/><path d="M510.6 677.7 L514.4 679.0 L514.0 683.2Z"/><path d="M500.1 690.0 L504.1 689.5 L504.5 684.4Z"/><path d="M519.4 722.4 L517.6 718.8 L521.2 715.9Z"/><path d="M484.9 685.4 L488.1 683.0 L490.9 685.1Z"/><path d="M536.8 713.3 L538.5 709.7 L543.2 711.0Z"/><path d="M538.8 690.4 L540.6 686.9 L536.9 683.9Z"/><path d="M553.6 679.6 L551.8 683.2 L556.0 686.4Z"/><path d="M529.5 709.0 L527.7 712.6 L522.7 711.2Z"/><path d="M531.6 704.9 L533.4 701.3 L530.4 698.7Z"/><path d="M551.8 700.9 L551.6 697.0 L547.1 696.2Z"/><path d="M559.8 695.0 L560.1 698.9 L564.2 699.7Z"/><path d="M551.3 693.1 L551.1 689.1 L546.2 688.4Z"/><path d="M559.9 696.2 L559.7 692.2 L564.1 690.9Z"/><path d="M551.2 691.6 L551.5 695.6 L546.9 696.9Z"/><path d="M558.7 676.5 L558.9 680.5 L562.7 681.2Z"/><path d="M548.3 705.3 L544.8 703.3 L542.0 706.2Z"/><path d="M538.0 699.3 L541.5 701.3 L540.0 706.0Z"/><path d="M555.7 699.9 L559.2 701.9 L562.2 698.8Z"/><path d="M540.2 700.6 L536.8 698.6 L534.2 701.0Z"/><path d="M541.2 691.4 L544.6 693.4 L547.9 689.8Z"/><path d="M595.7 672.9 L599.6 671.7 L599.4 667.9Z"/><path d="M609.5 677.4 L605.7 678.6 L606.2 683.6Z"/><path d="M598.7 672.0 L602.5 670.8 L602.2 666.3Z"/><path d="M590.5 683.4 L594.3 682.2 L596.4 685.6Z"/><path d="M581.7 699.0 L583.0 695.2 L578.6 692.6Z"/><path d="M588.0 681.0 L589.3 677.2 L586.6 675.2Z"/><path d="M577.9 709.6 L576.6 713.4 L571.6 712.7Z"/><path d="M592.3 694.2 L593.6 690.4 L598.7 691.1Z"/><path d="M607.0 680.8 L603.2 682.0 L601.0 678.3Z"/><path d="M609.8 688.7 L606.0 689.9 L606.6 695.0Z"/><path d="M618.4 685.9 L614.6 687.1 L614.8 691.2Z"/><path d="M626.2 674.6 L622.4 675.8 L620.4 672.6Z"/><path d="M639.3 670.4 L635.5 671.6 L633.3 667.9Z"/><path d="M614.4 699.3 L615.8 695.5 L612.6 693.3Z"/><path d="M615.4 696.5 L614.0 700.2 L609.2 699.5Z"/><path d="M627.5 687.8 L628.9 684.0 L632.5 684.3Z"/><path d="M614.9 722.3 L613.5 726.1 L616.8 728.3Z"/><path d="M616.5 693.5 L615.1 697.3 L611.1 696.8Z"/><path d="M623.4 699.2 L624.7 695.4 L629.1 696.0Z"/><path d="M653.3 684.6 L654.7 680.9 L658.7 681.3Z"/><path d="M635.7 713.6 L636.6 709.7 L632.9 707.8Z"/><path d="M636.9 708.3 L636.0 712.2 L631.8 712.3Z"/><path d="M645.8 717.5 L648.7 720.4 L652.0 718.5Z"/><path d="M649.3 730.6 L653.2 729.8 L655.2 734.6Z"/><path d="M663.8 705.4 L665.1 701.6 L661.0 699.2Z"/><path d="M667.8 688.9 L668.6 685.0 L664.5 683.2Z"/><path d="M668.8 683.8 L669.6 679.9 L666.3 678.2Z"/><path d="M713.0 677.1 L709.4 678.7 L709.9 682.4Z"/><path d="M694.8 685.2 L698.4 683.6 L701.3 687.6Z"/><path d="M707.4 692.1 L703.4 692.0 L702.5 688.5Z"/><path d="M695.1 691.6 L691.1 691.4 L690.2 687.7Z"/><path d="M709.7 695.0 L707.5 698.4 L703.6 697.0Z"/><path d="M691.0 710.4 L694.4 708.3 L693.2 704.4Z"/><path d="M682.5 725.5 L679.1 727.6 L680.7 732.1Z"/><path d="M687.3 712.7 L690.7 710.6 L689.7 707.1Z"/><path d="M435.3 784.3 L434.1 788.1 L437.1 790.1Z"/><path d="M426.5 784.4 L427.7 780.6 L423.6 778.3Z"/><path d="M436.5 780.5 L435.3 784.3 L438.6 786.4Z"/><path d="M431.0 769.9 L429.8 773.7 L425.4 773.4Z"/><path d="M444.8 779.3 L445.4 783.2 L450.6 783.5Z"/><path d="M437.6 788.3 L437.0 784.3 L432.8 783.9Z"/><path d="M446.0 787.8 L446.5 791.7 L451.6 792.0Z"/><path d="M452.2 787.9 L451.2 791.8 L455.8 793.9Z"/><path d="M447.4 772.3 L448.4 768.4 L445.2 766.5Z"/><path d="M443.6 787.3 L442.7 791.2 L439.1 791.3Z"/><path d="M450.6 759.6 L451.5 755.8 L447.8 753.8Z"/><path d="M502.4 754.9 L501.7 758.8 L497.6 759.1Z"/><path d="M497.2 782.8 L496.5 786.8 L492.9 787.1Z"/><path d="M503.4 795.2 L502.7 799.2 L505.9 800.8Z"/><path d="M494.7 796.3 L494.0 800.2 L489.1 800.4Z"/><path d="M496.2 788.2 L496.9 784.3 L492.5 782.4Z"/><path d="M525.7 754.9 L524.5 758.7 L521.0 758.7Z"/><path d="M506.9 780.0 L510.8 779.0 L512.7 782.1Z"/><path d="M527.4 803.8 L529.6 807.1 L533.9 805.4Z"/><path d="M515.4 786.0 L517.7 789.3 L521.7 787.8Z"/><path d="M506.2 787.3 L508.4 790.6 L506.2 793.4Z"/><path d="M542.2 768.7 L541.9 764.7 L546.0 763.4Z"/><path d="M535.5 793.0 L535.8 797.0 L530.8 798.3Z"/><path d="M544.3 797.3 L544.5 801.3 L548.8 802.0Z"/><path d="M543.9 791.8 L543.6 787.8 L547.1 786.6Z"/><path d="M534.9 785.0 L534.7 781.0 L530.2 780.3Z"/><path d="M543.3 783.6 L543.0 779.6 L547.2 778.3Z"/><path d="M552.2 794.5 L550.9 798.3 L555.1 800.8Z"/><path d="M553.5 790.6 L554.9 786.9 L559.2 787.3Z"/><path d="M557.4 779.6 L558.7 775.9 L562.1 776.0Z"/><path d="M550.8 773.1 L549.4 776.8 L545.2 776.4Z"/><path d="M547.8 781.5 L546.5 785.3 L543.1 785.1Z"/><path d="M558.9 775.3 L557.6 779.0 L561.3 781.4Z"/><path d="M553.5 765.4 L552.1 769.2 L548.1 768.8Z"/><path d="M574.9 754.9 L578.9 754.4 L579.5 750.5Z"/><path d="M570.7 794.0 L571.4 790.1 L576.2 790.0Z"/><path d="M571.0 792.4 L571.8 788.4 L576.0 788.2Z"/><path d="M576.1 766.3 L575.3 770.2 L578.4 771.8Z"/><path d="M567.5 766.3 L566.7 770.2 L562.0 770.3Z"/><path d="M574.5 785.0 L578.5 785.2 L579.3 788.5Z"/><path d="M582.2 785.4 L578.2 785.2 L577.0 789.2Z"/><path d="M571.1 804.8 L575.1 805.2 L575.7 809.5Z"/><path d="M575.2 796.7 L571.2 796.4 L570.6 792.6Z"/><path d="M588.9 798.1 L584.9 797.7 L584.2 794.0Z"/><path d="M627.5 760.6 L631.0 758.7 L633.6 761.2Z"/><path d="M634.9 756.6 L631.4 758.5 L632.4 762.6Z"/><path d="M609.5 779.2 L611.6 775.8 L615.5 777.0Z"/><path d="M615.8 769.0 L617.9 765.6 L621.3 766.5Z"/><path d="M616.6 767.7 L614.5 771.1 L618.2 774.6Z"/><path d="M602.0 792.0 L603.2 795.8 L598.6 798.4Z"/><path d="M620.9 772.9 L624.4 770.9 L622.9 766.6Z"/><path d="M620.6 782.9 L617.2 785.0 L618.6 789.2Z"/><path d="M631.8 780.9 L633.8 777.4 L637.4 778.3Z"/><path d="M624.1 777.6 L626.0 774.1 L622.1 770.8Z"/><path d="M616.3 791.6 L618.2 788.2 L615.2 785.4Z"/><path d="M648.8 798.4 L648.3 802.4 L651.6 803.8Z"/><path d="M643.3 775.6 L643.9 771.6 L639.2 770.0Z"/><path d="M640.0 800.9 L640.5 796.9 L636.8 795.4Z"/><path d="M644.4 767.2 L643.9 771.2 L640.1 771.7Z"/><path d="M641.7 787.8 L641.2 791.8 L637.8 792.3Z"/><path d="M641.0 793.1 L641.6 789.1 L637.0 787.5Z"/><path d="M647.0 754.2 L643.2 755.4 L641.0 751.9Z"/><path d="M644.9 797.7 L641.0 796.8 L641.0 792.7Z"/><path d="M685.4 768.3 L681.7 769.9 L682.2 773.4Z"/><path d="M674.0 775.7 L675.7 772.1 L680.1 772.9Z"/><path d="M672.9 778.3 L674.5 774.6 L679.4 775.7Z"/><path d="M665.5 798.3 L663.5 794.8 L659.5 796.0Z"/><path d="M685.7 784.4 L682.6 787.0 L679.5 784.9Z"/><path d="M680.3 789.0 L677.2 791.6 L673.5 788.8Z"/><path d="M704.2 774.6 L705.2 770.7 L701.8 768.8Z"/><path d="M709.0 794.2 L709.5 790.2 L713.8 789.8Z"/><path d="M704.5 808.0 L701.7 805.2 L697.4 808.1Z"/><path d="M721.8 782.2 L720.5 786.0 L716.6 785.7Z"/><path d="M726.6 793.7 L725.3 797.5 L728.5 799.7Z"/><path d="M727.9 756.8 L727.0 760.7 L722.0 760.6Z"/><path d="M761.0 761.7 L757.5 763.7 L758.7 767.8Z"/><path d="M751.3 767.2 L747.9 769.1 L749.5 774.1Z"/><path d="M743.7 780.5 L745.2 776.8 L749.1 777.4Z"/><path d="M744.9 777.7 L746.4 774.0 L751.1 774.9Z"/><path d="M749.7 783.0 L753.7 782.7 L755.1 787.3Z"/><path d="M742.7 783.6 L746.7 783.3 L748.0 787.3Z"/><path d="M761.1 780.5 L760.2 784.3 L754.9 784.1Z"/><path d="M755.5 789.2 L752.1 791.2 L749.1 788.2Z"/><path d="M735.4 801.1 L731.9 803.2 L729.4 800.9Z"/><path d="M747.1 794.2 L750.5 792.2 L748.8 787.3Z"/></g><g stroke="#f2f2f2" stroke-width="8.0"><path d="M498.4 670.2 L483.5 723.6"/><path d="M494.0 673.0 C496.7 673.0 505.2 672.2 510.0 673.0 C514.8 673.8 521.1 675.1 522.8 677.6 C524.5 680.1 521.4 685.5 520.0 688.0 C518.6 690.5 519.4 691.3 514.7 692.5 C510.0 693.7 495.5 694.8 491.7 695.2"/><path d="M500.0 693.0 L518.7 730.4"/><path d="M481.0 683.0 L496.0 672.0"/><path d="M528.2 721.0 L554.0 669.5 L558.0 731.8"/><path d="M526.9 688.0 L564.8 710.0"/><path d="M568.8 685.7 L612.2 672.2"/><path d="M594.6 674.9 L575.6 729.0"/><path d="M601.3 687.0 L647.4 672.2"/><path d="M627.0 677.0 L608.0 729.0"/><path d="M651.4 677.6 C650.0 681.3 645.0 693.5 643.0 700.0 C641.0 706.5 638.3 712.5 639.3 716.9 C640.2 721.3 644.9 725.3 648.7 726.4 C652.5 727.5 658.8 728.0 662.3 723.6 C665.8 719.2 667.8 709.0 670.0 700.0 C672.2 691.0 674.8 674.6 675.8 669.5"/><path d="M713.7 672.2 C709.7 674.0 694.8 679.2 689.4 683.0 C684.0 686.8 682.6 693.2 681.2 695.2"/><path d="M681.2 695.2 L713.7 696.6 L708.3 704.7 L673.1 726.4"/><path d="M423.7 807.4 L438.1 761.2 L443.9 803.6 L457.4 749.6"/><ellipse cx="474.7" cy="778.5" rx="10.5" ry="25" transform="rotate(17 474.7 778.5)"/><path d="M507.5 750.6 L496.9 807.4"/><path d="M505.0 757.0 C507.2 756.5 513.9 754.1 518.0 754.0 C522.1 753.9 528.1 754.6 529.6 756.4 C531.1 758.2 527.8 762.6 527.0 765.0 C526.2 767.4 529.3 768.7 524.8 770.8 C520.3 772.9 504.0 776.5 499.8 777.6"/><path d="M505.0 778.0 L528.7 813.2"/><path d="M537.3 759.3 L541.2 813.2 L562.4 752.5"/><path d="M573.0 759.3 L600.0 756.4"/><path d="M573.0 760.0 L565.3 799.7"/><path d="M569.1 780.5 L586.5 781.4"/><path d="M565.3 800.0 L592.3 802.6"/><path d="M636.5 750.9 C632.9 752.9 620.3 757.7 614.7 762.8 C609.1 767.9 604.1 776.0 603.0 781.6 C601.9 787.2 605.0 794.7 607.8 796.4 C610.6 798.1 618.0 792.7 620.0 792.0"/><path d="M613.0 782.6 L634.5 769.7"/><path d="M632.0 772.0 L609.0 813.3"/><path d="M650.3 754.9 L643.4 807.3"/><path d="M640.4 760.8 L661.2 753.9"/><path d="M636.5 800.0 L650.3 803.4"/><path d="M693.9 759.8 C690.3 761.4 677.0 765.1 672.1 769.7 C667.2 774.3 664.2 782.2 664.2 787.5 C664.2 792.8 667.5 801.9 672.1 801.4 C676.7 800.9 688.6 787.4 691.9 784.6"/><path d="M712.7 757.8 C711.6 762.3 707.5 777.7 706.0 785.0 C704.5 792.3 703.2 797.7 703.8 801.4 C704.4 805.1 707.1 807.5 709.8 807.3 C712.5 807.1 717.1 804.5 720.0 800.0 C722.9 795.5 724.8 788.2 727.0 780.0 C729.2 771.8 732.4 755.8 733.5 750.9"/><path d="M766.2 753.9 C762.7 755.9 749.9 761.4 745.4 765.7 C740.9 770.0 740.5 777.3 739.5 779.6"/><path d="M739.5 779.6 L766.2 777.6 L763.2 789.5 L731.5 808.3"/></g><g fill="#f2f2f2" stroke="none"><path d="M502.3 671.3 L494.5 669.1 L500.0 664.6Z"/><path d="M479.6 722.5 L487.4 724.7 L481.9 729.2Z"/><path d="M494.0 669.0 L494.0 677.0 L488.2 673.0Z"/><path d="M491.2 691.2 L492.2 699.2 L485.9 695.9Z"/><path d="M503.6 691.2 L496.4 694.8 L497.4 687.8Z"/><path d="M515.1 732.2 L522.3 728.6 L521.3 735.6Z"/><path d="M478.6 679.8 L483.4 686.2 L476.3 686.4Z"/><path d="M498.4 675.2 L493.6 668.8 L500.7 668.6Z"/><path d="M524.6 719.2 L531.8 722.8 L525.6 726.2Z"/><path d="M554.0 732.1 L562.0 731.5 L558.4 737.6Z"/><path d="M528.9 684.5 L524.9 691.5 L521.9 685.1Z"/><path d="M562.8 713.5 L566.8 706.5 L569.8 712.9Z"/><path d="M567.6 681.9 L570.0 689.5 L563.3 687.4Z"/><path d="M613.4 676.0 L611.0 668.4 L617.7 670.5Z"/><path d="M598.4 676.2 L590.8 673.6 L596.5 669.4Z"/><path d="M571.8 727.7 L579.4 730.3 L573.7 734.5Z"/><path d="M600.1 683.2 L602.5 690.8 L595.8 688.8Z"/><path d="M648.6 676.0 L646.2 668.4 L652.9 670.4Z"/><path d="M630.8 678.4 L623.2 675.6 L629.0 671.6Z"/><path d="M604.2 727.6 L611.8 730.4 L606.0 734.4Z"/><path d="M655.1 679.0 L647.7 676.2 L653.4 672.2Z"/><path d="M679.7 670.2 L671.9 668.8 L676.9 663.8Z"/><path d="M715.3 675.9 L712.1 668.5 L719.0 669.8Z"/><path d="M677.9 693.0 L684.5 697.4 L678.0 700.0Z"/><path d="M681.4 691.2 L681.0 699.2 L675.4 695.0Z"/><path d="M671.0 723.0 L675.2 729.8 L668.2 729.4Z"/><path d="M419.9 806.2 L427.5 808.6 L422.0 812.9Z"/><path d="M461.3 750.6 L453.5 748.6 L458.8 744.0Z"/><path d="M511.4 751.3 L503.6 749.9 L508.6 744.9Z"/><path d="M493.0 806.7 L500.8 808.1 L495.8 813.1Z"/><path d="M504.1 753.1 L505.9 760.9 L499.3 758.3Z"/><path d="M498.8 773.7 L500.8 781.5 L494.2 779.1Z"/><path d="M508.3 775.8 L501.7 780.2 L501.8 773.2Z"/><path d="M525.4 815.4 L532.0 811.0 L531.9 818.0Z"/><path d="M541.3 759.0 L533.3 759.6 L536.9 753.5Z"/><path d="M566.2 753.8 L558.6 751.2 L564.3 747.0Z"/><path d="M572.6 755.3 L573.4 763.3 L567.2 759.9Z"/><path d="M600.4 760.4 L599.6 752.4 L605.8 755.8Z"/><path d="M576.9 760.8 L569.1 759.2 L574.1 754.3Z"/><path d="M561.4 798.9 L569.2 800.5 L564.2 805.4Z"/><path d="M569.3 776.5 L568.9 784.5 L563.3 780.2Z"/><path d="M586.3 785.4 L586.7 777.4 L592.3 781.7Z"/><path d="M565.7 796.0 L564.9 804.0 L559.5 799.4Z"/><path d="M591.9 806.6 L592.7 798.6 L598.1 803.2Z"/><path d="M638.4 754.4 L634.6 747.4 L641.6 748.1Z"/><path d="M621.4 795.8 L618.6 788.2 L625.5 790.0Z"/><path d="M610.9 779.2 L615.1 786.0 L608.0 785.6Z"/><path d="M636.6 773.1 L632.4 766.3 L639.5 766.7Z"/><path d="M635.5 773.9 L628.5 770.1 L634.8 766.9Z"/><path d="M605.5 811.4 L612.5 815.2 L606.2 818.4Z"/><path d="M654.3 755.4 L646.3 754.4 L651.1 749.1Z"/><path d="M639.4 806.8 L647.4 807.8 L642.6 813.1Z"/><path d="M639.1 757.0 L641.7 764.6 L634.9 762.6Z"/><path d="M662.5 757.7 L659.9 750.1 L666.7 752.1Z"/><path d="M637.5 796.1 L635.5 803.9 L630.9 798.6Z"/><path d="M649.3 807.3 L651.3 799.5 L655.9 804.8Z"/><path d="M695.6 763.4 L692.2 756.2 L699.2 757.4Z"/><path d="M694.5 787.7 L689.3 781.5 L696.3 780.8Z"/><path d="M716.6 758.8 L708.8 756.8 L714.1 752.2Z"/><path d="M737.4 751.8 L729.6 750.0 L734.8 745.2Z"/><path d="M768.2 757.4 L764.2 750.4 L771.2 751.0Z"/><path d="M735.8 778.0 L743.2 781.2 L737.2 784.9Z"/><path d="M739.2 775.6 L739.8 783.6 L733.7 780.0Z"/><path d="M729.5 804.9 L733.5 811.7 L726.5 811.3Z"/></g><g fill="#f2f2f2" stroke="none"><path d="M488.0 697.1 L487.5 699.0 L483.0 699.2Z"/><path d="M494.3 674.4 L493.8 676.3 L489.5 676.6Z"/><path d="M485.9 704.5 L485.4 706.4 L480.9 706.6Z"/><path d="M486.4 702.9 L486.9 700.9 L483.1 698.4Z"/><path d="M490.8 707.7 L490.3 709.6 L494.3 712.2Z"/><path d="M487.4 699.2 L486.9 701.2 L482.8 701.5Z"/><path d="M508.6 675.8 L506.6 675.8 L505.2 678.9Z"/><path d="M512.0 676.7 L513.9 677.4 L513.9 681.5Z"/><path d="M501.3 691.3 L503.2 691.0 L504.1 686.1Z"/><path d="M517.7 722.1 L516.8 720.3 L520.0 717.2Z"/><path d="M484.8 683.7 L486.5 682.5 L489.5 684.2Z"/><path d="M535.9 711.8 L536.8 710.0 L541.5 710.8Z"/><path d="M540.5 690.2 L541.4 688.4 L538.1 685.1Z"/><path d="M551.9 679.9 L551.0 681.7 L554.9 685.2Z"/><path d="M530.3 710.5 L529.4 712.3 L524.4 711.4Z"/><path d="M533.3 704.6 L534.2 702.9 L531.5 700.0Z"/><path d="M553.1 699.9 L553.0 697.9 L548.7 696.7Z"/><path d="M558.5 696.0 L558.6 698.0 L562.6 699.2Z"/><path d="M552.6 692.0 L552.5 690.0 L547.9 688.9Z"/><path d="M558.5 695.3 L558.3 693.3 L562.5 691.6Z"/><path d="M552.7 692.5 L552.8 694.5 L548.4 696.2Z"/><path d="M557.3 677.6 L557.5 679.6 L561.0 680.7Z"/><path d="M548.1 703.6 L546.4 702.6 L543.3 705.1Z"/><path d="M539.6 698.6 L541.3 699.6 L540.3 704.3Z"/><path d="M555.9 701.6 L557.6 702.6 L560.8 699.8Z"/><path d="M540.1 698.9 L538.4 697.9 L535.5 700.0Z"/><path d="M541.4 693.2 L543.1 694.2 L546.6 690.9Z"/><path d="M597.1 674.0 L599.0 673.4 L599.3 669.6Z"/><path d="M608.2 676.4 L606.3 677.0 L606.3 681.9Z"/><path d="M600.1 673.0 L602.0 672.4 L602.1 668.0Z"/><path d="M591.0 681.7 L592.9 681.1 L595.4 684.2Z"/><path d="M583.3 698.5 L584.0 696.6 L579.9 693.7Z"/><path d="M589.7 680.5 L590.3 678.6 L587.9 676.3Z"/><path d="M578.9 711.0 L578.3 712.9 L573.3 712.7Z"/><path d="M591.3 692.8 L592.0 690.9 L596.9 691.1Z"/><path d="M606.5 682.4 L604.6 683.0 L602.0 679.6Z"/><path d="M608.4 687.6 L606.5 688.3 L606.7 693.3Z"/><path d="M617.0 684.9 L615.1 685.5 L614.9 689.5Z"/><path d="M625.7 676.2 L623.8 676.8 L621.4 673.9Z"/><path d="M638.8 672.0 L636.9 672.6 L634.4 669.3Z"/><path d="M616.0 698.8 L616.7 697.0 L613.9 694.4Z"/><path d="M616.4 697.9 L615.7 699.8 L610.9 699.5Z"/><path d="M626.6 686.4 L627.2 684.5 L630.8 684.3Z"/><path d="M613.3 722.8 L612.6 724.6 L615.5 727.2Z"/><path d="M617.5 694.9 L616.8 696.8 L612.8 696.8Z"/><path d="M622.4 697.8 L623.1 695.9 L627.4 696.0Z"/><path d="M652.3 683.2 L653.0 681.3 L657.0 681.3Z"/><path d="M637.3 712.9 L637.7 710.9 L634.4 708.8Z"/><path d="M638.0 709.6 L637.6 711.6 L633.5 712.1Z"/><path d="M645.6 719.2 L647.0 720.7 L650.4 719.2Z"/><path d="M650.0 729.0 L651.9 728.6 L654.3 733.2Z"/><path d="M665.5 704.9 L666.1 703.0 L662.3 700.3Z"/><path d="M669.4 688.2 L669.8 686.3 L666.0 684.1Z"/><path d="M670.4 683.1 L670.7 681.1 L667.8 679.1Z"/><path d="M711.5 676.2 L709.7 677.0 L709.8 680.7Z"/><path d="M695.1 683.5 L697.0 682.7 L700.1 686.4Z"/><path d="M706.3 693.5 L704.3 693.4 L703.1 690.1Z"/><path d="M694.0 692.9 L692.0 692.9 L690.8 689.3Z"/><path d="M710.3 696.6 L709.2 698.3 L705.3 697.4Z"/><path d="M692.6 711.1 L694.3 710.0 L693.5 706.1Z"/><path d="M680.9 724.9 L679.2 725.9 L680.3 730.4Z"/><path d="M688.8 713.4 L690.5 712.4 L690.0 708.8Z"/><path d="M433.7 784.8 L433.1 786.7 L435.8 789.0Z"/><path d="M428.1 783.8 L428.7 781.9 L425.0 779.3Z"/><path d="M434.8 781.1 L434.2 783.0 L437.3 785.4Z"/><path d="M432.0 771.3 L431.4 773.2 L427.1 773.3Z"/><path d="M443.6 780.4 L443.8 782.4 L449.0 783.1Z"/><path d="M438.8 787.1 L438.5 785.1 L434.4 784.3Z"/><path d="M444.7 789.0 L445.0 790.9 L450.0 791.7Z"/><path d="M450.6 788.5 L450.1 790.5 L454.4 793.0Z"/><path d="M449.0 771.6 L449.5 769.7 L446.6 767.5Z"/><path d="M444.8 788.6 L444.3 790.6 L440.8 791.1Z"/><path d="M452.2 759.0 L452.6 757.1 L449.2 754.8Z"/><path d="M503.6 756.1 L503.3 758.1 L499.3 758.8Z"/><path d="M498.4 784.1 L498.0 786.0 L494.6 786.8Z"/><path d="M501.9 796.0 L501.5 797.9 L504.4 799.9Z"/><path d="M495.9 797.6 L495.5 799.5 L490.8 800.1Z"/><path d="M497.8 787.5 L498.1 785.5 L494.0 783.3Z"/><path d="M526.7 756.3 L526.1 758.2 L522.7 758.6Z"/><path d="M507.5 778.4 L509.4 777.9 L511.7 780.8Z"/><path d="M526.8 805.4 L527.9 807.0 L532.3 805.8Z"/><path d="M514.8 787.6 L515.9 789.2 L520.0 788.2Z"/><path d="M507.9 787.4 L509.0 789.0 L507.2 792.0Z"/><path d="M540.7 767.8 L540.6 765.8 L544.4 764.1Z"/><path d="M537.0 793.9 L537.1 795.9 L532.4 797.6Z"/><path d="M542.9 798.4 L543.1 800.4 L547.2 801.5Z"/><path d="M542.4 790.9 L542.3 788.9 L545.5 787.3Z"/><path d="M536.3 783.9 L536.1 781.9 L531.9 780.8Z"/><path d="M541.8 782.7 L541.7 780.7 L545.7 779.0Z"/><path d="M550.5 795.0 L549.9 796.8 L553.8 799.7Z"/><path d="M552.5 789.2 L553.2 787.3 L557.5 787.4Z"/><path d="M556.4 778.2 L557.0 776.3 L560.4 776.0Z"/><path d="M551.8 774.5 L551.1 776.4 L546.9 776.4Z"/><path d="M548.8 782.9 L548.2 784.8 L544.8 785.1Z"/><path d="M557.2 775.7 L556.6 777.6 L560.0 780.3Z"/><path d="M554.4 766.8 L553.8 768.7 L549.8 768.8Z"/><path d="M576.1 756.2 L578.1 755.9 L579.1 752.2Z"/><path d="M569.5 792.7 L569.9 790.8 L574.5 790.3Z"/><path d="M569.8 791.1 L570.2 789.1 L574.3 788.5Z"/><path d="M574.5 767.0 L574.1 769.0 L576.9 770.9Z"/><path d="M568.7 767.6 L568.3 769.5 L563.7 770.1Z"/><path d="M575.6 783.6 L577.6 783.7 L578.8 786.9Z"/><path d="M581.3 783.9 L579.3 783.8 L577.7 787.7Z"/><path d="M572.3 803.5 L574.3 803.7 L575.3 807.9Z"/><path d="M574.1 798.0 L572.1 797.8 L571.1 794.2Z"/><path d="M587.7 799.3 L585.7 799.2 L584.7 795.6Z"/><path d="M627.7 758.9 L629.5 757.9 L632.3 760.1Z"/><path d="M633.3 755.8 L631.6 756.8 L632.2 760.9Z"/><path d="M608.8 777.6 L609.9 775.9 L613.8 776.7Z"/><path d="M615.1 767.4 L616.2 765.7 L619.6 766.2Z"/><path d="M614.9 767.8 L613.8 769.5 L617.2 773.2Z"/><path d="M603.6 792.6 L604.2 794.5 L599.9 797.3Z"/><path d="M622.5 773.6 L624.2 772.6 L623.2 768.2Z"/><path d="M619.1 782.2 L617.3 783.3 L618.3 787.6Z"/><path d="M631.1 779.4 L632.1 777.6 L635.7 778.0Z"/><path d="M625.8 777.4 L626.7 775.7 L623.2 772.1Z"/><path d="M618.0 791.5 L618.9 789.7 L616.3 786.7Z"/><path d="M647.3 799.2 L647.0 801.2 L650.0 803.0Z"/><path d="M644.9 774.8 L645.1 772.8 L640.7 770.8Z"/><path d="M641.5 800.1 L641.8 798.1 L638.3 796.2Z"/><path d="M645.7 768.4 L645.4 770.4 L641.7 771.3Z"/><path d="M643.0 789.0 L642.7 791.0 L639.5 792.0Z"/><path d="M642.6 792.3 L642.8 790.3 L638.5 788.3Z"/><path d="M646.5 755.8 L644.6 756.5 L642.0 753.2Z"/><path d="M643.6 798.9 L641.7 798.4 L641.2 794.4Z"/><path d="M683.9 767.4 L682.0 768.3 L682.1 771.7Z"/><path d="M673.2 774.2 L674.0 772.4 L678.3 772.8Z"/><path d="M672.0 776.8 L672.8 775.0 L677.7 775.6Z"/><path d="M666.2 796.8 L665.3 795.0 L661.1 795.7Z"/><path d="M685.8 786.1 L684.3 787.4 L681.0 785.7Z"/><path d="M680.4 790.7 L678.9 792.0 L675.0 789.6Z"/><path d="M705.8 773.9 L706.3 772.0 L703.2 769.8Z"/><path d="M707.8 793.0 L708.0 791.0 L712.1 790.1Z"/><path d="M704.8 806.3 L703.4 804.9 L699.0 807.4Z"/><path d="M722.8 783.6 L722.1 785.5 L718.4 785.6Z"/><path d="M725.0 794.2 L724.3 796.1 L727.2 798.6Z"/><path d="M729.0 758.1 L728.6 760.0 L723.7 760.3Z"/><path d="M759.4 761.0 L757.7 762.0 L758.4 766.1Z"/><path d="M749.8 766.4 L748.0 767.4 L749.2 772.4Z"/><path d="M742.8 779.0 L743.6 777.2 L747.4 777.3Z"/><path d="M744.0 776.2 L744.8 774.4 L749.4 774.8Z"/><path d="M750.6 781.6 L752.6 781.4 L754.3 785.8Z"/><path d="M743.6 782.1 L745.6 782.0 L747.3 785.7Z"/><path d="M762.3 781.8 L761.8 783.7 L756.6 783.9Z"/><path d="M755.4 790.9 L753.6 791.9 L750.4 789.2Z"/><path d="M735.2 802.8 L733.5 803.9 L730.7 802.0Z"/><path d="M748.6 794.9 L750.4 793.9 L749.1 789.0Z"/></g><g stroke="#1e1e1e" stroke-width="3.4"><path d="M498.4 670.2 L483.5 723.6"/><path d="M494.0 673.0 C496.7 673.0 505.2 672.2 510.0 673.0 C514.8 673.8 521.1 675.1 522.8 677.6 C524.5 680.1 521.4 685.5 520.0 688.0 C518.6 690.5 519.4 691.3 514.7 692.5 C510.0 693.7 495.5 694.8 491.7 695.2"/><path d="M500.0 693.0 L518.7 730.4"/><path d="M481.0 683.0 L496.0 672.0"/><path d="M528.2 721.0 L554.0 669.5 L558.0 731.8"/><path d="M526.9 688.0 L564.8 710.0"/><path d="M568.8 685.7 L612.2 672.2"/><path d="M594.6 674.9 L575.6 729.0"/><path d="M601.3 687.0 L647.4 672.2"/><path d="M627.0 677.0 L608.0 729.0"/><path d="M651.4 677.6 C650.0 681.3 645.0 693.5 643.0 700.0 C641.0 706.5 638.3 712.5 639.3 716.9 C640.2 721.3 644.9 725.3 648.7 726.4 C652.5 727.5 658.8 728.0 662.3 723.6 C665.8 719.2 667.8 709.0 670.0 700.0 C672.2 691.0 674.8 674.6 675.8 669.5"/><path d="M713.7 672.2 C709.7 674.0 694.8 679.2 689.4 683.0 C684.0 686.8 682.6 693.2 681.2 695.2"/><path d="M681.2 695.2 L713.7 696.6 L708.3 704.7 L673.1 726.4"/><path d="M423.7 807.4 L438.1 761.2 L443.9 803.6 L457.4 749.6"/><ellipse cx="474.7" cy="778.5" rx="10.5" ry="25" transform="rotate(17 474.7 778.5)"/><path d="M507.5 750.6 L496.9 807.4"/><path d="M505.0 757.0 C507.2 756.5 513.9 754.1 518.0 754.0 C522.1 753.9 528.1 754.6 529.6 756.4 C531.1 758.2 527.8 762.6 527.0 765.0 C526.2 767.4 529.3 768.7 524.8 770.8 C520.3 772.9 504.0 776.5 499.8 777.6"/><path d="M505.0 778.0 L528.7 813.2"/><path d="M537.3 759.3 L541.2 813.2 L562.4 752.5"/><path d="M573.0 759.3 L600.0 756.4"/><path d="M573.0 760.0 L565.3 799.7"/><path d="M569.1 780.5 L586.5 781.4"/><path d="M565.3 800.0 L592.3 802.6"/><path d="M636.5 750.9 C632.9 752.9 620.3 757.7 614.7 762.8 C609.1 767.9 604.1 776.0 603.0 781.6 C601.9 787.2 605.0 794.7 607.8 796.4 C610.6 798.1 618.0 792.7 620.0 792.0"/><path d="M613.0 782.6 L634.5 769.7"/><path d="M632.0 772.0 L609.0 813.3"/><path d="M650.3 754.9 L643.4 807.3"/><path d="M640.4 760.8 L661.2 753.9"/><path d="M636.5 800.0 L650.3 803.4"/><path d="M693.9 759.8 C690.3 761.4 677.0 765.1 672.1 769.7 C667.2 774.3 664.2 782.2 664.2 787.5 C664.2 792.8 667.5 801.9 672.1 801.4 C676.7 800.9 688.6 787.4 691.9 784.6"/><path d="M712.7 757.8 C711.6 762.3 707.5 777.7 706.0 785.0 C704.5 792.3 703.2 797.7 703.8 801.4 C704.4 805.1 707.1 807.5 709.8 807.3 C712.5 807.1 717.1 804.5 720.0 800.0 C722.9 795.5 724.8 788.2 727.0 780.0 C729.2 771.8 732.4 755.8 733.5 750.9"/><path d="M766.2 753.9 C762.7 755.9 749.9 761.4 745.4 765.7 C740.9 770.0 740.5 777.3 739.5 779.6"/><path d="M739.5 779.6 L766.2 777.6 L763.2 789.5 L731.5 808.3"/></g><g fill="#1e1e1e" stroke="none"><path d="M500.0 670.7 L496.8 669.7 L499.1 667.7Z"/><path d="M481.9 723.1 L485.1 724.1 L482.8 726.1Z"/><path d="M494.0 671.3 L494.0 674.7 L491.4 673.0Z"/><path d="M491.5 693.5 L491.9 696.9 L489.1 695.5Z"/><path d="M501.5 692.2 L498.5 693.8 L498.8 690.7Z"/><path d="M517.2 731.2 L520.2 729.6 L519.9 732.7Z"/><path d="M480.0 681.6 L482.0 684.4 L478.9 684.5Z"/><path d="M497.0 673.4 L495.0 670.6 L498.1 670.5Z"/><path d="M526.7 720.2 L529.7 721.8 L527.0 723.3Z"/><path d="M556.3 731.9 L559.7 731.7 L558.2 734.4Z"/><path d="M527.8 686.5 L526.0 689.5 L524.7 686.7Z"/><path d="M563.9 711.5 L565.7 708.5 L567.0 711.3Z"/><path d="M568.3 684.1 L569.3 687.3 L566.3 686.5Z"/><path d="M612.7 673.8 L611.7 670.6 L614.7 671.4Z"/><path d="M596.2 675.5 L593.0 674.3 L595.5 672.4Z"/><path d="M574.0 728.4 L577.2 729.6 L574.7 731.5Z"/><path d="M600.8 685.4 L601.8 688.6 L598.8 687.8Z"/><path d="M647.9 673.8 L646.9 670.6 L649.9 671.4Z"/><path d="M628.6 677.6 L625.4 676.4 L627.9 674.6Z"/><path d="M606.4 728.4 L609.6 729.6 L607.1 731.4Z"/><path d="M653.0 678.2 L649.8 677.0 L652.3 675.2Z"/><path d="M677.5 669.8 L674.1 669.2 L676.3 666.9Z"/><path d="M714.4 673.8 L713.0 670.6 L716.1 671.1Z"/><path d="M679.8 694.3 L682.6 696.1 L679.7 697.4Z"/><path d="M681.3 693.5 L681.1 696.9 L678.6 695.1Z"/><path d="M672.2 725.0 L674.0 727.8 L670.9 727.8Z"/><path d="M422.1 806.9 L425.3 807.9 L422.9 809.9Z"/><path d="M459.0 750.0 L455.8 749.2 L458.0 747.1Z"/><path d="M509.2 750.9 L505.8 750.3 L508.0 748.0Z"/><path d="M495.2 807.1 L498.6 807.7 L496.4 810.0Z"/><path d="M504.6 755.3 L505.4 758.7 L502.5 757.6Z"/><path d="M499.4 776.0 L500.2 779.2 L497.3 778.3Z"/><path d="M506.4 777.1 L503.6 778.9 L503.5 775.8Z"/><path d="M527.3 814.1 L530.1 812.3 L530.2 815.4Z"/><path d="M539.0 759.2 L535.6 759.4 L537.1 756.7Z"/><path d="M564.0 753.1 L560.8 751.9 L563.3 750.0Z"/><path d="M572.8 757.6 L573.2 761.0 L570.4 759.6Z"/><path d="M600.2 758.1 L599.8 754.7 L602.6 756.1Z"/><path d="M574.7 760.3 L571.3 759.7 L573.5 757.4Z"/><path d="M563.6 799.4 L567.0 800.0 L564.8 802.3Z"/><path d="M569.2 778.8 L569.0 782.2 L566.5 780.4Z"/><path d="M586.4 783.1 L586.6 779.7 L589.1 781.5Z"/><path d="M565.5 798.3 L565.1 801.7 L562.7 799.8Z"/><path d="M592.1 804.3 L592.5 800.9 L594.9 802.8Z"/><path d="M637.3 752.4 L635.7 749.4 L638.8 749.7Z"/><path d="M620.6 793.6 L619.4 790.4 L622.4 791.1Z"/><path d="M612.1 781.1 L613.9 784.1 L610.8 783.9Z"/><path d="M635.4 771.2 L633.6 768.2 L636.7 768.4Z"/><path d="M633.5 772.8 L630.5 771.2 L633.3 769.7Z"/><path d="M607.5 812.5 L610.5 814.1 L607.7 815.6Z"/><path d="M652.0 755.1 L648.6 754.7 L650.6 752.3Z"/><path d="M641.7 807.1 L645.1 807.5 L643.1 809.9Z"/><path d="M639.9 759.2 L640.9 762.4 L637.9 761.6Z"/><path d="M661.7 755.5 L660.7 752.3 L663.7 753.1Z"/><path d="M636.9 798.3 L636.1 801.7 L634.0 799.4Z"/><path d="M649.9 805.1 L650.7 801.7 L652.8 804.0Z"/><path d="M694.6 761.3 L693.2 758.3 L696.3 758.7Z"/><path d="M693.0 785.9 L690.8 783.3 L693.9 782.9Z"/><path d="M714.4 758.2 L711.0 757.4 L713.3 755.3Z"/><path d="M735.2 751.3 L731.8 750.5 L734.1 748.4Z"/><path d="M767.0 755.4 L765.4 752.4 L768.5 752.6Z"/><path d="M737.9 778.9 L741.1 780.3 L738.5 782.0Z"/><path d="M739.4 777.9 L739.6 781.3 L736.9 779.8Z"/><path d="M730.6 806.8 L732.4 809.8 L729.3 809.6Z"/></g></g></svg>
<div class="a" style="left:1251px;top:142px;width:242px;height:161px;background:#535353;border:1px solid #3b3b3b;border-radius:4px 4px 0 0;box-shadow:0 0 3px rgba(0,0,0,0.25)"></div><div class="a" style="left:1252px;top:143px;width:240px;height:12px;background:#434343;border-radius:3px 3px 0 0"></div><div class="a" style="left:1252px;top:155px;width:240px;height:27px;background:#434343"></div><div class="a" style="left:1252px;top:155px;width:62px;height:27px;background:#535353"></div><svg class="a" style="left:1461px;top:144px" width="30" height="13"><path d="M6 2.5 L3 5.5 L6 8.5 M10 2.5 L7 5.5 L10 8.5" stroke="#d8d8d8" stroke-width="1.4" fill="none" transform="translate(0 -0.5)"/><path d="M20.5 2 L26.5 8.5 M26.5 2 L20.5 8.5" stroke="#d8d8d8" stroke-width="2"/></svg><div class="a" style="left:1314px;top:156px;width:1px;height:26px;background:#3a3a3a"></div><div class="a" style="left:1369px;top:156px;width:1px;height:26px;background:#3a3a3a"></div><div class="a" style="left:1428px;top:156px;width:1px;height:26px;background:#3a3a3a"></div><div class="a" style="left:1261px;top:164px;font-size:10px;color:#f0f0f0;font-weight:bold;white-space:nowrap;line-height:1;">Swatches</div><div class="a" style="left:1323px;top:164px;font-size:10px;color:#b8b8b8;font-weight:bold;white-space:nowrap;line-height:1;">Brushes</div><div class="a" style="left:1378px;top:164px;font-size:10px;color:#b8b8b8;font-weight:bold;white-space:nowrap;line-height:1;">Symbols</div><svg class="a" style="left:1476px;top:165px" width="11" height="9"><path d="M0 1 H10 M0 4.5 H10 M0 8 H10" stroke="#c8c8c8" stroke-width="1.2"/></svg><div class="a" style="left:1267px;top:199px;width:20px;height:20px;background:#fff;border:1px solid #111"></div><div class="a" style="left:1271px;top:203px;width:12px;height:12px;border:1.5px solid #111;background:#fff"></div><svg class="a" style="left:1267px;top:199px" width="20" height="20"><line x1="1.5" y1="18.5" x2="18.5" y2="1.5" stroke="#ff0000" stroke-width="2"/></svg><div class="a" style="left:1257px;top:189px;width:20px;height:20px;background:#ebebeb;border:1.2px solid #fff;outline:1px solid #111"></div><div class="a" style="left:1438px;top:189px;width:49px;height:24px;border:1px solid #4a4a4a;border-radius:4px;background:#535353"></div><div class="a" style="left:1463px;top:190px;width:23px;height:22px;background:#333;border-radius:0 3px 3px 0"></div><svg class="a" style="left:1443px;top:193px" width="14" height="15"><path d="M1 2 H13 M1 6 H13 M1 10 H13 M1 14 H13" stroke="#d0d0d0" stroke-width="1.5"/></svg><svg class="a" style="left:1468px;top:194px" width="14" height="14"><g fill="#fff"><rect x="0" y="0" width="3.5" height="3.5"/><rect x="5" y="0" width="3.5" height="3.5"/><rect x="10" y="0" width="3.5" height="3.5"/><rect x="0" y="5" width="3.5" height="3.5"/><rect x="5" y="5" width="3.5" height="3.5"/><rect x="10" y="5" width="3.5" height="3.5"/><rect x="0" y="10" width="3.5" height="3.5"/><rect x="5" y="10" width="3.5" height="3.5"/><rect x="10" y="10" width="3.5" height="3.5"/></g></svg><div class="a" style="left:1257px;top:224px;width:230px;height:52px;border:1px solid #4a4a4a;background:#535353"></div><div class="a" style="left:1474px;top:225px;width:12px;height:50px;background:#4b4b4b"></div><svg class="a" style="left:1474px;top:225px" width="12" height="50"><path d="M2.5 7 L6 3.5 L9.5 7" stroke="#888" stroke-width="1.2" fill="none"/><path d="M2.5 43 L6 46.5 L9.5 43" stroke="#888" stroke-width="1.2" fill="none"/></svg><svg class="a" style="left:1258px;top:225px" width="212" height="51"><defs><linearGradient id="sg1"><stop offset="0" stop-color="#fff"/><stop offset="1" stop-color="#111"/></linearGradient><linearGradient id="sg2"><stop offset="0" stop-color="#fff200"/><stop offset="1" stop-color="#ef4136"/></linearGradient><linearGradient id="sg3"><stop offset="0" stop-color="#1c75bc"/><stop offset="1" stop-color="#d8e8f5"/></linearGradient></defs><rect x="0" y="0" width="13" height="13" fill="#fff"/><line x1="1" y1="12" x2="12" y2="1" stroke="#f00" stroke-width="1.6"/><rect x="14" y="0" width="13" height="13" fill="#f2f2f2"/><circle cx="20.5" cy="6.5" r="3.8" stroke="#555" fill="none" stroke-width="0.8"/><path d="M20.5 1 V12 M15 6.5 H26" stroke="#555" stroke-width="0.8"/><rect x="28" y="0" width="13" height="13" fill="#ffffff"/><rect x="42" y="0" width="13" height="13" fill="#231f20"/><rect x="56" y="0" width="13" height="13" fill="#ed1c24"/><rect x="70" y="0" width="13" height="13" fill="#fff200"/><rect x="84" y="0" width="13" height="13" fill="#00a651"/><rect x="98" y="0" width="13" height="13" fill="#00aeef"/><rect x="112" y="0" width="13" height="13" fill="#2e3192"/><rect x="126" y="0" width="13" height="13" fill="#ec008c"/><rect x="140" y="0" width="13" height="13" fill="#be1e2d"/><rect x="154" y="0" width="13" height="13" fill="#ef4136"/><rect x="168" y="0" width="13" height="13" fill="#f15a29"/><rect x="182" y="0" width="13" height="13" fill="#f7941d"/><rect x="196" y="0" width="13" height="13" fill="#fbb040"/><rect x="0" y="14" width="13" height="13" fill="#f9ed32"/><rect x="14" y="14" width="13" height="13" fill="#d7df23"/><rect x="28" y="14" width="13" height="13" fill="#8dc63f"/><rect x="42" y="14" width="13" height="13" fill="#39b54a"/><rect x="56" y="14" width="13" height="13" fill="#009444"/><rect x="70" y="14" width="13" height="13" fill="#006838"/><rect x="84" y="14" width="13" height="13" fill="#2bb673"/><rect x="98" y="14" width="13" height="13" fill="#00a79d"/><rect x="112" y="14" width="13" height="13" fill="#27aae1"/><rect x="126" y="14" width="13" height="13" fill="#1c75bc"/><rect x="140" y="14" width="13" height="13" fill="#2b3990"/><rect x="154" y="14" width="13" height="13" fill="#262262"/><rect x="168" y="14" width="13" height="13" fill="#662d91"/><rect x="182" y="14" width="13" height="13" fill="#92278f"/><rect x="196" y="14" width="13" height="13" fill="#9e1f63"/><rect x="0" y="28" width="13" height="13" fill="#da1c5c"/><rect x="14" y="28" width="13" height="13" fill="#ee2a7b"/><rect x="28" y="28" width="13" height="13" fill="#c7b299"/><rect x="42" y="28" width="13" height="13" fill="#998675"/><rect x="56" y="28" width="13" height="13" fill="#736357"/><rect x="70" y="28" width="13" height="13" fill="#534741"/><rect x="84" y="28" width="13" height="13" fill="#c69c6d"/><rect x="98" y="28" width="13" height="13" fill="#a67c52"/><rect x="112" y="28" width="13" height="13" fill="#8c6239"/><rect x="126" y="28" width="13" height="13" fill="#754c24"/><rect x="140" y="28" width="13" height="13" fill="#603913"/><rect x="154" y="28" width="13" height="13" fill="#42210b"/><rect x="168" y="28" width="13" height="13" fill="url(#sg1)"/><rect x="182" y="28" width="13" height="13" fill="url(#sg2)"/><rect x="196" y="28" width="13" height="13" fill="url(#sg3)"/><rect x="0" y="42" width="13" height="8" fill="#222"/><circle cx="6.5" cy="50" r="5" fill="#ddd"/><rect x="14" y="42" width="13" height="8" fill="#5aa02c"/><rect x="17" y="42" width="7" height="3" fill="#fff"/><circle cx="18" cy="47" r="1.3" fill="#f5e663"/><rect x="28" y="42" width="13" height="8" fill="#9a7458"/><rect x="31" y="44" width="5" height="3" fill="#e8dcd0"/><rect x="42" y="42" width="13" height="8" fill="#000000"/><rect x="56" y="42" width="13" height="8" fill="#aaa39f"/><path d="M51 50 L55 46 V50 Z M65 50 L69 46 V50 Z" fill="#fff"/></svg><svg class="a" style="left:1262px;top:279px" width="210" height="14"><g fill="#c8c8c8"><rect x="1" y="1" width="2.2" height="10"/><rect x="4.5" y="1" width="2.2" height="10"/><path d="M8 1.5 L10 1 L13 10.5 L11 11 Z"/><path d="M12 11 L16 11 L14 13 Z"/></g><g stroke="#6c6c6c" fill="none" stroke-width="1.2"><rect x="35" y="0.5" width="9" height="9"/><rect x="31" y="3.5" width="9" height="9" fill="#535353"/><path d="M29 9 H36 M34 7 L36 9 L34 11"/></g><g fill="#c8c8c8"><rect x="86" y="0" width="3" height="3"/><rect x="89.7" y="0" width="3" height="3"/><rect x="93.4" y="0" width="3" height="3"/><rect x="86" y="3.7" width="3" height="3"/><rect x="93.4" y="3.7" width="3" height="3"/><rect x="86" y="7.4" width="3" height="3"/><rect x="89.7" y="7.4" width="3" height="3"/></g><path d="M98 10 L102 10 L100 12 Z" fill="#c8c8c8"/><g stroke="#6c6c6c" fill="none" stroke-width="1"><rect x="113.5" y="0.5" width="11" height="10"/><path d="M116 4 H122 M116 6.5 H122 M116 9 H122"/></g><path d="M138 1 H143 L144.5 3 H151 V11 H138 Z" fill="#c8c8c8"/><rect x="166.5" y="0.5" width="11" height="11" stroke="#c8c8c8" fill="none" stroke-width="1.3"/><path d="M172 3 V9 M169 6 H175" stroke="#c8c8c8" stroke-width="1.3"/><g stroke="#6c6c6c" fill="none" stroke-width="1.2"><path d="M190 2.5 H202 M193 2.5 V1 H199 V2.5 M191.5 3 V12 H200.5 V3 M194 5 V10 M196 5 V10 M198 5 V10"/></g></svg><div class="a" style="left:1252px;top:295px;width:240px;height:2px;background:#383838"></div><div class="a" style="left:1252px;top:297px;width:240px;height:6px;background:#535353"></div><svg class="a" style="left:1361px;top:297px" width="20" height="5"><path d="M0.5 0 V5 M2.5 0 V5 M4.5 0 V5 M6.5 0 V5 M8.5 0 V5 M10.5 0 V5 M12.5 0 V5 M14.5 0 V5 M16.5 0 V5" stroke="#353535" stroke-width="1"/></svg><div class="a" style="left:1385px;top:330px;width:232px;height:161px;background:#535353;border:1px solid #3b3b3b;border-radius:4px 4px 0 0;box-shadow:0 0 3px rgba(0,0,0,0.25)"></div><div class="a" style="left:1386px;top:331px;width:230px;height:13px;background:#434343;border-radius:3px 3px 0 0"></div><div class="a" style="left:1386px;top:344px;width:230px;height:27px;background:#434343"></div><div class="a" style="left:1386px;top:344px;width:120px;height:27px;background:#535353"></div><svg class="a" style="left:1585px;top:332px" width="30" height="14"><path d="M6 2.5 L3 5.5 L6 8.5 M10 2.5 L7 5.5 L10 8.5" stroke="#d8d8d8" stroke-width="1.4" fill="none" transform="translate(0 -0.5)"/><path d="M20.5 2 L26.5 8.5 M26.5 2 L20.5 8.5" stroke="#d8d8d8" stroke-width="2"/></svg><div class="a" style="left:1395px;top:352px;font-size:10.8px;color:#f0f0f0;font-weight:bold;white-space:nowrap;line-height:1;">RolandVersaWorks(4)</div><svg class="a" style="left:1600px;top:353px" width="11" height="9"><path d="M0 1 H10 M0 4.5 H10 M0 8 H10" stroke="#c8c8c8" stroke-width="1.2"/></svg><div class="a" style="left:1392px;top:378px;width:219px;height:20px;background:#434343;border:1px solid #4c4c4c;border-radius:3px"></div><svg class="a" style="left:1396px;top:381px" width="14" height="14"><circle cx="6" cy="6" r="4" stroke="#d8d8d8" stroke-width="1.5" fill="none"/><line x1="9" y1="9" x2="12" y2="12" stroke="#d8d8d8" stroke-width="1.8"/></svg><div class="a" style="left:1391px;top:403px;width:221px;height:61px;border:1px solid #4a4a4a"></div><svg class="a" style="left:1392px;top:404px" width="90" height="14"><rect x="0" y="0" width="13" height="13" fill="#ec008c"/><path d="M13 5 L13 13 L5 13 Z" fill="#fff"/><path d="M13 7 L13 13 L7 13 Z" fill="#000" transform="translate(0 0)"/><path d="M13 8.5 L13 13 L8.5 13 Z" fill="#fff"/><circle cx="10" cy="10.5" r="1" fill="#000"/><rect x="14" y="0" width="13" height="13" fill="#9d9fa2"/><path d="M27 5 L27 13 L19 13 Z" fill="#fff"/><path d="M27 7 L27 13 L21 13 Z" fill="#000" transform="translate(0 0)"/><path d="M27 8.5 L27 13 L22.5 13 Z" fill="#fff"/><circle cx="24" cy="10.5" r="1" fill="#000"/><rect x="28" y="0" width="13" height="13" fill="#a09a98"/><rect x="28.5" y="0.5" width="12" height="12" fill="none" stroke="#fff" stroke-width="1"/><rect x="30" y="2" width="9" height="9" fill="none" stroke="#000" stroke-width="1.2"/><path d="M41 5 L41 13 L33 13 Z" fill="#fff"/><path d="M41 7 L41 13 L35 13 Z" fill="#000" transform="translate(0 0)"/><path d="M41 8.5 L41 13 L36.5 13 Z" fill="#fff"/><circle cx="38" cy="10.5" r="1" fill="#000"/><rect x="42" y="0" width="13" height="13" fill="#8aa7b6"/><path d="M55 5 L55 13 L47 13 Z" fill="#fff"/><path d="M55 7 L55 13 L49 13 Z" fill="#000" transform="translate(0 0)"/><path d="M55 8.5 L55 13 L50.5 13 Z" fill="#fff"/><circle cx="52" cy="10.5" r="1" fill="#000"/><rect x="56" y="0" width="13" height="13" fill="#5e6e78"/><path d="M69 5 L69 13 L61 13 Z" fill="#fff"/><path d="M69 7 L69 13 L63 13 Z" fill="#000" transform="translate(0 0)"/><path d="M69 8.5 L69 13 L64.5 13 Z" fill="#fff"/><circle cx="66" cy="10.5" r="1" fill="#000"/><rect x="70" y="0" width="13" height="13" fill="#a6ce39"/><path d="M83 5 L83 13 L75 13 Z" fill="#fff"/><path d="M83 7 L83 13 L77 13 Z" fill="#000" transform="translate(0 0)"/><path d="M83 8.5 L83 13 L78.5 13 Z" fill="#fff"/><circle cx="80" cy="10.5" r="1" fill="#000"/></svg><svg class="a" style="left:1396px;top:466px" width="190" height="14"><g fill="#c8c8c8"><rect x="1" y="1" width="2.2" height="10"/><rect x="4.5" y="1" width="2.2" height="10"/><path d="M8 1.5 L10 1 L13 10.5 L11 11 Z"/><path d="M12 11 L16 11 L14 13 Z"/></g><path d="M38 1 L31 6.5 L38 12 Z" fill="#b0b0b0"/><path d="M58 1 L65 6.5 L58 12 Z" fill="#707070"/><path d="M172 1 L183 12 M183 1 L172 12" stroke="#d0d0d0" stroke-width="1.6"/><path d="M176 9 L173 12 L172.5 10 Z" fill="#d0d0d0"/></svg><div class="a" style="left:1386px;top:483px;width:230px;height:2px;background:#383838"></div><div class="a" style="left:1386px;top:485px;width:230px;height:6px;background:#535353"></div><svg class="a" style="left:1491px;top:485px" width="20" height="5"><path d="M0.5 0 V5 M2.5 0 V5 M4.5 0 V5 M6.5 0 V5 M8.5 0 V5 M10.5 0 V5 M12.5 0 V5 M14.5 0 V5 M16.5 0 V5" stroke="#353535" stroke-width="1"/></svg><div class="a" style="left:1253px;top:515px;width:256px;height:339px;background:#535353;border:1px solid #3b3b3b;border-radius:4px 4px 0 0;box-shadow:0 0 3px rgba(0,0,0,0.25)"></div><div class="a" style="left:1254px;top:516px;width:254px;height:13px;background:#434343;border-radius:3px 3px 0 0"></div><div class="a" style="left:1254px;top:529px;width:254px;height:26px;background:#434343"></div><div class="a" style="left:1254px;top:529px;width:75px;height:26px;background:#535353"></div><svg class="a" style="left:1477px;top:517px" width="30" height="14"><path d="M6 2.5 L3 5.5 L6 8.5 M10 2.5 L7 5.5 L10 8.5" stroke="#d8d8d8" stroke-width="1.4" fill="none" transform="translate(0 -0.5)"/><path d="M20.5 2 L26.5 8.5 M26.5 2 L20.5 8.5" stroke="#d8d8d8" stroke-width="2"/></svg><div class="a" style="left:1263px;top:537px;font-size:10px;color:#f0f0f0;font-weight:bold;white-space:nowrap;line-height:1;">Image Trace</div><svg class="a" style="left:1296px;top:565px" width="170" height="20"><g fill="none" stroke="#767676" stroke-width="1.6"><path d="M9 4 A7 7 0 1 1 9 17"/><circle cx="6" cy="13" r="2.5"/></g><g fill="#767676"><rect x="34" y="5" width="15" height="10" rx="1"/><rect x="38" y="3" width="6" height="3"/></g><circle cx="41.5" cy="10" r="2.6" fill="#535353"/><g fill="none" stroke="#767676" stroke-width="1.4"><rect x="63" y="3" width="13" height="13"/><path d="M63 10 H70 V3 M70 10 V16"/></g><rect x="92" y="3" width="14" height="14" fill="url(#itg)"/><defs><linearGradient id="itg"><stop offset="0" stop-color="#5a5a5a"/><stop offset="1" stop-color="#8a8a8a"/></linearGradient></defs><rect x="120.5" y="3.5" width="13" height="13" fill="none" stroke="#767676" stroke-width="1.4"/><rect x="121" y="4" width="6" height="12" fill="#767676"/><path d="M150 3.5 H158 V8 A5 5 0 1 1 155 17 L150 13 Z" fill="none" stroke="#767676" stroke-width="1.5"/></svg><div class="a" style="left:1259px;top:594px;width:244px;height:1px;background:#464646"></div><div class="a" style="left:1200px;top:607px;width:106px;text-align:right;font-size:10px;color:#7a7a7a;line-height:1">Preset:</div><div class="a" style="left:1310px;top:601px;width:164px;height:21px;background:#585858;border-radius:2px"></div><div class="a" style="left:1317px;top:607px;font-size:10px;color:#7a7a7a;font-weight:normal;white-space:nowrap;line-height:1;">[Default]</div><svg class="a" style="left:1458px;top:607px" width="12" height="10"><path d="M2 3 L6 7 L10 3" stroke="#7a7a7a" stroke-width="1.3" fill="none"/></svg><div class="a" style="left:1200px;top:636px;width:106px;text-align:right;font-size:10px;color:#7a7a7a;line-height:1">View:</div><div class="a" style="left:1310px;top:630px;width:164px;height:21px;background:#585858;border-radius:2px"></div><div class="a" style="left:1317px;top:636px;font-size:10px;color:#7a7a7a;font-weight:normal;white-space:nowrap;line-height:1;">Tracing Result</div><svg class="a" style="left:1458px;top:636px" width="12" height="10"><path d="M2 3 L6 7 L10 3" stroke="#7a7a7a" stroke-width="1.3" fill="none"/></svg><div class="a" style="left:1200px;top:664px;width:106px;text-align:right;font-size:10px;color:#7a7a7a;line-height:1">Mode:</div><div class="a" style="left:1310px;top:658px;width:164px;height:21px;background:#585858;border-radius:2px"></div><div class="a" style="left:1317px;top:664px;font-size:10px;color:#7a7a7a;font-weight:normal;white-space:nowrap;line-height:1;">Black and White</div><svg class="a" style="left:1458px;top:664px" width="12" height="10"><path d="M2 3 L6 7 L10 3" stroke="#7a7a7a" stroke-width="1.3" fill="none"/></svg><div class="a" style="left:1200px;top:690px;width:106px;text-align:right;font-size:10px;color:#7a7a7a;line-height:1">Palette:</div><div class="a" style="left:1310px;top:684px;width:164px;height:21px;background:#585858;border-radius:2px"></div><div class="a" style="left:1317px;top:690px;font-size:10px;color:#7a7a7a;font-weight:normal;white-space:nowrap;line-height:1;">Limited</div><svg class="a" style="left:1458px;top:690px" width="12" height="10"><path d="M2 3 L6 7 L10 3" stroke="#7a7a7a" stroke-width="1.3" fill="none"/></svg><svg class="a" style="left:1484px;top:605px" width="14" height="12"><path d="M0 2 H2 M4 2 H13 M0 6 H2 M4 6 H13 M0 10 H2 M4 10 H13" stroke="#7a7a7a" stroke-width="1"/></svg><svg class="a" style="left:1482px;top:635px" width="16" height="12"><path d="M1 6 Q8 -1 15 6 Q8 13 1 6 Z" fill="#7a7a7a"/><circle cx="8" cy="6" r="2.5" fill="#535353"/></svg><div class="a" style="left:1200px;top:716px;width:106px;text-align:right;font-size:10px;color:#7a7a7a;line-height:1">Threshold:</div><div class="a" style="left:1311px;top:720px;width:149px;height:1px;background:#6a6a6a"></div><div class="a" style="left:1379px;top:714px;width:12px;height:12px;border:2px solid #7a7a7a;border-radius:50%;background:#535353"></div><div class="a" style="left:1465px;top:710px;width:37px;height:20px;background:#585858"></div><div class="a" style="left:1471px;top:715px;font-size:10px;color:#707070;font-weight:normal;white-space:nowrap;line-height:1;">128</div><div class="a" style="left:1310px;top:732px;font-size:10px;color:#7a7a7a;font-weight:normal;white-space:nowrap;line-height:1;">Less</div><div class="a" style="left:1438px;top:732px;font-size:10px;color:#7a7a7a;font-weight:normal;white-space:nowrap;line-height:1;">More</div><svg class="a" style="left:1266px;top:752px" width="8" height="12"><path d="M1 0.5 L7 6 L1 11.5 Z" fill="#d0d0d0"/></svg><div class="a" style="left:1280px;top:753px;font-size:10px;color:#e8e8e8;font-weight:normal;white-space:nowrap;line-height:1;">Advanced</div><div class="a" style="left:1325px;top:758px;width:178px;height:1px;background:#464646"></div><div class="a" style="left:1259px;top:774px;width:244px;height:1px;background:#464646"></div><svg class="a" style="left:1258px;top:790px" width="17" height="17"><circle cx="8.5" cy="8.5" r="7" stroke="#d0d0d0" stroke-width="1.4" fill="none"/><rect x="7.6" y="7" width="1.8" height="6" fill="#d0d0d0"/><rect x="7.6" y="4" width="1.8" height="1.8" fill="#d0d0d0"/><rect x="6.5" y="12" width="4" height="1.2" fill="#d0d0d0"/></svg><div class="a" style="left:1285px;top:784px;font-size:10px;color:#7a7a7a;font-weight:normal;white-space:nowrap;line-height:1;">Paths:</div><div class="a" style="left:1328px;top:784px;font-size:10px;color:#7a7a7a;font-weight:normal;white-space:nowrap;line-height:1;">0</div><div class="a" style="left:1408px;top:784px;font-size:10px;color:#7a7a7a;font-weight:normal;white-space:nowrap;line-height:1;">Colors:</div><div class="a" style="left:1444px;top:784px;font-size:10px;color:#7a7a7a;font-weight:normal;white-space:nowrap;line-height:1;">0</div><div class="a" style="left:1285px;top:805px;font-size:10px;color:#7a7a7a;font-weight:normal;white-space:nowrap;line-height:1;">Anchors:</div><div class="a" style="left:1331px;top:805px;font-size:10px;color:#7a7a7a;font-weight:normal;white-space:nowrap;line-height:1;">0</div><div class="a" style="left:1259px;top:823px;width:244px;height:1px;background:#464646"></div><div class="a" style="left:1260px;top:835px;width:12px;height:12px;border:1px solid #7a7a7a;border-radius:1px"></div><div class="a" style="left:1277px;top:836px;font-size:10px;color:#7a7a7a;font-weight:normal;white-space:nowrap;line-height:1;">Preview</div><div class="a" style="left:1439px;top:831px;width:64px;height:18px;background:#585858;border-radius:2px"></div><div class="a" style="left:1459px;top:835px;font-size:10px;color:#727272;font-weight:normal;white-space:nowrap;line-height:1;">Trace</div>
<div class="a" style="left:1671px;top:31px;width:3px;height:1009px;background:#434343"></div><div class="a" style="left:1671px;top:31px;width:2px;height:1009px;background:#363636"></div><div class="a" style="left:1674px;top:31px;width:246px;height:1009px;background:#535353"></div><div class="a" style="left:1674px;top:31px;width:246px;height:12px;background:#434343"></div><svg class="a" style="left:1903px;top:32px" width="12" height="10"><path d="M2 2 L5 5 L2 8 Z M6 2 L9 5 L6 8 Z" fill="#d0d0d0" stroke="#d0d0d0" stroke-width="0.8"/></svg><div class="a" style="left:1674px;top:42px;width:246px;height:1px;background:#3a3a3a"></div><div class="a" style="left:1674px;top:43px;width:246px;height:26px;background:#434343"></div><div class="a" style="left:1741px;top:43px;width:47px;height:26px;background:#535353"></div><div class="a" style="left:1740px;top:44px;width:1px;height:25px;background:#3a3a3a"></div><div class="a" style="left:1846px;top:44px;width:1px;height:25px;background:#3a3a3a"></div><div class="a" style="left:1683px;top:50px;font-size:11px;color:#b8b8b8;font-weight:bold;white-space:nowrap;line-height:1;font-size:10px;top:51px">Properties</div><div class="a" style="left:1750px;top:50px;font-size:11px;color:#f0f0f0;font-weight:bold;white-space:nowrap;line-height:1;font-size:10px;top:51px">Layers</div><div class="a" style="left:1797px;top:50px;font-size:11px;color:#b8b8b8;font-weight:bold;white-space:nowrap;line-height:1;font-size:10px;top:51px">Libraries</div><svg class="a" style="left:1902px;top:52px" width="12" height="10"><path d="M0 1 H11 M0 4.5 H11 M0 8 H11" stroke="#c8c8c8" stroke-width="1.2"/></svg><div class="a" style="left:1679px;top:76px;width:235px;height:33px;border:1px solid #4c4c4c;border-radius:3px"></div><div class="a" style="left:1686px;top:80px;width:199px;height:24px;background:#434343;border:1px solid #4c4c4c;border-radius:3px"></div><svg class="a" style="left:1690px;top:85px" width="14" height="14"><circle cx="6" cy="6" r="4" stroke="#d8d8d8" stroke-width="1.5" fill="none"/><line x1="9" y1="9" x2="12" y2="12" stroke="#d8d8d8" stroke-width="1.8"/></svg><div class="a" style="left:1714px;top:86px;font-size:13px;color:#646464;font-weight:normal;white-space:nowrap;line-height:1;">Search All</div><svg class="a" style="left:1894px;top:85px" width="15" height="15"><path d="M0.5 0.5 H13.5 L8.5 6.5 V14 L5.5 11.5 V6.5 Z" fill="#c0c0c0"/></svg><div class="a" style="left:1680px;top:111px;width:234px;height:909px;border:1px solid #4a4a4a;border-radius:3px"></div><div class="a" style="left:1681px;top:132px;width:232px;height:1px;background:#4a4a4a"></div><div class="a" style="left:1700px;top:112px;width:1px;height:20px;background:#4a4a4a"></div><div class="a" style="left:1727px;top:112px;width:1px;height:20px;background:#4a4a4a"></div><div class="a" style="left:1877px;top:112px;width:1px;height:20px;background:#4a4a4a"></div><div class="a" style="left:1723px;top:114px;width:3px;height:16px;background:#4ef2f2"></div><svg class="a" style="left:1683px;top:117px" width="14" height="10"><path d="M1 5 Q7 -1.5 13 5 Q7 11.5 1 5 Z" fill="#c8c8c8"/><circle cx="7" cy="5" r="2.6" fill="#535353"/><path d="M7 3 L6 5 L8 5 L7 7" stroke="#c8c8c8" stroke-width="0.8" fill="none"/></svg><svg class="a" style="left:1733px;top:116px" width="8" height="12"><path d="M2 2 L6 6 L2 10" stroke="#d8d8d8" stroke-width="1.4" fill="none"/></svg><div class="a" style="left:1752px;top:114px;width:18px;height:17px;background:#fff;border:1px solid #111"></div><div class="a" style="left:1775px;top:118px;font-size:11px;color:#e8e8e8;font-weight:normal;white-space:nowrap;line-height:1;font-size:10.5px">graphic</div><div class="a" style="left:1884px;top:118px;width:9px;height:9px;border:1.2px solid #d0d0d0;border-radius:50%"></div><div class="a" style="left:1681px;top:133px;width:232px;height:21px;background:#4b5f79"></div><svg class="a" style="left:1906px;top:133px" width="7" height="7"><path d="M0 0 H7 V7 Z" fill="#e0e0e0"/></svg><div class="a" style="left:1681px;top:153px;width:232px;height:1px;background:#4a4a4a"></div><div class="a" style="left:1700px;top:133px;width:1px;height:20px;background:#4a4a4a"></div><div class="a" style="left:1727px;top:133px;width:1px;height:20px;background:#4a4a4a"></div><div class="a" style="left:1877px;top:133px;width:1px;height:20px;background:#4a4a4a"></div><div class="a" style="left:1723px;top:135px;width:3px;height:16px;background:#f24ef2"></div><svg class="a" style="left:1683px;top:138px" width="14" height="10"><path d="M1 5 Q7 -1.5 13 5 Q7 11.5 1 5 Z" fill="#c8c8c8"/><circle cx="7" cy="5" r="2.6" fill="#535353"/><path d="M7 3 L6 5 L8 5 L7 7" stroke="#c8c8c8" stroke-width="0.8" fill="none"/></svg><svg class="a" style="left:1733px;top:137px" width="8" height="12"><path d="M2 2 L6 6 L2 10" stroke="#d8d8d8" stroke-width="1.4" fill="none"/></svg><div class="a" style="left:1752px;top:135px;width:18px;height:17px;background:#fff;border:1px solid #111"></div><div class="a" style="left:1775px;top:139px;font-size:11px;color:#e8e8e8;font-weight:normal;white-space:nowrap;line-height:1;font-size:10.5px">knobs</div><div class="a" style="left:1884px;top:139px;width:9px;height:9px;border:1.2px solid #d0d0d0;border-radius:50%"></div><div class="a" style="left:1681px;top:175px;width:232px;height:1px;background:#4a4a4a"></div><div class="a" style="left:1700px;top:154px;width:1px;height:21px;background:#4a4a4a"></div><div class="a" style="left:1727px;top:154px;width:1px;height:21px;background:#4a4a4a"></div><div class="a" style="left:1877px;top:154px;width:1px;height:21px;background:#4a4a4a"></div><div class="a" style="left:1723px;top:156px;width:3px;height:17px;background:#4f4ff2"></div><svg class="a" style="left:1733px;top:158px" width="8" height="12"><path d="M2 2 L6 6 L2 10" stroke="#d8d8d8" stroke-width="1.4" fill="none"/></svg><div class="a" style="left:1752px;top:156px;width:18px;height:18px;background:#fff;border:1px solid #111"></div><div class="a" style="left:1754px;top:158px;width:14px;height:14px;border:1px solid #777"></div><div class="a" style="left:1775px;top:160px;font-size:11px;color:#e8e8e8;font-weight:normal;white-space:nowrap;line-height:1;font-size:10.5px">drill</div><div class="a" style="left:1884px;top:160px;width:9px;height:9px;border:1.2px solid #d0d0d0;border-radius:50%"></div><div class="a" style="left:1681px;top:196px;width:232px;height:1px;background:#4a4a4a"></div><div class="a" style="left:1700px;top:176px;width:1px;height:20px;background:#4a4a4a"></div><div class="a" style="left:1727px;top:176px;width:1px;height:20px;background:#4a4a4a"></div><div class="a" style="left:1877px;top:176px;width:1px;height:20px;background:#4a4a4a"></div><div class="a" style="left:1723px;top:178px;width:3px;height:16px;background:#f24f4f"></div><svg class="a" style="left:1683px;top:181px" width="14" height="10"><path d="M1 5 Q7 -1.5 13 5 Q7 11.5 1 5 Z" fill="#c8c8c8"/><circle cx="7" cy="5" r="2.6" fill="#535353"/><path d="M7 3 L6 5 L8 5 L7 7" stroke="#c8c8c8" stroke-width="0.8" fill="none"/></svg><div class="a" style="left:1752px;top:178px;width:18px;height:17px;background:#fff;border:1px solid #111"></div><div class="a" style="left:1775px;top:182px;font-size:11px;color:#e8e8e8;font-weight:normal;white-space:nowrap;line-height:1;font-size:10.5px">GLOSS-V OR -M</div><div class="a" style="left:1884px;top:182px;width:9px;height:9px;border:1.2px solid #d0d0d0;border-radius:50%"></div><div class="a" style="left:1681px;top:217px;width:232px;height:1px;background:#4a4a4a"></div><div class="a" style="left:1700px;top:197px;width:1px;height:20px;background:#4a4a4a"></div><div class="a" style="left:1727px;top:197px;width:1px;height:20px;background:#4a4a4a"></div><div class="a" style="left:1877px;top:197px;width:1px;height:20px;background:#4a4a4a"></div><div class="a" style="left:1723px;top:199px;width:3px;height:16px;background:#4ff24f"></div><svg class="a" style="left:1683px;top:202px" width="14" height="10"><path d="M1 5 Q7 -1.5 13 5 Q7 11.5 1 5 Z" fill="#c8c8c8"/><circle cx="7" cy="5" r="2.6" fill="#535353"/><path d="M7 3 L6 5 L8 5 L7 7" stroke="#c8c8c8" stroke-width="0.8" fill="none"/></svg><div class="a" style="left:1752px;top:199px;width:18px;height:17px;background:#fff;border:1px solid #111"></div><div class="a" style="left:1775px;top:203px;font-size:11px;color:#e8e8e8;font-weight:normal;white-space:nowrap;line-height:1;font-size:10.5px">COLOR</div><div class="a" style="left:1884px;top:203px;width:9px;height:9px;border:1.2px solid #d0d0d0;border-radius:50%"></div><div class="a" style="left:1681px;top:238px;width:232px;height:1px;background:#4a4a4a"></div><div class="a" style="left:1700px;top:218px;width:1px;height:20px;background:#4a4a4a"></div><div class="a" style="left:1727px;top:218px;width:1px;height:20px;background:#4a4a4a"></div><div class="a" style="left:1877px;top:218px;width:1px;height:20px;background:#4a4a4a"></div><div class="a" style="left:1723px;top:220px;width:3px;height:16px;background:#4f7ff2"></div><svg class="a" style="left:1683px;top:223px" width="14" height="10"><path d="M1 5 Q7 -1.5 13 5 Q7 11.5 1 5 Z" fill="#c8c8c8"/><circle cx="7" cy="5" r="2.6" fill="#535353"/><path d="M7 3 L6 5 L8 5 L7 7" stroke="#c8c8c8" stroke-width="0.8" fill="none"/></svg><div class="a" style="left:1752px;top:220px;width:18px;height:17px;background:#fff;border:1px solid #111"></div><div class="a" style="left:1775px;top:224px;font-size:11px;color:#e8e8e8;font-weight:normal;white-space:nowrap;line-height:1;font-size:10.5px">WHITE</div><div class="a" style="left:1884px;top:224px;width:9px;height:9px;border:1.2px solid #d0d0d0;border-radius:50%"></div><div class="a" style="left:1681px;top:259px;width:232px;height:1px;background:#4a4a4a"></div><div class="a" style="left:1700px;top:239px;width:1px;height:20px;background:#4a4a4a"></div><div class="a" style="left:1727px;top:239px;width:1px;height:20px;background:#4a4a4a"></div><div class="a" style="left:1877px;top:239px;width:1px;height:20px;background:#4a4a4a"></div><div class="a" style="left:1723px;top:241px;width:3px;height:16px;background:#808080"></div><svg class="a" style="left:1683px;top:244px" width="14" height="10"><path d="M1 5 Q7 -1.5 13 5 Q7 11.5 1 5 Z" fill="#c8c8c8"/><circle cx="7" cy="5" r="2.6" fill="#535353"/><path d="M7 3 L6 5 L8 5 L7 7" stroke="#c8c8c8" stroke-width="0.8" fill="none"/></svg><svg class="a" style="left:1733px;top:243px" width="8" height="12"><path d="M2 2 L6 6 L2 10" stroke="#d8d8d8" stroke-width="1.4" fill="none"/></svg><div class="a" style="left:1752px;top:241px;width:18px;height:17px;background:#fff;border:1px solid #111"></div><div class="a" style="left:1754px;top:243px;width:14px;height:13px;background:#5a5b5d"></div><div class="a" style="left:1775px;top:245px;font-size:11px;color:#e8e8e8;font-weight:normal;white-space:nowrap;line-height:1;font-size:10.5px">background</div><div class="a" style="left:1884px;top:245px;width:9px;height:9px;border:1.2px solid #d0d0d0;border-radius:50%"></div><div class="a" style="left:1680px;top:1025px;font-size:11px;color:#c8c8c8;font-weight:normal;white-space:nowrap;line-height:1;font-size:10.5px">7 Layers</div><svg class="a" style="left:1724px;top:1022px" width="196" height="16"><g stroke="#c8c8c8" fill="none" stroke-width="1.2"><rect x="3.5" y="3.5" width="10" height="9"/></g><g fill="#c8c8c8"><rect x="2" y="2" width="3" height="3"/><rect x="12" y="2" width="3" height="3"/><rect x="2" y="11" width="3" height="3"/><path d="M13 8 H17 V15 L15 13.5 L13 15 Z"/></g><g stroke="#c8c8c8" fill="none" stroke-width="1.3"><path d="M40 5 H36.5 V14.5 H46 V11 M42 2.5 H47.5 V8 M47.5 2.5 L41 9"/></g><g stroke="#6a6a6a" fill="none" stroke-width="1.5"><circle cx="63" cy="7" r="4.2"/><line x1="66" y1="10" x2="69.5" y2="13.5"/></g><g stroke="#c8c8c8" fill="none" stroke-width="1.1"><rect x="84.5" y="3.5" width="7" height="7" fill="#c8c8c8"/><rect x="87.5" y="6.5" width="7" height="7"/></g><g stroke="#c8c8c8" fill="none" stroke-width="1.2"><path d="M109 2 V6 H113 M111.5 4 L113.5 6 L111.5 8"/><rect x="114.5" y="3.5" width="9" height="9"/><path d="M119 5.5 V10.5 M116.5 8 H121.5"/></g><g stroke="#c8c8c8" fill="none" stroke-width="1.2"><rect x="137.5" y="3.5" width="10" height="10"/><path d="M142.5 6 V11 M140 8.5 H145"/></g><g stroke="#c8c8c8" fill="none" stroke-width="1.2"><path d="M162 4.5 H174 M165 4.5 V2.5 H171 V4.5 M163.5 5 V14.5 H172.5 V5 M166 7 V12.5 M168 7 V12.5 M170 7 V12.5"/></g></svg>
<div class="a" style="left:0;top:1039px;width:1920px;height:1px;background:#2a2a2a"></div><div id="taskbar" class="a"></div><svg class="a" style="left:16px;top:1052px" width="17" height="17"><g fill="#fff"><path d="M0 2.3 L7 1.3 V7.6 H0 Z"/><path d="M8 1.1 L16.5 0 V7.6 H8 Z"/><path d="M0 8.6 H7 V15 L0 14 Z"/><path d="M8 8.6 H16.5 V16.3 L8 15.2 Z"/></g></svg><div class="a" style="left:48px;top:1040px;width:288px;height:40px;background:#f0f0f0;border:1px solid #d0d0d0;border-bottom:none"></div><svg class="a" style="left:59px;top:1051px" width="20" height="20"><circle cx="11.5" cy="7.5" r="5.3" stroke="#222" stroke-width="1.4" fill="none"/><line x1="7.7" y1="11.3" x2="1.5" y2="17.5" stroke="#222" stroke-width="1.5"/></svg><div class="a" style="left:88px;top:1051px;font-size:15px;color:#1a1a1a;line-height:18px;white-space:nowrap">Type here to search</div><svg class="a" style="left:270px;top:1043px" width="56" height="36"><path d="M13 20 L26 20 L24 34 L15 34 Z" fill="#d9853b"/><rect x="12" y="18" width="15" height="3" fill="#e8a05a"/><path d="M19 18 L14 9 M19 18 L19 6 M19 18 L24 9" stroke="#6aa84f" stroke-width="1.6"/><circle cx="12" cy="8" r="4" fill="#ec6a87"/><circle cx="20" cy="5" r="4.3" fill="#ec6a87"/><circle cx="28" cy="9" r="3.8" fill="#ec6a87"/><circle cx="9" cy="14" r="3.4" fill="#ec6a87"/><rect x="31" y="17" width="22" height="17" fill="#5cb545"/><rect x="31" y="17" width="22" height="4" fill="#7dd35f"/><rect x="40" y="17" width="4" height="17" fill="#f2c94c"/><path d="M42 17 Q36 9 34 15 Z M42 17 Q48 9 50 15 Z" fill="#f2c94c"/></svg><svg class="a" style="left:351px;top:1052px" width="18" height="17"><g stroke="#fff" stroke-width="1.3" fill="none"><path d="M1 1.5 H13 M1 15.5 H13"/><rect x="2.5" y="4.5" width="9" height="8"/><path d="M16 4 V13"/></g><rect x="15.3" y="1" width="1.6" height="1.6" fill="#fff"/></svg><svg class="a" style="left:399px;top:1050px" width="23" height="20"><path d="M1 2 H8 L10 4 H22 V19 H1 Z" fill="#f4c74e"/><rect x="1" y="5" width="21" height="14" fill="#fdd86a"/><path d="M6 19 V12 H17 V19 H14 V15 H9 V19 Z" fill="#3b8ee0"/></svg><svg class="a" style="left:447px;top:1047px" width="25" height="25"><defs><radialGradient id="ffg" cx="0.6" cy="0.3" r="0.8"><stop offset="0" stop-color="#ffde3b"/><stop offset="0.5" stop-color="#ff8a16"/><stop offset="1" stop-color="#e31587"/></radialGradient></defs><circle cx="12.5" cy="13.5" r="11" fill="url(#ffg)"/><circle cx="12" cy="13" r="5.5" fill="#7542e5"/><path d="M3 9 Q7 3 12 6 Q7 6 6 11 Z" fill="#ff9a1e"/><path d="M15 1 Q24 5 22 14 Q20 6 15 1 Z" fill="#ffbd2e"/></svg><svg class="a" style="left:496px;top:1048px" width="26" height="25"><path d="M2 2 L12 3 L13 13 L2 12 Z" fill="#ef6c1a"/><path d="M13 3 L24 4 L23 13 L13 13 Z" fill="#2b8fd0"/><path d="M2 13 L13 13 L13 24 L3 23 Z" fill="#4eaa3c"/><path d="M13 13 L23 13 L22 24 L13 24 Z" fill="#d8332a"/><path d="M4 2 L11 2 L12 8 L5 7 Z" fill="#f7c21a" opacity="0.7"/></svg><div class="a" style="left:534px;top:1040px;width:48px;height:40px;background:#3d3d3d"></div><div class="a" style="left:547px;top:1049px;width:22px;height:21px;background:#330000;border-radius:3px;color:#ff9a00;font-weight:bold;font-size:13px;line-height:21px;text-align:center">Ai</div><svg class="a" style="left:597px;top:1050px" width="19" height="19"><polygon points="18.33,11.26 15.15,13.28 14.50,16.98 10.83,16.17 7.74,18.33 5.72,15.15 2.02,14.50 2.83,10.83 0.67,7.74 3.85,5.72 4.50,2.02 8.17,2.83 11.26,0.67 13.28,3.85 16.98,4.50 16.17,8.17" fill="#fff"/><circle cx="9.5" cy="9.5" r="3.3" fill="#1c1c1c"/></svg><div class="a" style="left:440px;top:1078px;width:40px;height:2px;background:#7bb8ea"></div><div class="a" style="left:489px;top:1078px;width:40px;height:2px;background:#7bb8ea"></div><div class="a" style="left:534px;top:1078px;width:48px;height:2px;background:#7bb8ea"></div><div class="a" style="left:587px;top:1078px;width:40px;height:2px;background:#7bb8ea"></div><svg class="a" style="left:1499px;top:1049px" width="26" height="23"><circle cx="10.5" cy="10.5" r="10" fill="#f5a623"/><path d="M8 20 Q6 14 12 14 Q14 10 18 12 Q24 12 24 17 Q25 21 21 21 H10 Q8 21 8 20 Z" fill="#dbe6f5"/></svg><div class="a" style="left:1529px;top:1052px;font-size:14.2px;color:#fff;line-height:18px;white-space:nowrap">57°F&nbsp; Mostly sunny</div><svg class="a" style="left:1672px;top:1054px" width="14" height="10"><path d="M1.5 8 L7 2.5 L12.5 8" stroke="#fff" stroke-width="1.4" fill="none"/></svg><svg class="a" style="left:1696px;top:1051px" width="16" height="18"><g stroke="#fff" stroke-width="1.1" fill="none"><rect x="1.5" y="5" width="9" height="8" rx="1.5"/><path d="M10.5 8 L14 6 V12 L10.5 10"/><path d="M2 2 Q6 0 10 2 M2 16 Q6 18 10 16"/></g></svg><svg class="a" style="left:1718px;top:1051px" width="19" height="18"><g stroke="#fff" stroke-width="1.1" fill="none"><rect x="5.5" y="3.5" width="12" height="9"/><path d="M11.5 12.5 V15.5 M8 15.5 H15"/><rect x="1.5" y="1.5" width="4" height="4"/></g></svg><svg class="a" style="left:1742px;top:1051px" width="20" height="18"><g stroke="#fff" stroke-width="1.1" fill="none"><path d="M1.5 6.5 H4.5 L9 2.5 V15.5 L4.5 11.5 H1.5 Z"/><path d="M12 6 Q13.5 9 12 12 M14.5 4 Q17 9 14.5 14 M17 2 Q20.5 9 17 16"/></g></svg><div class="a" style="left:1773px;top:1045px;font-size:12px;color:#fff;line-height:14px;white-space:nowrap">7:45 PM</div><div class="a" style="left:1769px;top:1063px;font-size:12px;color:#fff;line-height:14px;white-space:nowrap">4/29/2024</div><svg class="a" style="left:1838px;top:1050px" width="26" height="26"><path d="M1.5 1.5 H19.5 V13.5 H8 L4 17 V13.5 H1.5 Z" fill="#fff"/><path d="M4 5 H17 M4 8 H17 M4 11 H13" stroke="#1c1c1c" stroke-width="1"/><circle cx="18" cy="18" r="6.8" fill="#1c1c1c" stroke="#777" stroke-width="1.2"/><text x="18" y="22" font-size="10" fill="#fff" text-anchor="middle" font-family="Liberation Sans">2</text></svg><svg class="a" style="left:1876px;top:1049px" width="23" height="23"><defs><linearGradient id="cpg" x1="0" y1="0" x2="1" y2="1"><stop offset="0" stop-color="#2ec8f0"/><stop offset="0.5" stop-color="#8a5cf0"/><stop offset="1" stop-color="#f04eb0"/></linearGradient></defs><path d="M6 1 H14 L10 12 H2 Z M10 10 H20 L16 21 H7 Z" fill="url(#cpg)"/><rect x="8" y="14" width="14" height="8" rx="1" fill="#ffd000"/><text x="15" y="20.5" font-size="6" font-weight="bold" fill="#222" text-anchor="middle" font-family="Liberation Sans">PRE</text></svg><div class="a" style="left:1916px;top:1040px;width:1px;height:40px;background:#666"></div>
</body></html>
